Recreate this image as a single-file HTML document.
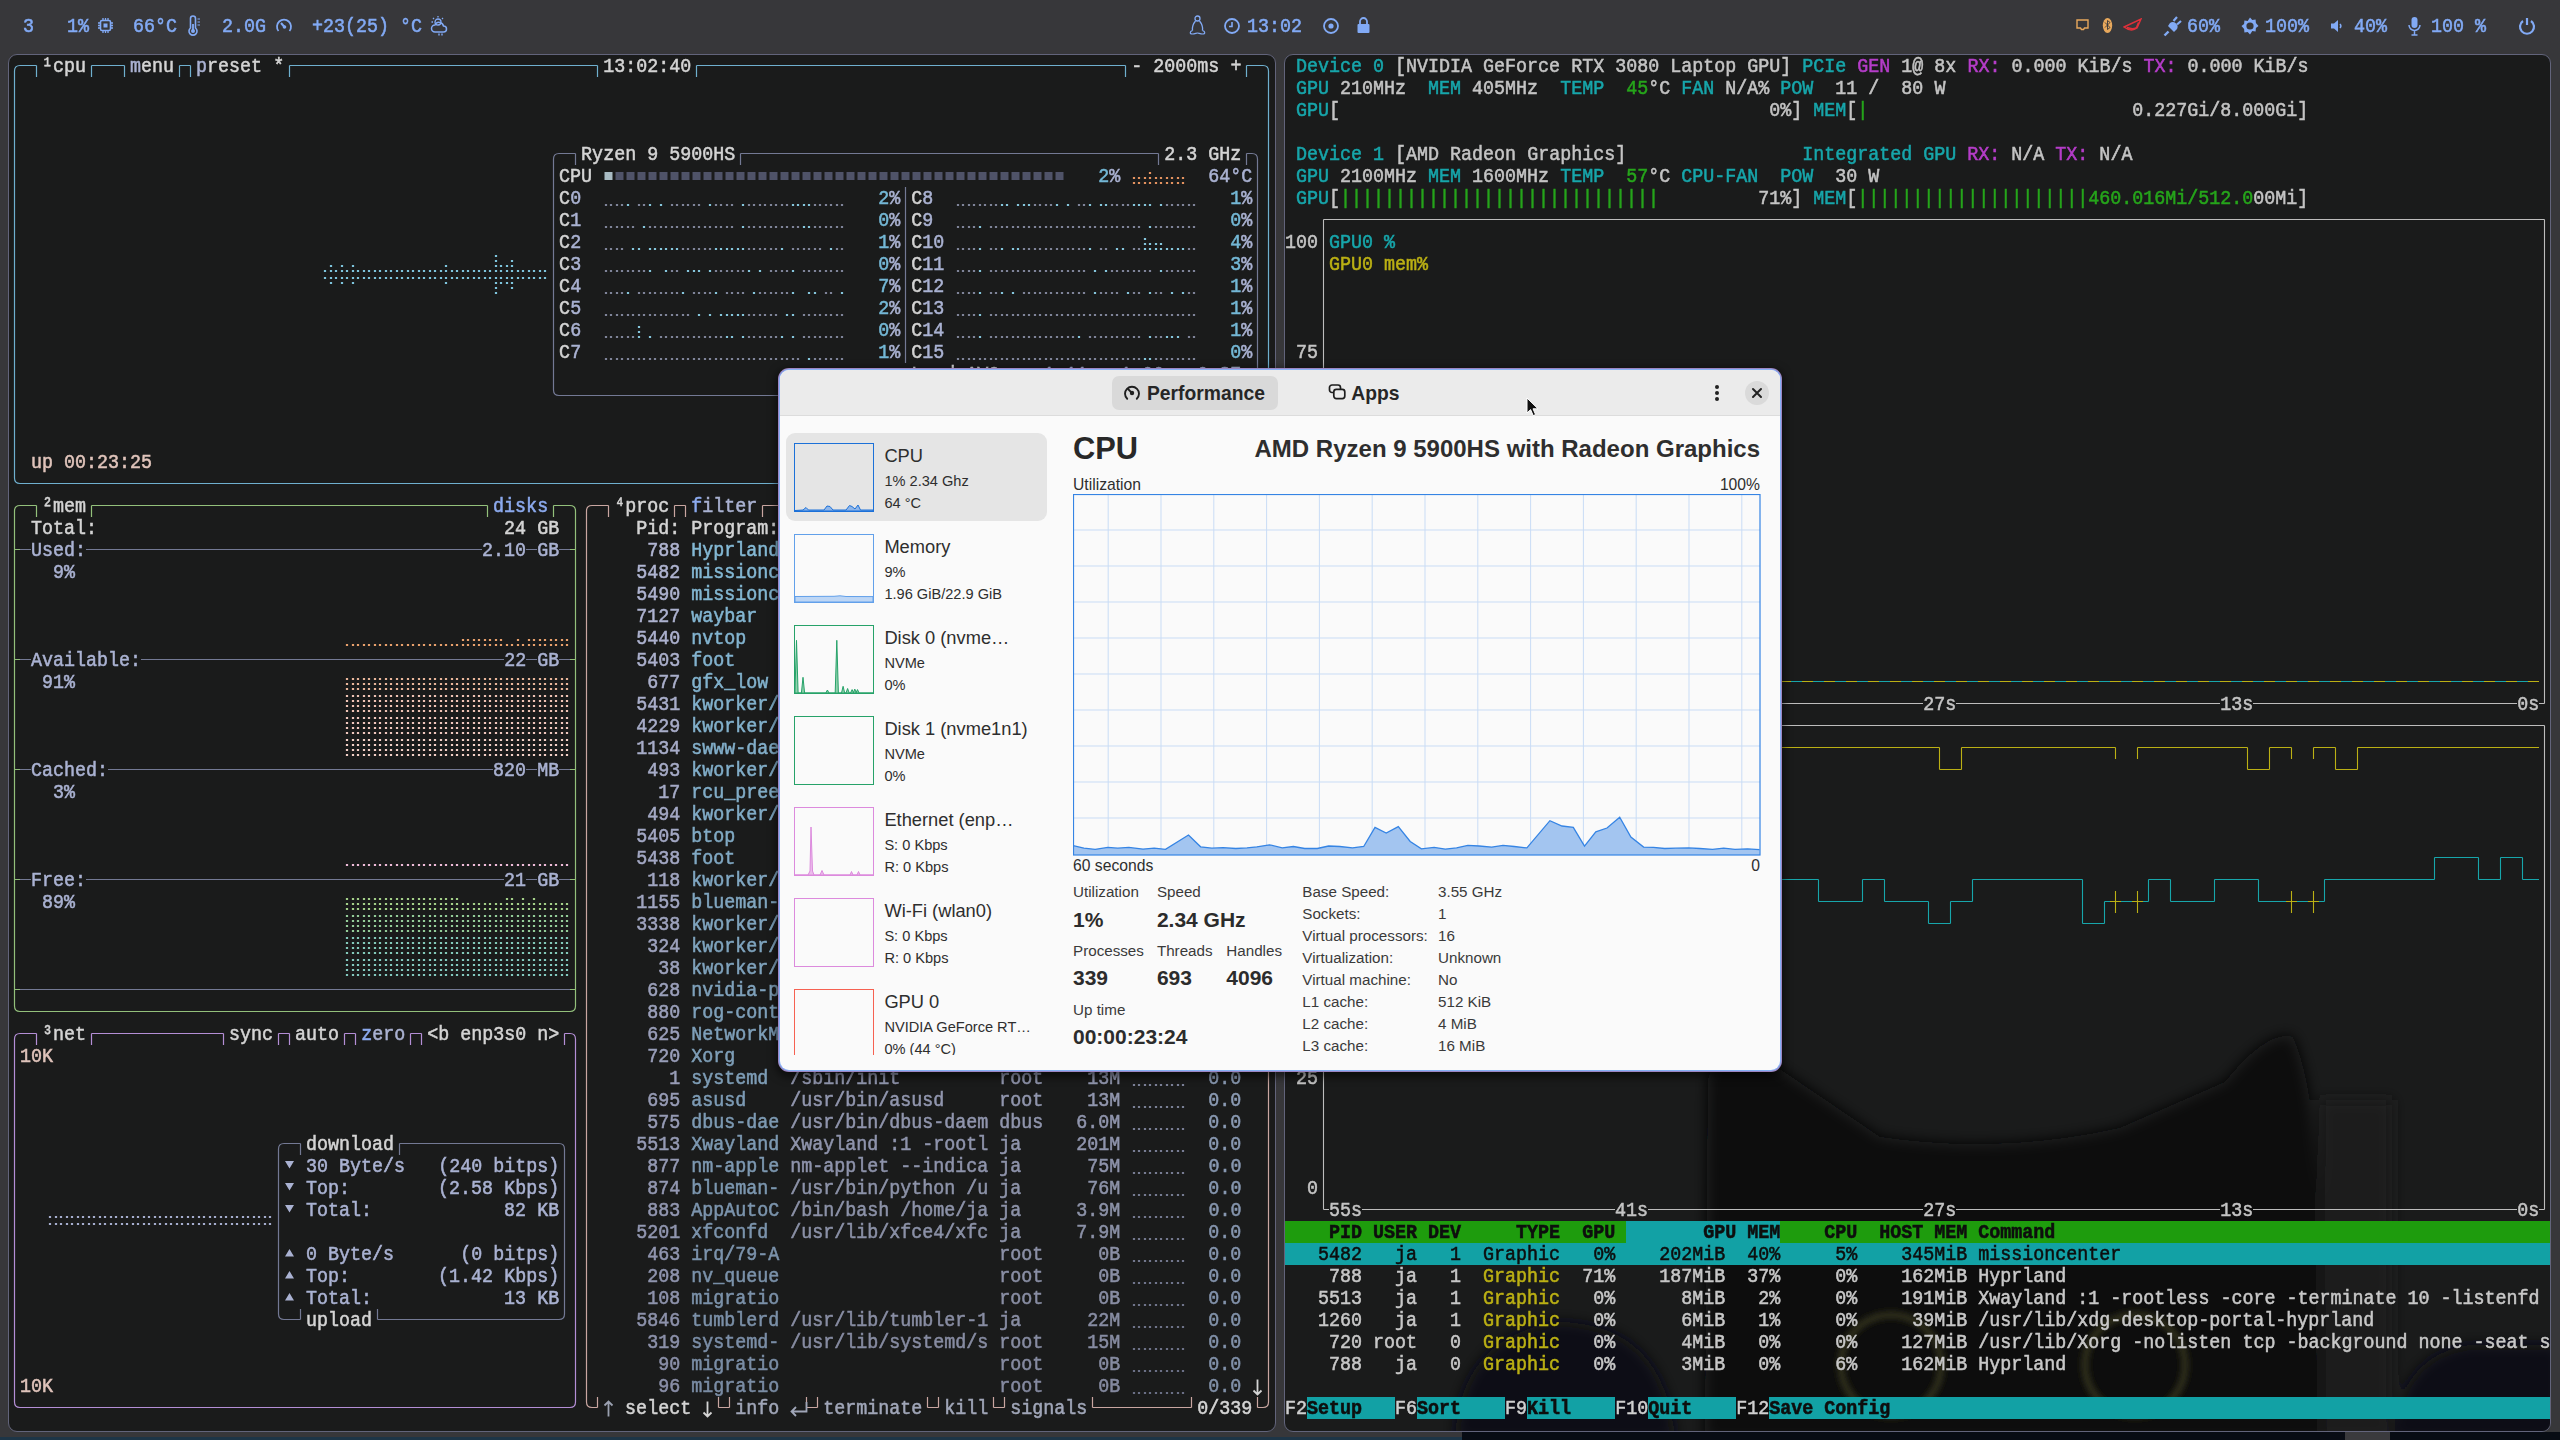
<!DOCTYPE html><html><head><meta charset="utf-8"><style>
*{margin:0;padding:0;box-sizing:border-box}
html,body{width:2560px;height:1440px;overflow:hidden;background:#37373a;position:relative}
.t{position:absolute;height:22px;line-height:22px;font-family:"Liberation Mono",monospace;font-size:20px;white-space:pre;transform-origin:0 0;transform:scaleX(0.9167);-webkit-text-stroke-width:0.55px}
.win{position:absolute;border:1px solid #62647b;border-radius:9px;overflow:hidden}
.ui{font-family:"Liberation Sans",sans-serif;position:absolute;white-space:pre;color:#2f2f2f}
</style></head><body>
<div style="position:absolute;left:0;top:1437px;width:2560px;height:3px;background:#1d3547"></div>
<div style="position:absolute;left:1462px;top:1432px;width:1098px;height:8px;background:#080c14"></div>
<div style="position:absolute;left:2345px;top:1432px;width:45px;height:8px;background:#3a3a3d"></div>
<div class="t" style="left:23px;top:16px;color:#82aaf5">3</div>
<div class="t" style="left:67px;top:16px;color:#82aaf5">1%</div>
<svg style="position:absolute;left:97px;top:17px" width="17" height="17" viewBox="0 0 17 17"><rect x="3.5" y="3.5" width="10" height="10" rx="1.5" fill="none" stroke="#82aaf5" stroke-width="1.6"/><rect x="6.5" y="6.5" width="4" height="4" fill="#82aaf5"/><path d="M6 1v2M8.5 1v2M11 1v2M6 14v2M8.5 14v2M11 14v2M1 6h2M1 8.5h2M1 11h2M14 6h2M14 8.5h2M14 11h2" stroke="#82aaf5" stroke-width="1.3"/></svg>
<div class="t" style="left:133px;top:16px;color:#82aaf5">66°C</div>
<svg style="position:absolute;left:186px;top:15px" width="16" height="22" viewBox="0 0 16 22"><path d="M4.5 3.5a2.5 2.5 0 0 1 5 0v9.5a4 4 0 1 1-5 0z" fill="none" stroke="#82aaf5" stroke-width="1.6"/><circle cx="7" cy="16" r="2" fill="#82aaf5"/><path d="M7 9v6" stroke="#82aaf5" stroke-width="1.8"/><path d="M11.5 4h2.5M11.5 7h2.5M11.5 10h2.5" stroke="#82aaf5" stroke-width="1.2"/></svg>
<div class="t" style="left:222px;top:16px;color:#82aaf5">2.0G</div>
<svg style="position:absolute;left:275px;top:17px" width="18" height="17" viewBox="0 0 18 17"><path d="M3.5 14A7 7 0 1 1 14.5 14" fill="none" stroke="#82aaf5" stroke-width="1.8"/><path d="M6 6l3.5 4" stroke="#82aaf5" stroke-width="2"/><circle cx="9.5" cy="10" r="1.8" fill="#82aaf5"/></svg>
<div class="t" style="left:312px;top:16px;color:#82aaf5">+23(25) °C</div>
<svg style="position:absolute;left:430px;top:15px" width="20" height="22" viewBox="0 0 20 22"><circle cx="8" cy="7" r="3" fill="none" stroke="#82aaf5" stroke-width="1.3"/><path d="M8 1v1.5M3 3l1 1M13 3l-1 1M1.5 7H3" stroke="#82aaf5" stroke-width="1.3"/><path d="M5 17a3.5 3.5 0 0 1 0-7a4.5 4.5 0 0 1 8.5 1a3 3 0 0 1 0 6z" fill="none" stroke="#82aaf5" stroke-width="1.5"/><path d="M9 18.5v2M12 18.5v2" stroke="#82aaf5" stroke-width="1.4"/></svg>
<svg style="position:absolute;left:1188px;top:15px" width="19" height="21" viewBox="0 0 19 21"><circle cx="9.5" cy="3.5" r="2.5" fill="none" stroke="#82aaf5" stroke-width="1.3"/><path d="M7.5 6C5 9 4 12 4.5 15.5M11.5 6C14 9 15 12 14.5 15.5" fill="none" stroke="#82aaf5" stroke-width="1.3"/><path d="M4.5 15.5c-3 1-3 3.5 0 3.5c2 0 4-1 5-1s3 1 5 1c3 0 3-2.5 0-3.5" fill="none" stroke="#82aaf5" stroke-width="1.2"/></svg>
<svg style="position:absolute;left:1223px;top:17px" width="18" height="18" viewBox="0 0 18 18"><circle cx="9" cy="9" r="7" fill="none" stroke="#82aaf5" stroke-width="1.8"/><path d="M9 5v4.5H6" fill="none" stroke="#82aaf5" stroke-width="1.6"/></svg>
<div class="t" style="left:1247px;top:16px;color:#82aaf5">13:02</div>
<svg style="position:absolute;left:1322px;top:17px" width="18" height="18" viewBox="0 0 18 18"><circle cx="9" cy="9" r="7" fill="none" stroke="#82aaf5" stroke-width="1.8"/><circle cx="9" cy="9" r="2.6" fill="#82aaf5"/></svg>
<svg style="position:absolute;left:1356px;top:16px" width="15" height="18" viewBox="0 0 15 18"><path d="M4 8V5.5a3.5 3.5 0 0 1 7 0V8" fill="none" stroke="#82aaf5" stroke-width="1.8"/><rect x="1.5" y="8" width="12" height="9" rx="1" fill="#82aaf5"/></svg>
<svg style="position:absolute;left:2076px;top:19px" width="13" height="12" viewBox="0 0 13 12"><path d="M1 1h11v8H8.5l-1 1.5h-2l-1-1.5H1z" fill="none" stroke="#e8a85c" stroke-width="1.4"/></svg>
<svg style="position:absolute;left:2102px;top:17px" width="11" height="17" viewBox="0 0 11 17"><ellipse cx="5.5" cy="8.5" rx="4.7" ry="7.6" fill="#e8a85c"/><path d="M3 5.5l5 5l-2.5 2v-9l2.5 2l-5 5" fill="none" stroke="#37373a" stroke-width="0.9"/></svg>
<svg style="position:absolute;left:2123px;top:18px" width="19" height="14" viewBox="0 0 19 14"><path d="M1 9l17-8l-4 9C10 13 5 12 1 9zM4 9.5c4 1.5 7 1.5 9.5 0l2-5" fill="none" stroke="#e0303a" stroke-width="1.4"/></svg>
<svg style="position:absolute;left:2163px;top:15px" width="20" height="22" viewBox="0 0 20 22"><path d="M1.5 20.5l4-4" stroke="#82aaf5" stroke-width="2.4"/><path d="M5 11l6 6l2.5-2.5c1.5-1.5 1.5-4 0-5.5l-1-1c-1.5-1.5-4-1.5-5.5 0z" fill="#82aaf5"/><path d="M10.5 6l3.5-4M14 9.5l4-3.5" stroke="#82aaf5" stroke-width="2.2"/></svg>
<div class="t" style="left:2187px;top:16px;color:#82aaf5">60%</div>
<svg style="position:absolute;left:2241px;top:17px" width="18" height="18" viewBox="0 0 18 18"><path d="M9 0.5l2.3 2.4l3.3-.3l.3 3.3L17.5 9l-2.6 2.1l-.3 3.3l-3.3-.3L9 17.5l-2.3-2.4l-3.3.3l-.3-3.3L.5 9l2.6-2.1l.3-3.3l3.3.3z" fill="#82aaf5"/><circle cx="9" cy="9" r="3.6" fill="#37373a"/></svg>
<div class="t" style="left:2265px;top:16px;color:#82aaf5">100%</div>
<svg style="position:absolute;left:2330px;top:19px" width="14" height="14" viewBox="0 0 14 14"><path d="M1 4.5h3l4-3.5v12l-4-3.5H1z" fill="#82aaf5"/><path d="M10 5a3 3 0 0 1 0 4" fill="none" stroke="#82aaf5" stroke-width="1.5"/></svg>
<div class="t" style="left:2354px;top:16px;color:#82aaf5">40%</div>
<svg style="position:absolute;left:2407px;top:16px" width="15" height="20" viewBox="0 0 15 20"><rect x="4.5" y="1" width="6" height="11" rx="3" fill="#82aaf5"/><path d="M2 9a5.5 5.5 0 0 0 11 0M7.5 14.5V19M4.5 19h6" fill="none" stroke="#82aaf5" stroke-width="1.5"/></svg>
<div class="t" style="left:2431px;top:16px;color:#82aaf5">100 %</div>
<svg style="position:absolute;left:2518px;top:17px" width="18" height="18" viewBox="0 0 18 18"><path d="M5 4a7 7 0 1 0 8 0" fill="none" stroke="#82aaf5" stroke-width="2.2"/><path d="M9 1v7" stroke="#82aaf5" stroke-width="2.2"/></svg>
<div class="win" style="left:8px;top:54px;width:1268px;height:1378px;background:#1a1b1b"></div>
<svg style="position:absolute;left:9px;top:55px" width="1265" height="1364"><path d="M5.5 22V16Q5.5 10.5 11 10.5H11M11 10.5H22M22 10.5H27.5M27.5 10.5V22M82.5 10.5H88M82.5 10.5V22M88 10.5H99M99 10.5H110M110 10.5H115.5M115.5 10.5V22M170.5 10.5H176M170.5 10.5V22M176 10.5H181.5M181.5 10.5V22M280.5 10.5H286M280.5 10.5V22M286 10.5H297M297 10.5H308M308 10.5H319M319 10.5H330M330 10.5H341M341 10.5H352M352 10.5H363M363 10.5H374M374 10.5H385M385 10.5H396M396 10.5H407M407 10.5H418M418 10.5H429M429 10.5H440M440 10.5H451M451 10.5H462M462 10.5H473M473 10.5H484M484 10.5H495M495 10.5H506M506 10.5H517M517 10.5H528M528 10.5H539M539 10.5H550M550 10.5H561M561 10.5H572M572 10.5H583M583 10.5H588.5M588.5 10.5V22M687.5 10.5H693M687.5 10.5V22M693 10.5H704M704 10.5H715M715 10.5H726M726 10.5H737M737 10.5H748M748 10.5H759M759 10.5H770M770 10.5H781M781 10.5H792M792 10.5H803M803 10.5H814M814 10.5H825M825 10.5H836M836 10.5H847M847 10.5H858M858 10.5H869M869 10.5H880M880 10.5H891M891 10.5H902M902 10.5H913M913 10.5H924M924 10.5H935M935 10.5H946M946 10.5H957M957 10.5H968M968 10.5H979M979 10.5H990M990 10.5H1001M1001 10.5H1012M1012 10.5H1023M1023 10.5H1034M1034 10.5H1045M1045 10.5H1056M1056 10.5H1067M1067 10.5H1078M1078 10.5H1089M1089 10.5H1100M1100 10.5H1111M1111 10.5H1116.5M1116.5 10.5V22M1237.5 10.5H1243M1237.5 10.5V22M1243 10.5H1254M1254 10.5H1254Q1259.5 10.5 1259.5 16V22M5.5 22V44M1259.5 22V44M5.5 44V66M1259.5 44V66M5.5 66V88M1259.5 66V88M5.5 88V110M1259.5 88V110M5.5 110V132M1259.5 110V132M5.5 132V154M1259.5 132V154M5.5 154V176M1259.5 154V176M5.5 176V198M1259.5 176V198M5.5 198V220M1259.5 198V220M5.5 220V242M1259.5 220V242M5.5 242V264M1259.5 242V264M5.5 264V286M1259.5 264V286M5.5 286V308M1259.5 286V308M5.5 308V330M1259.5 308V330M5.5 330V352M1259.5 330V352M5.5 352V374M1259.5 352V374M5.5 374V396M1259.5 374V396M5.5 396V418M1259.5 396V418M5.5 418V423Q5.5 428.5 11 428.5H11M11 428.5H22M22 428.5H33M33 428.5H44M44 428.5H55M55 428.5H66M66 428.5H77M77 428.5H88M88 428.5H99M99 428.5H110M110 428.5H121M121 428.5H132M132 428.5H143M143 428.5H154M154 428.5H165M165 428.5H176M176 428.5H187M187 428.5H198M198 428.5H209M209 428.5H220M220 428.5H231M231 428.5H242M242 428.5H253M253 428.5H264M264 428.5H275M275 428.5H286M286 428.5H297M297 428.5H308M308 428.5H319M319 428.5H330M330 428.5H341M341 428.5H352M352 428.5H363M363 428.5H374M374 428.5H385M385 428.5H396M396 428.5H407M407 428.5H418M418 428.5H429M429 428.5H440M440 428.5H451M451 428.5H462M462 428.5H473M473 428.5H484M484 428.5H495M495 428.5H506M506 428.5H517M517 428.5H528M528 428.5H539M539 428.5H550M550 428.5H561M561 428.5H572M572 428.5H583M583 428.5H594M594 428.5H605M605 428.5H616M616 428.5H627M627 428.5H638M638 428.5H649M649 428.5H660M660 428.5H671M671 428.5H682M682 428.5H693M693 428.5H704M704 428.5H715M715 428.5H726M726 428.5H737M737 428.5H748M748 428.5H759M759 428.5H770M770 428.5H781M781 428.5H792M792 428.5H803M803 428.5H814M814 428.5H825M825 428.5H836M836 428.5H847M847 428.5H858M858 428.5H869M869 428.5H880M880 428.5H891M891 428.5H902M902 428.5H913M913 428.5H924M924 428.5H935M935 428.5H946M946 428.5H957M957 428.5H968M968 428.5H979M979 428.5H990M990 428.5H1001M1001 428.5H1012M1012 428.5H1023M1023 428.5H1034M1034 428.5H1045M1045 428.5H1056M1056 428.5H1067M1067 428.5H1078M1078 428.5H1089M1089 428.5H1100M1100 428.5H1111M1111 428.5H1122M1122 428.5H1133M1133 428.5H1144M1144 428.5H1155M1155 428.5H1166M1166 428.5H1177M1177 428.5H1188M1188 428.5H1199M1199 428.5H1210M1210 428.5H1221M1221 428.5H1232M1232 428.5H1243M1243 428.5H1254M1254 428.5H1254Q1259.5 428.5 1259.5 423V418" stroke="#6fb0cf" stroke-width="1.2" fill="none"/><path d="M544.5 110V104Q544.5 98.5 550 98.5H550M550 98.5H561M561 98.5H566.5M566.5 98.5V110M731.5 98.5H737M731.5 98.5V110M737 98.5H748M748 98.5H759M759 98.5H770M770 98.5H781M781 98.5H792M792 98.5H803M803 98.5H814M814 98.5H825M825 98.5H836M836 98.5H847M847 98.5H858M858 98.5H869M869 98.5H880M880 98.5H891M891 98.5H902M902 98.5H913M913 98.5H924M924 98.5H935M935 98.5H946M946 98.5H957M957 98.5H968M968 98.5H979M979 98.5H990M990 98.5H1001M1001 98.5H1012M1012 98.5H1023M1023 98.5H1034M1034 98.5H1045M1045 98.5H1056M1056 98.5H1067M1067 98.5H1078M1078 98.5H1089M1089 98.5H1100M1100 98.5H1111M1111 98.5H1122M1122 98.5H1133M1133 98.5H1144M1144 98.5H1149.5M1149.5 98.5V110M1237.5 98.5H1243M1237.5 98.5V110M1243 98.5H1243Q1248.5 98.5 1248.5 104V110M544.5 110V132M1248.5 110V132M544.5 132V154M896.5 132V154M1248.5 132V154M544.5 154V176M896.5 154V176M1248.5 154V176M544.5 176V198M896.5 176V198M1248.5 176V198M544.5 198V220M896.5 198V220M1248.5 198V220M544.5 220V242M896.5 220V242M1248.5 220V242M544.5 242V264M896.5 242V264M1248.5 242V264M544.5 264V286M896.5 264V286M1248.5 264V286M544.5 286V308M896.5 286V308M1248.5 286V308M544.5 308V330M1248.5 308V330M544.5 330V335Q544.5 340.5 550 340.5H550M550 340.5H561M561 340.5H572M572 340.5H583M583 340.5H594M594 340.5H605M605 340.5H616M616 340.5H627M627 340.5H638M638 340.5H649M649 340.5H660M660 340.5H671M671 340.5H682M682 340.5H693M693 340.5H704M704 340.5H715M715 340.5H726M726 340.5H737M737 340.5H748M748 340.5H759M759 340.5H770M770 340.5H781M781 340.5H792M792 340.5H803M803 340.5H814M814 340.5H825M825 340.5H836M836 340.5H847M847 340.5H858M858 340.5H869M869 340.5H880M880 340.5H891M891 340.5H902M902 340.5H913M913 340.5H924M924 340.5H935M935 340.5H946M946 340.5H957M957 340.5H968M968 340.5H979M979 340.5H990M990 340.5H1001M1001 340.5H1012M1012 340.5H1023M1023 340.5H1034M1034 340.5H1045M1045 340.5H1056M1056 340.5H1067M1067 340.5H1078M1078 340.5H1089M1089 340.5H1100M1100 340.5H1111M1111 340.5H1122M1122 340.5H1133M1133 340.5H1144M1144 340.5H1155M1155 340.5H1166M1166 340.5H1177M1177 340.5H1188M1188 340.5H1199M1199 340.5H1210M1210 340.5H1221M1221 340.5H1232M1232 340.5H1243M1243 340.5H1243Q1248.5 340.5 1248.5 335V330M11 494.5H22M77 494.5H88M88 494.5H99M99 494.5H110M110 494.5H121M121 494.5H132M132 494.5H143M143 494.5H154M154 494.5H165M165 494.5H176M176 494.5H187M187 494.5H198M198 494.5H209M209 494.5H220M220 494.5H231M231 494.5H242M242 494.5H253M253 494.5H264M264 494.5H275M275 494.5H286M286 494.5H297M297 494.5H308M308 494.5H319M319 494.5H330M330 494.5H341M341 494.5H352M352 494.5H363M363 494.5H374M374 494.5H385M385 494.5H396M396 494.5H407M407 494.5H418M418 494.5H429M429 494.5H440M440 494.5H451M451 494.5H462M462 494.5H473M517 494.5H528M550 494.5H561M11 604.5H22M132 604.5H143M143 604.5H154M154 604.5H165M165 604.5H176M176 604.5H187M187 604.5H198M198 604.5H209M209 604.5H220M220 604.5H231M231 604.5H242M242 604.5H253M253 604.5H264M264 604.5H275M275 604.5H286M286 604.5H297M297 604.5H308M308 604.5H319M319 604.5H330M330 604.5H341M341 604.5H352M352 604.5H363M363 604.5H374M374 604.5H385M385 604.5H396M396 604.5H407M407 604.5H418M418 604.5H429M429 604.5H440M440 604.5H451M451 604.5H462M462 604.5H473M473 604.5H484M484 604.5H495M517 604.5H528M550 604.5H561M11 714.5H22M99 714.5H110M110 714.5H121M121 714.5H132M132 714.5H143M143 714.5H154M154 714.5H165M165 714.5H176M176 714.5H187M187 714.5H198M198 714.5H209M209 714.5H220M220 714.5H231M231 714.5H242M242 714.5H253M253 714.5H264M264 714.5H275M275 714.5H286M286 714.5H297M297 714.5H308M308 714.5H319M319 714.5H330M330 714.5H341M341 714.5H352M352 714.5H363M363 714.5H374M374 714.5H385M385 714.5H396M396 714.5H407M407 714.5H418M418 714.5H429M429 714.5H440M440 714.5H451M451 714.5H462M462 714.5H473M473 714.5H484M517 714.5H528M550 714.5H561M11 824.5H22M77 824.5H88M88 824.5H99M99 824.5H110M110 824.5H121M121 824.5H132M132 824.5H143M143 824.5H154M154 824.5H165M165 824.5H176M176 824.5H187M187 824.5H198M198 824.5H209M209 824.5H220M220 824.5H231M231 824.5H242M242 824.5H253M253 824.5H264M264 824.5H275M275 824.5H286M286 824.5H297M297 824.5H308M308 824.5H319M319 824.5H330M330 824.5H341M341 824.5H352M352 824.5H363M363 824.5H374M374 824.5H385M385 824.5H396M396 824.5H407M407 824.5H418M418 824.5H429M429 824.5H440M440 824.5H451M451 824.5H462M462 824.5H473M473 824.5H484M484 824.5H495M517 824.5H528M550 824.5H561M11 934.5H22M22 934.5H33M33 934.5H44M44 934.5H55M55 934.5H66M66 934.5H77M77 934.5H88M88 934.5H99M99 934.5H110M110 934.5H121M121 934.5H132M132 934.5H143M143 934.5H154M154 934.5H165M165 934.5H176M176 934.5H187M187 934.5H198M198 934.5H209M209 934.5H220M220 934.5H231M231 934.5H242M242 934.5H253M253 934.5H264M264 934.5H275M275 934.5H286M286 934.5H297M297 934.5H308M308 934.5H319M319 934.5H330M330 934.5H341M341 934.5H352M352 934.5H363M363 934.5H374M374 934.5H385M385 934.5H396M396 934.5H407M407 934.5H418M418 934.5H429M429 934.5H440M440 934.5H451M451 934.5H462M462 934.5H473M473 934.5H484M484 934.5H495M495 934.5H506M506 934.5H517M517 934.5H528M528 934.5H539M539 934.5H550M550 934.5H561M269.5 1100V1094Q269.5 1088.5 275 1088.5H275M275 1088.5H286M286 1088.5H291.5M291.5 1088.5V1100M390.5 1088.5H396M390.5 1088.5V1100M396 1088.5H407M407 1088.5H418M418 1088.5H429M429 1088.5H440M440 1088.5H451M451 1088.5H462M462 1088.5H473M473 1088.5H484M484 1088.5H495M495 1088.5H506M506 1088.5H517M517 1088.5H528M528 1088.5H539M539 1088.5H550M550 1088.5H550Q555.5 1088.5 555.5 1094V1100M269.5 1100V1122M555.5 1100V1122M269.5 1122V1144M555.5 1122V1144M269.5 1144V1166M555.5 1144V1166M269.5 1166V1188M555.5 1166V1188M269.5 1188V1210M555.5 1188V1210M269.5 1210V1232M555.5 1210V1232M269.5 1232V1254M555.5 1232V1254M269.5 1254V1259Q269.5 1264.5 275 1264.5H275M275 1264.5H286M286 1264.5H291.5M291.5 1254V1264.5M368.5 1264.5H374M368.5 1254V1264.5M374 1264.5H385M385 1264.5H396M396 1264.5H407M407 1264.5H418M418 1264.5H429M429 1264.5H440M440 1264.5H451M451 1264.5H462M462 1264.5H473M473 1264.5H484M484 1264.5H495M495 1264.5H506M506 1264.5H517M517 1264.5H528M528 1264.5H539M539 1264.5H550M550 1264.5H550Q555.5 1264.5 555.5 1259V1254" stroke="#737994" stroke-width="1.2" fill="none"/><path d="M5.5 462V456Q5.5 450.5 11 450.5H11M11 450.5H22M22 450.5H27.5M27.5 450.5V462M82.5 450.5H88M82.5 450.5V462M88 450.5H99M99 450.5H110M110 450.5H121M121 450.5H132M132 450.5H143M143 450.5H154M154 450.5H165M165 450.5H176M176 450.5H187M187 450.5H198M198 450.5H209M209 450.5H220M220 450.5H231M231 450.5H242M242 450.5H253M253 450.5H264M264 450.5H275M275 450.5H286M286 450.5H297M297 450.5H308M308 450.5H319M319 450.5H330M330 450.5H341M341 450.5H352M352 450.5H363M363 450.5H374M374 450.5H385M385 450.5H396M396 450.5H407M407 450.5H418M418 450.5H429M429 450.5H440M440 450.5H451M451 450.5H462M462 450.5H473M473 450.5H478.5M478.5 450.5V462M544.5 450.5H550M544.5 450.5V462M550 450.5H561M561 450.5H561Q566.5 450.5 566.5 456V462M5.5 462V484M566.5 462V484M5.5 494.5H11M5.5 484V506M561 494.5H566.5M566.5 484V506M5.5 506V528M566.5 506V528M5.5 528V550M566.5 528V550M5.5 550V572M566.5 550V572M5.5 572V594M566.5 572V594M5.5 604.5H11M5.5 594V616M561 604.5H566.5M566.5 594V616M5.5 616V638M566.5 616V638M5.5 638V660M566.5 638V660M5.5 660V682M566.5 660V682M5.5 682V704M566.5 682V704M5.5 714.5H11M5.5 704V726M561 714.5H566.5M566.5 704V726M5.5 726V748M566.5 726V748M5.5 748V770M566.5 748V770M5.5 770V792M566.5 770V792M5.5 792V814M566.5 792V814M5.5 824.5H11M5.5 814V836M561 824.5H566.5M566.5 814V836M5.5 836V858M566.5 836V858M5.5 858V880M566.5 858V880M5.5 880V902M566.5 880V902M5.5 902V924M566.5 902V924M5.5 934.5H11M5.5 924V946M561 934.5H566.5M566.5 924V946M5.5 946V951Q5.5 956.5 11 956.5H11M11 956.5H22M22 956.5H33M33 956.5H44M44 956.5H55M55 956.5H66M66 956.5H77M77 956.5H88M88 956.5H99M99 956.5H110M110 956.5H121M121 956.5H132M132 956.5H143M143 956.5H154M154 956.5H165M165 956.5H176M176 956.5H187M187 956.5H198M198 956.5H209M209 956.5H220M220 956.5H231M231 956.5H242M242 956.5H253M253 956.5H264M264 956.5H275M275 956.5H286M286 956.5H297M297 956.5H308M308 956.5H319M319 956.5H330M330 956.5H341M341 956.5H352M352 956.5H363M363 956.5H374M374 956.5H385M385 956.5H396M396 956.5H407M407 956.5H418M418 956.5H429M429 956.5H440M440 956.5H451M451 956.5H462M462 956.5H473M473 956.5H484M484 956.5H495M495 956.5H506M506 956.5H517M517 956.5H528M528 956.5H539M539 956.5H550M550 956.5H561M561 956.5H561Q566.5 956.5 566.5 951V946" stroke="#93c07b" stroke-width="1.2" fill="none"/><path d="M577.5 462V456Q577.5 450.5 583 450.5H583M583 450.5H594M594 450.5H599.5M599.5 450.5V462M665.5 450.5H671M665.5 450.5V462M671 450.5H676.5M676.5 450.5V462M753.5 450.5H759M753.5 450.5V462M759 450.5H770M770 450.5H781M781 450.5H792M792 450.5H803M803 450.5H814M814 450.5H825M825 450.5H836M836 450.5H847M847 450.5H858M858 450.5H869M869 450.5H880M880 450.5H891M891 450.5H902M902 450.5H913M913 450.5H924M924 450.5H935M935 450.5H946M946 450.5H957M957 450.5H968M968 450.5H979M979 450.5H990M990 450.5H1001M1001 450.5H1012M1012 450.5H1023M1023 450.5H1034M1034 450.5H1045M1045 450.5H1056M1056 450.5H1067M1067 450.5H1078M1078 450.5H1089M1089 450.5H1100M1100 450.5H1111M1111 450.5H1122M1122 450.5H1133M1133 450.5H1144M1144 450.5H1155M1155 450.5H1166M1166 450.5H1177M1177 450.5H1188M1188 450.5H1199M1199 450.5H1210M1210 450.5H1221M1221 450.5H1232M1232 450.5H1243M1243 450.5H1254M1254 450.5H1254Q1259.5 450.5 1259.5 456V462M577.5 462V484M1259.5 462V484M577.5 484V506M1259.5 484V506M577.5 506V528M1259.5 506V528M577.5 528V550M1259.5 528V550M577.5 550V572M1259.5 550V572M577.5 572V594M1259.5 572V594M577.5 594V616M1259.5 594V616M577.5 616V638M1259.5 616V638M577.5 638V660M1259.5 638V660M577.5 660V682M1259.5 660V682M577.5 682V704M1259.5 682V704M577.5 704V726M1259.5 704V726M577.5 726V748M1259.5 726V748M577.5 748V770M1259.5 748V770M577.5 770V792M1259.5 770V792M577.5 792V814M1259.5 792V814M577.5 814V836M1259.5 814V836M577.5 836V858M1259.5 836V858M577.5 858V880M1259.5 858V880M577.5 880V902M1259.5 880V902M577.5 902V924M1259.5 902V924M577.5 924V946M1259.5 924V946M577.5 946V968M1259.5 946V968M577.5 968V990M1259.5 968V990M577.5 990V1012M1259.5 990V1012M577.5 1012V1034M1259.5 1012V1034M577.5 1034V1056M1259.5 1034V1056M577.5 1056V1078M1259.5 1056V1078M577.5 1078V1100M1259.5 1078V1100M577.5 1100V1122M1259.5 1100V1122M577.5 1122V1144M1259.5 1122V1144M577.5 1144V1166M1259.5 1144V1166M577.5 1166V1188M1259.5 1166V1188M577.5 1188V1210M1259.5 1188V1210M577.5 1210V1232M1259.5 1210V1232M577.5 1232V1254M1259.5 1232V1254M577.5 1254V1276M1259.5 1254V1276M577.5 1276V1298M1259.5 1276V1298M577.5 1298V1320M1259.5 1298V1320M577.5 1320V1342M1259.5 1320V1342M577.5 1342V1347Q577.5 1352.5 583 1352.5H583M583 1352.5H588.5M588.5 1342V1352.5M709.5 1352.5H715M709.5 1342V1352.5M715 1352.5H720.5M720.5 1342V1352.5M797.5 1352.5H803M797.5 1342V1352.5M803 1352.5H808.5M808.5 1342V1352.5M918.5 1352.5H924M918.5 1342V1352.5M924 1352.5H929.5M929.5 1342V1352.5M984.5 1352.5H990M984.5 1342V1352.5M990 1352.5H995.5M995.5 1342V1352.5M1083.5 1352.5H1089M1083.5 1342V1352.5M1089 1352.5H1100M1100 1352.5H1111M1111 1352.5H1122M1122 1352.5H1133M1133 1352.5H1144M1144 1352.5H1155M1155 1352.5H1166M1166 1352.5H1177M1177 1352.5H1182.5M1182.5 1342V1352.5M1248.5 1352.5H1254M1248.5 1342V1352.5M1254 1352.5H1254Q1259.5 1352.5 1259.5 1347V1342" stroke="#c9a6a1" stroke-width="1.2" fill="none"/><path d="M5.5 990V984Q5.5 978.5 11 978.5H11M11 978.5H22M22 978.5H27.5M27.5 978.5V990M82.5 978.5H88M82.5 978.5V990M88 978.5H99M99 978.5H110M110 978.5H121M121 978.5H132M132 978.5H143M143 978.5H154M154 978.5H165M165 978.5H176M176 978.5H187M187 978.5H198M198 978.5H209M209 978.5H214.5M214.5 978.5V990M269.5 978.5H275M269.5 978.5V990M275 978.5H280.5M280.5 978.5V990M335.5 978.5H341M335.5 978.5V990M341 978.5H346.5M346.5 978.5V990M401.5 978.5H407M401.5 978.5V990M407 978.5H412.5M412.5 978.5V990M555.5 978.5H561M555.5 978.5V990M561 978.5H561Q566.5 978.5 566.5 984V990M5.5 990V1012M566.5 990V1012M5.5 1012V1034M566.5 1012V1034M5.5 1034V1056M566.5 1034V1056M5.5 1056V1078M566.5 1056V1078M5.5 1078V1100M566.5 1078V1100M5.5 1100V1122M566.5 1100V1122M5.5 1122V1144M566.5 1122V1144M5.5 1144V1166M566.5 1144V1166M5.5 1166V1188M566.5 1166V1188M5.5 1188V1210M566.5 1188V1210M5.5 1210V1232M566.5 1210V1232M5.5 1232V1254M566.5 1232V1254M5.5 1254V1276M566.5 1254V1276M5.5 1276V1298M566.5 1276V1298M5.5 1298V1320M566.5 1298V1320M5.5 1320V1342M566.5 1320V1342M5.5 1342V1347Q5.5 1352.5 11 1352.5H11M11 1352.5H22M22 1352.5H33M33 1352.5H44M44 1352.5H55M55 1352.5H66M66 1352.5H77M77 1352.5H88M88 1352.5H99M99 1352.5H110M110 1352.5H121M121 1352.5H132M132 1352.5H143M143 1352.5H154M154 1352.5H165M165 1352.5H176M176 1352.5H187M187 1352.5H198M198 1352.5H209M209 1352.5H220M220 1352.5H231M231 1352.5H242M242 1352.5H253M253 1352.5H264M264 1352.5H275M275 1352.5H286M286 1352.5H297M297 1352.5H308M308 1352.5H319M319 1352.5H330M330 1352.5H341M341 1352.5H352M352 1352.5H363M363 1352.5H374M374 1352.5H385M385 1352.5H396M396 1352.5H407M407 1352.5H418M418 1352.5H429M429 1352.5H440M440 1352.5H451M451 1352.5H462M462 1352.5H473M473 1352.5H484M484 1352.5H495M495 1352.5H506M506 1352.5H517M517 1352.5H528M528 1352.5H539M539 1352.5H550M550 1352.5H561M561 1352.5H561Q566.5 1352.5 566.5 1347V1342" stroke="#b48ed6" stroke-width="1.2" fill="none"/><path d="M1248.5 1324.5V1339.5M1244.5 1335.5L1248.5 1339.5L1252.5 1335.5M698.5 1346.5V1361.5M694.5 1357.5L698.5 1361.5L702.5 1357.5" stroke="#d4d4d4" stroke-width="1.8" fill="none"/><path d="M599.5 1361.5V1346.5M595.5 1350.5L599.5 1346.5L603.5 1350.5" stroke="#9aa0b0" stroke-width="1.8" fill="none"/><path d="M797.5 1347V1356.5H782.5M787 1352L782.5 1356.5L787 1361" stroke="#a0a6b8" stroke-width="1.8" fill="none"/><path d="M1123.9 121.9h2.2v2.2h-2.2zM1128.9 121.9h2.2v2.2h-2.2zM1123.9 126.9h2.2v2.2h-2.2zM1128.9 126.9h2.2v2.2h-2.2zM1134.9 121.9h2.2v2.2h-2.2zM1139.9 116.9h2.2v2.2h-2.2zM1139.9 121.9h2.2v2.2h-2.2zM1134.9 126.9h2.2v2.2h-2.2zM1139.9 126.9h2.2v2.2h-2.2zM1145.9 121.9h2.2v2.2h-2.2zM1150.9 121.9h2.2v2.2h-2.2zM1145.9 126.9h2.2v2.2h-2.2zM1150.9 126.9h2.2v2.2h-2.2zM1156.9 121.9h2.2v2.2h-2.2zM1161.9 121.9h2.2v2.2h-2.2zM1156.9 126.9h2.2v2.2h-2.2zM1161.9 126.9h2.2v2.2h-2.2zM1167.9 121.9h2.2v2.2h-2.2zM1172.9 121.9h2.2v2.2h-2.2zM1167.9 126.9h2.2v2.2h-2.2zM1172.9 126.9h2.2v2.2h-2.2z" fill="#e3925f"/><path d="M595.9 148.9h2.2v2.2h-2.2zM600.9 148.9h2.2v2.2h-2.2zM606.9 148.9h2.2v2.2h-2.2zM611.9 148.9h2.2v2.2h-2.2zM628.9 148.9h2.2v2.2h-2.2zM633.9 148.9h2.2v2.2h-2.2zM661.9 148.9h2.2v2.2h-2.2zM666.9 148.9h2.2v2.2h-2.2zM672.9 148.9h2.2v2.2h-2.2zM677.9 148.9h2.2v2.2h-2.2zM683.9 148.9h2.2v2.2h-2.2zM688.9 148.9h2.2v2.2h-2.2zM705.9 148.9h2.2v2.2h-2.2zM710.9 148.9h2.2v2.2h-2.2zM716.9 148.9h2.2v2.2h-2.2zM721.9 148.9h2.2v2.2h-2.2zM738.9 148.9h2.2v2.2h-2.2zM743.9 148.9h2.2v2.2h-2.2zM749.9 148.9h2.2v2.2h-2.2zM754.9 148.9h2.2v2.2h-2.2zM760.9 148.9h2.2v2.2h-2.2zM765.9 148.9h2.2v2.2h-2.2zM771.9 148.9h2.2v2.2h-2.2zM776.9 148.9h2.2v2.2h-2.2zM804.9 148.9h2.2v2.2h-2.2zM809.9 148.9h2.2v2.2h-2.2zM815.9 148.9h2.2v2.2h-2.2zM820.9 148.9h2.2v2.2h-2.2zM826.9 148.9h2.2v2.2h-2.2zM831.9 148.9h2.2v2.2h-2.2zM947.9 148.9h2.2v2.2h-2.2zM952.9 148.9h2.2v2.2h-2.2zM958.9 148.9h2.2v2.2h-2.2zM963.9 148.9h2.2v2.2h-2.2zM969.9 148.9h2.2v2.2h-2.2zM974.9 148.9h2.2v2.2h-2.2zM980.9 148.9h2.2v2.2h-2.2zM985.9 148.9h2.2v2.2h-2.2zM1024.9 148.9h2.2v2.2h-2.2zM1029.9 148.9h2.2v2.2h-2.2zM1035.9 148.9h2.2v2.2h-2.2zM1040.9 148.9h2.2v2.2h-2.2zM1068.9 148.9h2.2v2.2h-2.2zM1073.9 148.9h2.2v2.2h-2.2zM1101.9 148.9h2.2v2.2h-2.2zM1106.9 148.9h2.2v2.2h-2.2zM1112.9 148.9h2.2v2.2h-2.2zM1117.9 148.9h2.2v2.2h-2.2zM1156.9 148.9h2.2v2.2h-2.2zM1161.9 148.9h2.2v2.2h-2.2zM1167.9 148.9h2.2v2.2h-2.2zM1172.9 148.9h2.2v2.2h-2.2zM1178.9 148.9h2.2v2.2h-2.2zM1183.9 148.9h2.2v2.2h-2.2zM595.9 170.9h2.2v2.2h-2.2zM600.9 170.9h2.2v2.2h-2.2zM606.9 170.9h2.2v2.2h-2.2zM611.9 170.9h2.2v2.2h-2.2zM617.9 170.9h2.2v2.2h-2.2zM622.9 170.9h2.2v2.2h-2.2zM639.9 170.9h2.2v2.2h-2.2zM644.9 170.9h2.2v2.2h-2.2zM650.9 170.9h2.2v2.2h-2.2zM655.9 170.9h2.2v2.2h-2.2zM661.9 170.9h2.2v2.2h-2.2zM666.9 170.9h2.2v2.2h-2.2zM672.9 170.9h2.2v2.2h-2.2zM677.9 170.9h2.2v2.2h-2.2zM683.9 170.9h2.2v2.2h-2.2zM688.9 170.9h2.2v2.2h-2.2zM694.9 170.9h2.2v2.2h-2.2zM699.9 170.9h2.2v2.2h-2.2zM705.9 170.9h2.2v2.2h-2.2zM710.9 170.9h2.2v2.2h-2.2zM716.9 170.9h2.2v2.2h-2.2zM721.9 170.9h2.2v2.2h-2.2zM738.9 170.9h2.2v2.2h-2.2zM743.9 170.9h2.2v2.2h-2.2zM749.9 170.9h2.2v2.2h-2.2zM754.9 170.9h2.2v2.2h-2.2zM760.9 170.9h2.2v2.2h-2.2zM765.9 170.9h2.2v2.2h-2.2zM771.9 170.9h2.2v2.2h-2.2zM776.9 170.9h2.2v2.2h-2.2zM782.9 170.9h2.2v2.2h-2.2zM787.9 170.9h2.2v2.2h-2.2zM804.9 170.9h2.2v2.2h-2.2zM809.9 170.9h2.2v2.2h-2.2zM815.9 170.9h2.2v2.2h-2.2zM820.9 170.9h2.2v2.2h-2.2zM826.9 170.9h2.2v2.2h-2.2zM831.9 170.9h2.2v2.2h-2.2zM947.9 170.9h2.2v2.2h-2.2zM952.9 170.9h2.2v2.2h-2.2zM958.9 170.9h2.2v2.2h-2.2zM963.9 170.9h2.2v2.2h-2.2zM980.9 170.9h2.2v2.2h-2.2zM985.9 170.9h2.2v2.2h-2.2zM991.9 170.9h2.2v2.2h-2.2zM996.9 170.9h2.2v2.2h-2.2zM1002.9 170.9h2.2v2.2h-2.2zM1007.9 170.9h2.2v2.2h-2.2zM1013.9 170.9h2.2v2.2h-2.2zM1018.9 170.9h2.2v2.2h-2.2zM1024.9 170.9h2.2v2.2h-2.2zM1029.9 170.9h2.2v2.2h-2.2zM1035.9 170.9h2.2v2.2h-2.2zM1040.9 170.9h2.2v2.2h-2.2zM1046.9 170.9h2.2v2.2h-2.2zM1051.9 170.9h2.2v2.2h-2.2zM1057.9 170.9h2.2v2.2h-2.2zM1062.9 170.9h2.2v2.2h-2.2zM1068.9 170.9h2.2v2.2h-2.2zM1073.9 170.9h2.2v2.2h-2.2zM1079.9 170.9h2.2v2.2h-2.2zM1084.9 170.9h2.2v2.2h-2.2zM1090.9 170.9h2.2v2.2h-2.2zM1095.9 170.9h2.2v2.2h-2.2zM1101.9 170.9h2.2v2.2h-2.2zM1106.9 170.9h2.2v2.2h-2.2zM1112.9 170.9h2.2v2.2h-2.2zM1117.9 170.9h2.2v2.2h-2.2zM1123.9 170.9h2.2v2.2h-2.2zM1128.9 170.9h2.2v2.2h-2.2zM1145.9 170.9h2.2v2.2h-2.2zM1150.9 170.9h2.2v2.2h-2.2zM1156.9 170.9h2.2v2.2h-2.2zM1161.9 170.9h2.2v2.2h-2.2zM1167.9 170.9h2.2v2.2h-2.2zM1172.9 170.9h2.2v2.2h-2.2zM1178.9 170.9h2.2v2.2h-2.2zM1183.9 170.9h2.2v2.2h-2.2zM595.9 192.9h2.2v2.2h-2.2zM600.9 192.9h2.2v2.2h-2.2zM606.9 192.9h2.2v2.2h-2.2zM611.9 192.9h2.2v2.2h-2.2zM672.9 192.9h2.2v2.2h-2.2zM677.9 192.9h2.2v2.2h-2.2zM683.9 192.9h2.2v2.2h-2.2zM688.9 192.9h2.2v2.2h-2.2zM694.9 192.9h2.2v2.2h-2.2zM699.9 192.9h2.2v2.2h-2.2zM738.9 192.9h2.2v2.2h-2.2zM743.9 192.9h2.2v2.2h-2.2zM749.9 192.9h2.2v2.2h-2.2zM754.9 192.9h2.2v2.2h-2.2zM760.9 192.9h2.2v2.2h-2.2zM765.9 192.9h2.2v2.2h-2.2zM782.9 192.9h2.2v2.2h-2.2zM787.9 192.9h2.2v2.2h-2.2zM793.9 192.9h2.2v2.2h-2.2zM798.9 192.9h2.2v2.2h-2.2zM804.9 192.9h2.2v2.2h-2.2zM809.9 192.9h2.2v2.2h-2.2zM826.9 192.9h2.2v2.2h-2.2zM831.9 192.9h2.2v2.2h-2.2zM947.9 192.9h2.2v2.2h-2.2zM952.9 192.9h2.2v2.2h-2.2zM958.9 192.9h2.2v2.2h-2.2zM963.9 192.9h2.2v2.2h-2.2zM980.9 192.9h2.2v2.2h-2.2zM985.9 192.9h2.2v2.2h-2.2zM1013.9 192.9h2.2v2.2h-2.2zM1018.9 192.9h2.2v2.2h-2.2zM1024.9 192.9h2.2v2.2h-2.2zM1029.9 192.9h2.2v2.2h-2.2zM1035.9 192.9h2.2v2.2h-2.2zM1040.9 192.9h2.2v2.2h-2.2zM1046.9 192.9h2.2v2.2h-2.2zM1051.9 192.9h2.2v2.2h-2.2zM1057.9 192.9h2.2v2.2h-2.2zM1062.9 192.9h2.2v2.2h-2.2zM1068.9 192.9h2.2v2.2h-2.2zM1073.9 192.9h2.2v2.2h-2.2zM1090.9 192.9h2.2v2.2h-2.2zM1095.9 192.9h2.2v2.2h-2.2zM1123.9 192.9h2.2v2.2h-2.2zM1128.9 192.9h2.2v2.2h-2.2zM1178.9 192.9h2.2v2.2h-2.2zM1183.9 192.9h2.2v2.2h-2.2zM595.9 214.9h2.2v2.2h-2.2zM600.9 214.9h2.2v2.2h-2.2zM606.9 214.9h2.2v2.2h-2.2zM611.9 214.9h2.2v2.2h-2.2zM617.9 214.9h2.2v2.2h-2.2zM622.9 214.9h2.2v2.2h-2.2zM628.9 214.9h2.2v2.2h-2.2zM633.9 214.9h2.2v2.2h-2.2zM661.9 214.9h2.2v2.2h-2.2zM666.9 214.9h2.2v2.2h-2.2zM705.9 214.9h2.2v2.2h-2.2zM710.9 214.9h2.2v2.2h-2.2zM716.9 214.9h2.2v2.2h-2.2zM721.9 214.9h2.2v2.2h-2.2zM727.9 214.9h2.2v2.2h-2.2zM732.9 214.9h2.2v2.2h-2.2zM760.9 214.9h2.2v2.2h-2.2zM765.9 214.9h2.2v2.2h-2.2zM771.9 214.9h2.2v2.2h-2.2zM776.9 214.9h2.2v2.2h-2.2zM793.9 214.9h2.2v2.2h-2.2zM798.9 214.9h2.2v2.2h-2.2zM804.9 214.9h2.2v2.2h-2.2zM809.9 214.9h2.2v2.2h-2.2zM815.9 214.9h2.2v2.2h-2.2zM820.9 214.9h2.2v2.2h-2.2zM826.9 214.9h2.2v2.2h-2.2zM831.9 214.9h2.2v2.2h-2.2zM947.9 214.9h2.2v2.2h-2.2zM952.9 214.9h2.2v2.2h-2.2zM958.9 214.9h2.2v2.2h-2.2zM963.9 214.9h2.2v2.2h-2.2zM980.9 214.9h2.2v2.2h-2.2zM985.9 214.9h2.2v2.2h-2.2zM991.9 214.9h2.2v2.2h-2.2zM996.9 214.9h2.2v2.2h-2.2zM1002.9 214.9h2.2v2.2h-2.2zM1007.9 214.9h2.2v2.2h-2.2zM1013.9 214.9h2.2v2.2h-2.2zM1018.9 214.9h2.2v2.2h-2.2zM1024.9 214.9h2.2v2.2h-2.2zM1029.9 214.9h2.2v2.2h-2.2zM1035.9 214.9h2.2v2.2h-2.2zM1040.9 214.9h2.2v2.2h-2.2zM1046.9 214.9h2.2v2.2h-2.2zM1051.9 214.9h2.2v2.2h-2.2zM1057.9 214.9h2.2v2.2h-2.2zM1062.9 214.9h2.2v2.2h-2.2zM1068.9 214.9h2.2v2.2h-2.2zM1073.9 214.9h2.2v2.2h-2.2zM1101.9 214.9h2.2v2.2h-2.2zM1106.9 214.9h2.2v2.2h-2.2zM1112.9 214.9h2.2v2.2h-2.2zM1117.9 214.9h2.2v2.2h-2.2zM1123.9 214.9h2.2v2.2h-2.2zM1128.9 214.9h2.2v2.2h-2.2zM1134.9 214.9h2.2v2.2h-2.2zM1139.9 214.9h2.2v2.2h-2.2zM1156.9 214.9h2.2v2.2h-2.2zM1161.9 214.9h2.2v2.2h-2.2zM1167.9 214.9h2.2v2.2h-2.2zM1172.9 214.9h2.2v2.2h-2.2zM1178.9 214.9h2.2v2.2h-2.2zM1183.9 214.9h2.2v2.2h-2.2zM595.9 236.9h2.2v2.2h-2.2zM600.9 236.9h2.2v2.2h-2.2zM606.9 236.9h2.2v2.2h-2.2zM611.9 236.9h2.2v2.2h-2.2zM628.9 236.9h2.2v2.2h-2.2zM633.9 236.9h2.2v2.2h-2.2zM639.9 236.9h2.2v2.2h-2.2zM644.9 236.9h2.2v2.2h-2.2zM650.9 236.9h2.2v2.2h-2.2zM655.9 236.9h2.2v2.2h-2.2zM661.9 236.9h2.2v2.2h-2.2zM666.9 236.9h2.2v2.2h-2.2zM683.9 236.9h2.2v2.2h-2.2zM688.9 236.9h2.2v2.2h-2.2zM694.9 236.9h2.2v2.2h-2.2zM699.9 236.9h2.2v2.2h-2.2zM716.9 236.9h2.2v2.2h-2.2zM721.9 236.9h2.2v2.2h-2.2zM727.9 236.9h2.2v2.2h-2.2zM732.9 236.9h2.2v2.2h-2.2zM749.9 236.9h2.2v2.2h-2.2zM754.9 236.9h2.2v2.2h-2.2zM760.9 236.9h2.2v2.2h-2.2zM765.9 236.9h2.2v2.2h-2.2zM771.9 236.9h2.2v2.2h-2.2zM776.9 236.9h2.2v2.2h-2.2zM815.9 236.9h2.2v2.2h-2.2zM820.9 236.9h2.2v2.2h-2.2zM947.9 236.9h2.2v2.2h-2.2zM952.9 236.9h2.2v2.2h-2.2zM958.9 236.9h2.2v2.2h-2.2zM963.9 236.9h2.2v2.2h-2.2zM980.9 236.9h2.2v2.2h-2.2zM985.9 236.9h2.2v2.2h-2.2zM1013.9 236.9h2.2v2.2h-2.2zM1018.9 236.9h2.2v2.2h-2.2zM1024.9 236.9h2.2v2.2h-2.2zM1029.9 236.9h2.2v2.2h-2.2zM1035.9 236.9h2.2v2.2h-2.2zM1040.9 236.9h2.2v2.2h-2.2zM1046.9 236.9h2.2v2.2h-2.2zM1051.9 236.9h2.2v2.2h-2.2zM1057.9 236.9h2.2v2.2h-2.2zM1062.9 236.9h2.2v2.2h-2.2zM1068.9 236.9h2.2v2.2h-2.2zM1073.9 236.9h2.2v2.2h-2.2zM1090.9 236.9h2.2v2.2h-2.2zM1095.9 236.9h2.2v2.2h-2.2zM1101.9 236.9h2.2v2.2h-2.2zM1106.9 236.9h2.2v2.2h-2.2zM1123.9 236.9h2.2v2.2h-2.2zM1128.9 236.9h2.2v2.2h-2.2zM1145.9 236.9h2.2v2.2h-2.2zM1150.9 236.9h2.2v2.2h-2.2zM1178.9 236.9h2.2v2.2h-2.2zM1183.9 236.9h2.2v2.2h-2.2zM595.9 258.9h2.2v2.2h-2.2zM600.9 258.9h2.2v2.2h-2.2zM606.9 258.9h2.2v2.2h-2.2zM611.9 258.9h2.2v2.2h-2.2zM617.9 258.9h2.2v2.2h-2.2zM622.9 258.9h2.2v2.2h-2.2zM628.9 258.9h2.2v2.2h-2.2zM633.9 258.9h2.2v2.2h-2.2zM639.9 258.9h2.2v2.2h-2.2zM644.9 258.9h2.2v2.2h-2.2zM650.9 258.9h2.2v2.2h-2.2zM655.9 258.9h2.2v2.2h-2.2zM661.9 258.9h2.2v2.2h-2.2zM666.9 258.9h2.2v2.2h-2.2zM672.9 258.9h2.2v2.2h-2.2zM677.9 258.9h2.2v2.2h-2.2zM738.9 258.9h2.2v2.2h-2.2zM743.9 258.9h2.2v2.2h-2.2zM749.9 258.9h2.2v2.2h-2.2zM754.9 258.9h2.2v2.2h-2.2zM760.9 258.9h2.2v2.2h-2.2zM765.9 258.9h2.2v2.2h-2.2zM793.9 258.9h2.2v2.2h-2.2zM798.9 258.9h2.2v2.2h-2.2zM804.9 258.9h2.2v2.2h-2.2zM809.9 258.9h2.2v2.2h-2.2zM815.9 258.9h2.2v2.2h-2.2zM820.9 258.9h2.2v2.2h-2.2zM826.9 258.9h2.2v2.2h-2.2zM831.9 258.9h2.2v2.2h-2.2zM947.9 258.9h2.2v2.2h-2.2zM952.9 258.9h2.2v2.2h-2.2zM958.9 258.9h2.2v2.2h-2.2zM963.9 258.9h2.2v2.2h-2.2zM980.9 258.9h2.2v2.2h-2.2zM985.9 258.9h2.2v2.2h-2.2zM991.9 258.9h2.2v2.2h-2.2zM996.9 258.9h2.2v2.2h-2.2zM1002.9 258.9h2.2v2.2h-2.2zM1007.9 258.9h2.2v2.2h-2.2zM1013.9 258.9h2.2v2.2h-2.2zM1018.9 258.9h2.2v2.2h-2.2zM1024.9 258.9h2.2v2.2h-2.2zM1029.9 258.9h2.2v2.2h-2.2zM1035.9 258.9h2.2v2.2h-2.2zM1040.9 258.9h2.2v2.2h-2.2zM1046.9 258.9h2.2v2.2h-2.2zM1051.9 258.9h2.2v2.2h-2.2zM1057.9 258.9h2.2v2.2h-2.2zM1062.9 258.9h2.2v2.2h-2.2zM1068.9 258.9h2.2v2.2h-2.2zM1073.9 258.9h2.2v2.2h-2.2zM1079.9 258.9h2.2v2.2h-2.2zM1084.9 258.9h2.2v2.2h-2.2zM1090.9 258.9h2.2v2.2h-2.2zM1095.9 258.9h2.2v2.2h-2.2zM1101.9 258.9h2.2v2.2h-2.2zM1106.9 258.9h2.2v2.2h-2.2zM1112.9 258.9h2.2v2.2h-2.2zM1117.9 258.9h2.2v2.2h-2.2zM1123.9 258.9h2.2v2.2h-2.2zM1128.9 258.9h2.2v2.2h-2.2zM1134.9 258.9h2.2v2.2h-2.2zM1139.9 258.9h2.2v2.2h-2.2zM1145.9 258.9h2.2v2.2h-2.2zM1150.9 258.9h2.2v2.2h-2.2zM1156.9 258.9h2.2v2.2h-2.2zM1161.9 258.9h2.2v2.2h-2.2zM1167.9 258.9h2.2v2.2h-2.2zM1172.9 258.9h2.2v2.2h-2.2zM1178.9 258.9h2.2v2.2h-2.2zM1183.9 258.9h2.2v2.2h-2.2zM595.9 280.9h2.2v2.2h-2.2zM600.9 280.9h2.2v2.2h-2.2zM606.9 280.9h2.2v2.2h-2.2zM611.9 280.9h2.2v2.2h-2.2zM617.9 280.9h2.2v2.2h-2.2zM622.9 280.9h2.2v2.2h-2.2zM650.9 280.9h2.2v2.2h-2.2zM655.9 280.9h2.2v2.2h-2.2zM661.9 280.9h2.2v2.2h-2.2zM666.9 280.9h2.2v2.2h-2.2zM672.9 280.9h2.2v2.2h-2.2zM677.9 280.9h2.2v2.2h-2.2zM683.9 280.9h2.2v2.2h-2.2zM688.9 280.9h2.2v2.2h-2.2zM694.9 280.9h2.2v2.2h-2.2zM699.9 280.9h2.2v2.2h-2.2zM705.9 280.9h2.2v2.2h-2.2zM710.9 280.9h2.2v2.2h-2.2zM738.9 280.9h2.2v2.2h-2.2zM743.9 280.9h2.2v2.2h-2.2zM749.9 280.9h2.2v2.2h-2.2zM754.9 280.9h2.2v2.2h-2.2zM760.9 280.9h2.2v2.2h-2.2zM765.9 280.9h2.2v2.2h-2.2zM793.9 280.9h2.2v2.2h-2.2zM798.9 280.9h2.2v2.2h-2.2zM804.9 280.9h2.2v2.2h-2.2zM809.9 280.9h2.2v2.2h-2.2zM815.9 280.9h2.2v2.2h-2.2zM820.9 280.9h2.2v2.2h-2.2zM826.9 280.9h2.2v2.2h-2.2zM831.9 280.9h2.2v2.2h-2.2zM947.9 280.9h2.2v2.2h-2.2zM952.9 280.9h2.2v2.2h-2.2zM958.9 280.9h2.2v2.2h-2.2zM963.9 280.9h2.2v2.2h-2.2zM980.9 280.9h2.2v2.2h-2.2zM985.9 280.9h2.2v2.2h-2.2zM991.9 280.9h2.2v2.2h-2.2zM996.9 280.9h2.2v2.2h-2.2zM1002.9 280.9h2.2v2.2h-2.2zM1007.9 280.9h2.2v2.2h-2.2zM1013.9 280.9h2.2v2.2h-2.2zM1018.9 280.9h2.2v2.2h-2.2zM1024.9 280.9h2.2v2.2h-2.2zM1029.9 280.9h2.2v2.2h-2.2zM1035.9 280.9h2.2v2.2h-2.2zM1040.9 280.9h2.2v2.2h-2.2zM1046.9 280.9h2.2v2.2h-2.2zM1051.9 280.9h2.2v2.2h-2.2zM1057.9 280.9h2.2v2.2h-2.2zM1062.9 280.9h2.2v2.2h-2.2zM1079.9 280.9h2.2v2.2h-2.2zM1084.9 280.9h2.2v2.2h-2.2zM1090.9 280.9h2.2v2.2h-2.2zM1095.9 280.9h2.2v2.2h-2.2zM1101.9 280.9h2.2v2.2h-2.2zM1106.9 280.9h2.2v2.2h-2.2zM1112.9 280.9h2.2v2.2h-2.2zM1117.9 280.9h2.2v2.2h-2.2zM1123.9 280.9h2.2v2.2h-2.2zM1128.9 280.9h2.2v2.2h-2.2zM1145.9 280.9h2.2v2.2h-2.2zM1150.9 280.9h2.2v2.2h-2.2zM1178.9 280.9h2.2v2.2h-2.2zM1183.9 280.9h2.2v2.2h-2.2zM595.9 302.9h2.2v2.2h-2.2zM600.9 302.9h2.2v2.2h-2.2zM606.9 302.9h2.2v2.2h-2.2zM611.9 302.9h2.2v2.2h-2.2zM617.9 302.9h2.2v2.2h-2.2zM622.9 302.9h2.2v2.2h-2.2zM628.9 302.9h2.2v2.2h-2.2zM633.9 302.9h2.2v2.2h-2.2zM639.9 302.9h2.2v2.2h-2.2zM644.9 302.9h2.2v2.2h-2.2zM650.9 302.9h2.2v2.2h-2.2zM655.9 302.9h2.2v2.2h-2.2zM661.9 302.9h2.2v2.2h-2.2zM666.9 302.9h2.2v2.2h-2.2zM672.9 302.9h2.2v2.2h-2.2zM677.9 302.9h2.2v2.2h-2.2zM683.9 302.9h2.2v2.2h-2.2zM688.9 302.9h2.2v2.2h-2.2zM694.9 302.9h2.2v2.2h-2.2zM699.9 302.9h2.2v2.2h-2.2zM705.9 302.9h2.2v2.2h-2.2zM710.9 302.9h2.2v2.2h-2.2zM716.9 302.9h2.2v2.2h-2.2zM721.9 302.9h2.2v2.2h-2.2zM727.9 302.9h2.2v2.2h-2.2zM732.9 302.9h2.2v2.2h-2.2zM738.9 302.9h2.2v2.2h-2.2zM743.9 302.9h2.2v2.2h-2.2zM749.9 302.9h2.2v2.2h-2.2zM754.9 302.9h2.2v2.2h-2.2zM760.9 302.9h2.2v2.2h-2.2zM765.9 302.9h2.2v2.2h-2.2zM771.9 302.9h2.2v2.2h-2.2zM776.9 302.9h2.2v2.2h-2.2zM782.9 302.9h2.2v2.2h-2.2zM787.9 302.9h2.2v2.2h-2.2zM804.9 302.9h2.2v2.2h-2.2zM809.9 302.9h2.2v2.2h-2.2zM815.9 302.9h2.2v2.2h-2.2zM820.9 302.9h2.2v2.2h-2.2zM826.9 302.9h2.2v2.2h-2.2zM831.9 302.9h2.2v2.2h-2.2zM947.9 302.9h2.2v2.2h-2.2zM952.9 302.9h2.2v2.2h-2.2zM958.9 302.9h2.2v2.2h-2.2zM963.9 302.9h2.2v2.2h-2.2zM969.9 302.9h2.2v2.2h-2.2zM974.9 302.9h2.2v2.2h-2.2zM980.9 302.9h2.2v2.2h-2.2zM985.9 302.9h2.2v2.2h-2.2zM991.9 302.9h2.2v2.2h-2.2zM996.9 302.9h2.2v2.2h-2.2zM1002.9 302.9h2.2v2.2h-2.2zM1007.9 302.9h2.2v2.2h-2.2zM1013.9 302.9h2.2v2.2h-2.2zM1018.9 302.9h2.2v2.2h-2.2zM1024.9 302.9h2.2v2.2h-2.2zM1029.9 302.9h2.2v2.2h-2.2zM1035.9 302.9h2.2v2.2h-2.2zM1040.9 302.9h2.2v2.2h-2.2zM1046.9 302.9h2.2v2.2h-2.2zM1051.9 302.9h2.2v2.2h-2.2zM1057.9 302.9h2.2v2.2h-2.2zM1062.9 302.9h2.2v2.2h-2.2zM1068.9 302.9h2.2v2.2h-2.2zM1073.9 302.9h2.2v2.2h-2.2zM1079.9 302.9h2.2v2.2h-2.2zM1084.9 302.9h2.2v2.2h-2.2zM1090.9 302.9h2.2v2.2h-2.2zM1095.9 302.9h2.2v2.2h-2.2zM1101.9 302.9h2.2v2.2h-2.2zM1106.9 302.9h2.2v2.2h-2.2zM1112.9 302.9h2.2v2.2h-2.2zM1117.9 302.9h2.2v2.2h-2.2zM1123.9 302.9h2.2v2.2h-2.2zM1128.9 302.9h2.2v2.2h-2.2zM1145.9 302.9h2.2v2.2h-2.2zM1150.9 302.9h2.2v2.2h-2.2zM1156.9 302.9h2.2v2.2h-2.2zM1161.9 302.9h2.2v2.2h-2.2zM1167.9 302.9h2.2v2.2h-2.2zM1172.9 302.9h2.2v2.2h-2.2zM1178.9 302.9h2.2v2.2h-2.2zM1183.9 302.9h2.2v2.2h-2.2z" fill="#7f8499"/><path d="M617.9 148.9h2.2v2.2h-2.2zM639.9 148.9h2.2v2.2h-2.2zM650.9 148.9h2.2v2.2h-2.2zM699.9 148.9h2.2v2.2h-2.2zM732.9 148.9h2.2v2.2h-2.2zM782.9 148.9h2.2v2.2h-2.2zM787.9 148.9h2.2v2.2h-2.2zM793.9 148.9h2.2v2.2h-2.2zM798.9 148.9h2.2v2.2h-2.2zM991.9 148.9h2.2v2.2h-2.2zM996.9 148.9h2.2v2.2h-2.2zM1007.9 148.9h2.2v2.2h-2.2zM1013.9 148.9h2.2v2.2h-2.2zM1018.9 148.9h2.2v2.2h-2.2zM1046.9 148.9h2.2v2.2h-2.2zM1057.9 148.9h2.2v2.2h-2.2zM1079.9 148.9h2.2v2.2h-2.2zM1090.9 148.9h2.2v2.2h-2.2zM1095.9 148.9h2.2v2.2h-2.2zM1123.9 148.9h2.2v2.2h-2.2zM1128.9 148.9h2.2v2.2h-2.2zM1134.9 148.9h2.2v2.2h-2.2zM1139.9 148.9h2.2v2.2h-2.2zM1150.9 148.9h2.2v2.2h-2.2zM633.9 170.9h2.2v2.2h-2.2zM732.9 170.9h2.2v2.2h-2.2zM793.9 170.9h2.2v2.2h-2.2zM798.9 170.9h2.2v2.2h-2.2zM969.9 170.9h2.2v2.2h-2.2zM1139.9 170.9h2.2v2.2h-2.2zM622.9 192.9h2.2v2.2h-2.2zM628.9 192.9h2.2v2.2h-2.2zM639.9 192.9h2.2v2.2h-2.2zM644.9 192.9h2.2v2.2h-2.2zM650.9 192.9h2.2v2.2h-2.2zM655.9 192.9h2.2v2.2h-2.2zM661.9 192.9h2.2v2.2h-2.2zM666.9 192.9h2.2v2.2h-2.2zM705.9 192.9h2.2v2.2h-2.2zM710.9 192.9h2.2v2.2h-2.2zM716.9 192.9h2.2v2.2h-2.2zM721.9 192.9h2.2v2.2h-2.2zM727.9 192.9h2.2v2.2h-2.2zM732.9 192.9h2.2v2.2h-2.2zM771.9 192.9h2.2v2.2h-2.2zM820.9 192.9h2.2v2.2h-2.2zM969.9 192.9h2.2v2.2h-2.2zM991.9 192.9h2.2v2.2h-2.2zM1002.9 192.9h2.2v2.2h-2.2zM1007.9 192.9h2.2v2.2h-2.2zM1079.9 192.9h2.2v2.2h-2.2zM1106.9 192.9h2.2v2.2h-2.2zM1112.9 192.9h2.2v2.2h-2.2zM1134.9 182.9h2.2v2.2h-2.2zM1134.9 187.9h2.2v2.2h-2.2zM1139.9 187.9h2.2v2.2h-2.2zM1134.9 192.9h2.2v2.2h-2.2zM1139.9 192.9h2.2v2.2h-2.2zM1145.9 187.9h2.2v2.2h-2.2zM1150.9 187.9h2.2v2.2h-2.2zM1145.9 192.9h2.2v2.2h-2.2zM1150.9 192.9h2.2v2.2h-2.2zM1156.9 192.9h2.2v2.2h-2.2zM1161.9 192.9h2.2v2.2h-2.2zM1167.9 192.9h2.2v2.2h-2.2zM1172.9 192.9h2.2v2.2h-2.2zM639.9 214.9h2.2v2.2h-2.2zM655.9 214.9h2.2v2.2h-2.2zM677.9 214.9h2.2v2.2h-2.2zM683.9 214.9h2.2v2.2h-2.2zM688.9 214.9h2.2v2.2h-2.2zM699.9 214.9h2.2v2.2h-2.2zM738.9 214.9h2.2v2.2h-2.2zM749.9 214.9h2.2v2.2h-2.2zM782.9 214.9h2.2v2.2h-2.2zM969.9 214.9h2.2v2.2h-2.2zM1084.9 214.9h2.2v2.2h-2.2zM1095.9 214.9h2.2v2.2h-2.2zM1150.9 214.9h2.2v2.2h-2.2zM617.9 236.9h2.2v2.2h-2.2zM672.9 236.9h2.2v2.2h-2.2zM705.9 236.9h2.2v2.2h-2.2zM743.9 236.9h2.2v2.2h-2.2zM782.9 236.9h2.2v2.2h-2.2zM798.9 236.9h2.2v2.2h-2.2zM804.9 236.9h2.2v2.2h-2.2zM831.9 236.9h2.2v2.2h-2.2zM969.9 236.9h2.2v2.2h-2.2zM991.9 236.9h2.2v2.2h-2.2zM1002.9 236.9h2.2v2.2h-2.2zM1084.9 236.9h2.2v2.2h-2.2zM1117.9 236.9h2.2v2.2h-2.2zM1139.9 236.9h2.2v2.2h-2.2zM1161.9 236.9h2.2v2.2h-2.2zM1172.9 236.9h2.2v2.2h-2.2zM688.9 258.9h2.2v2.2h-2.2zM699.9 258.9h2.2v2.2h-2.2zM710.9 258.9h2.2v2.2h-2.2zM716.9 258.9h2.2v2.2h-2.2zM721.9 258.9h2.2v2.2h-2.2zM727.9 258.9h2.2v2.2h-2.2zM732.9 258.9h2.2v2.2h-2.2zM776.9 258.9h2.2v2.2h-2.2zM782.9 258.9h2.2v2.2h-2.2zM969.9 258.9h2.2v2.2h-2.2zM628.9 270.9h2.2v2.2h-2.2zM628.9 275.9h2.2v2.2h-2.2zM628.9 280.9h2.2v2.2h-2.2zM639.9 280.9h2.2v2.2h-2.2zM716.9 280.9h2.2v2.2h-2.2zM721.9 280.9h2.2v2.2h-2.2zM732.9 280.9h2.2v2.2h-2.2zM771.9 280.9h2.2v2.2h-2.2zM782.9 280.9h2.2v2.2h-2.2zM969.9 280.9h2.2v2.2h-2.2zM1068.9 280.9h2.2v2.2h-2.2zM1139.9 280.9h2.2v2.2h-2.2zM1156.9 280.9h2.2v2.2h-2.2zM1161.9 280.9h2.2v2.2h-2.2zM1167.9 280.9h2.2v2.2h-2.2zM798.9 302.9h2.2v2.2h-2.2zM1134.9 302.9h2.2v2.2h-2.2zM1139.9 302.9h2.2v2.2h-2.2z" fill="#85c6dc"/><path d="M314.9 214.9h2.2v2.2h-2.2zM320.9 209.9h2.2v2.2h-2.2zM320.9 214.9h2.2v2.2h-2.2zM325.9 214.9h2.2v2.2h-2.2zM331.9 209.9h2.2v2.2h-2.2zM331.9 214.9h2.2v2.2h-2.2zM336.9 214.9h2.2v2.2h-2.2zM342.9 209.9h2.2v2.2h-2.2zM342.9 214.9h2.2v2.2h-2.2zM347.9 214.9h2.2v2.2h-2.2zM353.9 214.9h2.2v2.2h-2.2zM358.9 214.9h2.2v2.2h-2.2zM364.9 214.9h2.2v2.2h-2.2zM369.9 214.9h2.2v2.2h-2.2zM375.9 214.9h2.2v2.2h-2.2zM380.9 214.9h2.2v2.2h-2.2zM386.9 214.9h2.2v2.2h-2.2zM391.9 214.9h2.2v2.2h-2.2zM397.9 214.9h2.2v2.2h-2.2zM402.9 214.9h2.2v2.2h-2.2zM408.9 214.9h2.2v2.2h-2.2zM413.9 214.9h2.2v2.2h-2.2zM419.9 214.9h2.2v2.2h-2.2zM424.9 214.9h2.2v2.2h-2.2zM435.9 209.9h2.2v2.2h-2.2zM430.9 214.9h2.2v2.2h-2.2zM435.9 214.9h2.2v2.2h-2.2zM441.9 214.9h2.2v2.2h-2.2zM446.9 214.9h2.2v2.2h-2.2zM452.9 214.9h2.2v2.2h-2.2zM457.9 214.9h2.2v2.2h-2.2zM463.9 214.9h2.2v2.2h-2.2zM468.9 214.9h2.2v2.2h-2.2zM474.9 214.9h2.2v2.2h-2.2zM479.9 214.9h2.2v2.2h-2.2zM485.9 199.9h2.2v2.2h-2.2zM485.9 204.9h2.2v2.2h-2.2zM485.9 209.9h2.2v2.2h-2.2zM490.9 209.9h2.2v2.2h-2.2zM485.9 214.9h2.2v2.2h-2.2zM490.9 214.9h2.2v2.2h-2.2zM496.9 209.9h2.2v2.2h-2.2zM501.9 204.9h2.2v2.2h-2.2zM501.9 209.9h2.2v2.2h-2.2zM496.9 214.9h2.2v2.2h-2.2zM501.9 214.9h2.2v2.2h-2.2zM507.9 214.9h2.2v2.2h-2.2zM512.9 214.9h2.2v2.2h-2.2zM518.9 214.9h2.2v2.2h-2.2zM523.9 214.9h2.2v2.2h-2.2zM529.9 214.9h2.2v2.2h-2.2zM534.9 214.9h2.2v2.2h-2.2zM314.9 221.9h2.2v2.2h-2.2zM320.9 221.9h2.2v2.2h-2.2zM320.9 226.9h2.2v2.2h-2.2zM325.9 221.9h2.2v2.2h-2.2zM331.9 221.9h2.2v2.2h-2.2zM331.9 226.9h2.2v2.2h-2.2zM336.9 221.9h2.2v2.2h-2.2zM342.9 221.9h2.2v2.2h-2.2zM342.9 226.9h2.2v2.2h-2.2zM347.9 221.9h2.2v2.2h-2.2zM353.9 221.9h2.2v2.2h-2.2zM358.9 221.9h2.2v2.2h-2.2zM364.9 221.9h2.2v2.2h-2.2zM369.9 221.9h2.2v2.2h-2.2zM375.9 221.9h2.2v2.2h-2.2zM380.9 221.9h2.2v2.2h-2.2zM386.9 221.9h2.2v2.2h-2.2zM391.9 221.9h2.2v2.2h-2.2zM397.9 221.9h2.2v2.2h-2.2zM402.9 221.9h2.2v2.2h-2.2zM408.9 221.9h2.2v2.2h-2.2zM413.9 221.9h2.2v2.2h-2.2zM419.9 221.9h2.2v2.2h-2.2zM424.9 221.9h2.2v2.2h-2.2zM430.9 221.9h2.2v2.2h-2.2zM435.9 221.9h2.2v2.2h-2.2zM435.9 226.9h2.2v2.2h-2.2zM441.9 221.9h2.2v2.2h-2.2zM446.9 221.9h2.2v2.2h-2.2zM452.9 221.9h2.2v2.2h-2.2zM457.9 221.9h2.2v2.2h-2.2zM463.9 221.9h2.2v2.2h-2.2zM468.9 221.9h2.2v2.2h-2.2zM474.9 221.9h2.2v2.2h-2.2zM479.9 221.9h2.2v2.2h-2.2zM485.9 221.9h2.2v2.2h-2.2zM485.9 226.9h2.2v2.2h-2.2zM485.9 231.9h2.2v2.2h-2.2zM490.9 221.9h2.2v2.2h-2.2zM490.9 226.9h2.2v2.2h-2.2zM485.9 236.9h2.2v2.2h-2.2zM496.9 221.9h2.2v2.2h-2.2zM496.9 226.9h2.2v2.2h-2.2zM501.9 221.9h2.2v2.2h-2.2zM501.9 226.9h2.2v2.2h-2.2zM501.9 231.9h2.2v2.2h-2.2zM507.9 221.9h2.2v2.2h-2.2zM512.9 221.9h2.2v2.2h-2.2zM518.9 221.9h2.2v2.2h-2.2zM523.9 221.9h2.2v2.2h-2.2zM529.9 221.9h2.2v2.2h-2.2zM534.9 221.9h2.2v2.2h-2.2z" fill="#7ec4dc"/><path d="M1123.9 500.9h2.2v2.2h-2.2zM1128.9 500.9h2.2v2.2h-2.2zM1134.9 500.9h2.2v2.2h-2.2zM1139.9 500.9h2.2v2.2h-2.2zM1145.9 500.9h2.2v2.2h-2.2zM1150.9 500.9h2.2v2.2h-2.2zM1156.9 500.9h2.2v2.2h-2.2zM1161.9 500.9h2.2v2.2h-2.2zM1167.9 500.9h2.2v2.2h-2.2zM1172.9 500.9h2.2v2.2h-2.2z" fill="#9aa0b8"/><path d="M1123.9 522.9h2.2v2.2h-2.2zM1128.9 522.9h2.2v2.2h-2.2zM1134.9 522.9h2.2v2.2h-2.2zM1139.9 522.9h2.2v2.2h-2.2zM1145.9 522.9h2.2v2.2h-2.2zM1150.9 522.9h2.2v2.2h-2.2zM1156.9 522.9h2.2v2.2h-2.2zM1161.9 522.9h2.2v2.2h-2.2zM1167.9 522.9h2.2v2.2h-2.2zM1172.9 522.9h2.2v2.2h-2.2z" fill="#999fb7"/><path d="M1123.9 544.9h2.2v2.2h-2.2zM1128.9 544.9h2.2v2.2h-2.2zM1134.9 544.9h2.2v2.2h-2.2zM1139.9 544.9h2.2v2.2h-2.2zM1145.9 544.9h2.2v2.2h-2.2zM1150.9 544.9h2.2v2.2h-2.2zM1156.9 544.9h2.2v2.2h-2.2zM1161.9 544.9h2.2v2.2h-2.2zM1167.9 544.9h2.2v2.2h-2.2zM1172.9 544.9h2.2v2.2h-2.2z" fill="#979db5"/><path d="M1123.9 566.9h2.2v2.2h-2.2zM1128.9 566.9h2.2v2.2h-2.2zM1134.9 566.9h2.2v2.2h-2.2zM1139.9 566.9h2.2v2.2h-2.2zM1145.9 566.9h2.2v2.2h-2.2zM1150.9 566.9h2.2v2.2h-2.2zM1156.9 566.9h2.2v2.2h-2.2zM1161.9 566.9h2.2v2.2h-2.2zM1167.9 566.9h2.2v2.2h-2.2zM1172.9 566.9h2.2v2.2h-2.2z" fill="#969cb4"/><path d="M336.9 588.9h2.2v2.2h-2.2zM342.9 588.9h2.2v2.2h-2.2zM347.9 588.9h2.2v2.2h-2.2zM353.9 588.9h2.2v2.2h-2.2zM358.9 588.9h2.2v2.2h-2.2zM364.9 588.9h2.2v2.2h-2.2zM369.9 588.9h2.2v2.2h-2.2zM375.9 588.9h2.2v2.2h-2.2zM380.9 588.9h2.2v2.2h-2.2zM386.9 588.9h2.2v2.2h-2.2zM391.9 588.9h2.2v2.2h-2.2zM397.9 588.9h2.2v2.2h-2.2zM402.9 588.9h2.2v2.2h-2.2zM408.9 588.9h2.2v2.2h-2.2zM413.9 588.9h2.2v2.2h-2.2zM419.9 588.9h2.2v2.2h-2.2zM424.9 588.9h2.2v2.2h-2.2zM430.9 588.9h2.2v2.2h-2.2zM435.9 588.9h2.2v2.2h-2.2zM441.9 588.9h2.2v2.2h-2.2zM446.9 588.9h2.2v2.2h-2.2zM452.9 583.9h2.2v2.2h-2.2zM457.9 583.9h2.2v2.2h-2.2zM452.9 588.9h2.2v2.2h-2.2zM457.9 588.9h2.2v2.2h-2.2zM463.9 583.9h2.2v2.2h-2.2zM468.9 583.9h2.2v2.2h-2.2zM463.9 588.9h2.2v2.2h-2.2zM468.9 588.9h2.2v2.2h-2.2zM474.9 583.9h2.2v2.2h-2.2zM479.9 583.9h2.2v2.2h-2.2zM474.9 588.9h2.2v2.2h-2.2zM479.9 588.9h2.2v2.2h-2.2zM485.9 583.9h2.2v2.2h-2.2zM490.9 583.9h2.2v2.2h-2.2zM485.9 588.9h2.2v2.2h-2.2zM490.9 588.9h2.2v2.2h-2.2zM496.9 588.9h2.2v2.2h-2.2zM501.9 588.9h2.2v2.2h-2.2zM507.9 583.9h2.2v2.2h-2.2zM507.9 588.9h2.2v2.2h-2.2zM512.9 588.9h2.2v2.2h-2.2zM518.9 583.9h2.2v2.2h-2.2zM523.9 583.9h2.2v2.2h-2.2zM518.9 588.9h2.2v2.2h-2.2zM523.9 588.9h2.2v2.2h-2.2zM529.9 583.9h2.2v2.2h-2.2zM534.9 583.9h2.2v2.2h-2.2zM529.9 588.9h2.2v2.2h-2.2zM534.9 588.9h2.2v2.2h-2.2zM540.9 583.9h2.2v2.2h-2.2zM545.9 583.9h2.2v2.2h-2.2zM540.9 588.9h2.2v2.2h-2.2zM545.9 588.9h2.2v2.2h-2.2zM551.9 583.9h2.2v2.2h-2.2zM556.9 583.9h2.2v2.2h-2.2zM551.9 588.9h2.2v2.2h-2.2zM556.9 588.9h2.2v2.2h-2.2z" fill="#e8a06c"/><path d="M1123.9 588.9h2.2v2.2h-2.2zM1128.9 588.9h2.2v2.2h-2.2zM1134.9 588.9h2.2v2.2h-2.2zM1139.9 588.9h2.2v2.2h-2.2zM1145.9 588.9h2.2v2.2h-2.2zM1150.9 588.9h2.2v2.2h-2.2zM1156.9 588.9h2.2v2.2h-2.2zM1161.9 588.9h2.2v2.2h-2.2zM1167.9 588.9h2.2v2.2h-2.2zM1172.9 588.9h2.2v2.2h-2.2z" fill="#959bb3"/><path d="M1123.9 610.9h2.2v2.2h-2.2zM1128.9 610.9h2.2v2.2h-2.2zM1134.9 610.9h2.2v2.2h-2.2zM1139.9 610.9h2.2v2.2h-2.2zM1145.9 610.9h2.2v2.2h-2.2zM1150.9 610.9h2.2v2.2h-2.2zM1156.9 610.9h2.2v2.2h-2.2zM1161.9 610.9h2.2v2.2h-2.2zM1167.9 610.9h2.2v2.2h-2.2zM1172.9 610.9h2.2v2.2h-2.2z" fill="#949ab1"/><path d="M336.9 622.9h2.2v2.2h-2.2zM336.9 627.9h2.2v2.2h-2.2zM336.9 632.9h2.2v2.2h-2.2zM342.9 622.9h2.2v2.2h-2.2zM342.9 627.9h2.2v2.2h-2.2zM347.9 622.9h2.2v2.2h-2.2zM347.9 627.9h2.2v2.2h-2.2zM342.9 632.9h2.2v2.2h-2.2zM347.9 632.9h2.2v2.2h-2.2zM353.9 622.9h2.2v2.2h-2.2zM353.9 627.9h2.2v2.2h-2.2zM358.9 622.9h2.2v2.2h-2.2zM358.9 627.9h2.2v2.2h-2.2zM353.9 632.9h2.2v2.2h-2.2zM358.9 632.9h2.2v2.2h-2.2zM364.9 622.9h2.2v2.2h-2.2zM364.9 627.9h2.2v2.2h-2.2zM369.9 622.9h2.2v2.2h-2.2zM369.9 627.9h2.2v2.2h-2.2zM364.9 632.9h2.2v2.2h-2.2zM369.9 632.9h2.2v2.2h-2.2zM375.9 622.9h2.2v2.2h-2.2zM375.9 627.9h2.2v2.2h-2.2zM380.9 622.9h2.2v2.2h-2.2zM380.9 627.9h2.2v2.2h-2.2zM375.9 632.9h2.2v2.2h-2.2zM380.9 632.9h2.2v2.2h-2.2zM386.9 622.9h2.2v2.2h-2.2zM386.9 627.9h2.2v2.2h-2.2zM391.9 622.9h2.2v2.2h-2.2zM391.9 627.9h2.2v2.2h-2.2zM386.9 632.9h2.2v2.2h-2.2zM391.9 632.9h2.2v2.2h-2.2zM397.9 622.9h2.2v2.2h-2.2zM397.9 627.9h2.2v2.2h-2.2zM402.9 622.9h2.2v2.2h-2.2zM402.9 627.9h2.2v2.2h-2.2zM397.9 632.9h2.2v2.2h-2.2zM402.9 632.9h2.2v2.2h-2.2zM408.9 622.9h2.2v2.2h-2.2zM408.9 627.9h2.2v2.2h-2.2zM413.9 622.9h2.2v2.2h-2.2zM413.9 627.9h2.2v2.2h-2.2zM408.9 632.9h2.2v2.2h-2.2zM413.9 632.9h2.2v2.2h-2.2zM419.9 622.9h2.2v2.2h-2.2zM419.9 627.9h2.2v2.2h-2.2zM424.9 622.9h2.2v2.2h-2.2zM424.9 627.9h2.2v2.2h-2.2zM419.9 632.9h2.2v2.2h-2.2zM424.9 632.9h2.2v2.2h-2.2zM430.9 622.9h2.2v2.2h-2.2zM430.9 627.9h2.2v2.2h-2.2zM435.9 622.9h2.2v2.2h-2.2zM435.9 627.9h2.2v2.2h-2.2zM430.9 632.9h2.2v2.2h-2.2zM435.9 632.9h2.2v2.2h-2.2zM441.9 622.9h2.2v2.2h-2.2zM441.9 627.9h2.2v2.2h-2.2zM446.9 622.9h2.2v2.2h-2.2zM446.9 627.9h2.2v2.2h-2.2zM441.9 632.9h2.2v2.2h-2.2zM446.9 632.9h2.2v2.2h-2.2zM452.9 622.9h2.2v2.2h-2.2zM452.9 627.9h2.2v2.2h-2.2zM457.9 622.9h2.2v2.2h-2.2zM457.9 627.9h2.2v2.2h-2.2zM452.9 632.9h2.2v2.2h-2.2zM457.9 632.9h2.2v2.2h-2.2zM463.9 622.9h2.2v2.2h-2.2zM463.9 627.9h2.2v2.2h-2.2zM468.9 622.9h2.2v2.2h-2.2zM468.9 627.9h2.2v2.2h-2.2zM463.9 632.9h2.2v2.2h-2.2zM468.9 632.9h2.2v2.2h-2.2zM474.9 622.9h2.2v2.2h-2.2zM474.9 627.9h2.2v2.2h-2.2zM479.9 622.9h2.2v2.2h-2.2zM479.9 627.9h2.2v2.2h-2.2zM474.9 632.9h2.2v2.2h-2.2zM479.9 632.9h2.2v2.2h-2.2zM485.9 622.9h2.2v2.2h-2.2zM485.9 627.9h2.2v2.2h-2.2zM490.9 622.9h2.2v2.2h-2.2zM490.9 627.9h2.2v2.2h-2.2zM485.9 632.9h2.2v2.2h-2.2zM490.9 632.9h2.2v2.2h-2.2zM496.9 622.9h2.2v2.2h-2.2zM496.9 627.9h2.2v2.2h-2.2zM501.9 622.9h2.2v2.2h-2.2zM501.9 627.9h2.2v2.2h-2.2zM496.9 632.9h2.2v2.2h-2.2zM501.9 632.9h2.2v2.2h-2.2zM507.9 622.9h2.2v2.2h-2.2zM507.9 627.9h2.2v2.2h-2.2zM512.9 622.9h2.2v2.2h-2.2zM512.9 627.9h2.2v2.2h-2.2zM507.9 632.9h2.2v2.2h-2.2zM512.9 632.9h2.2v2.2h-2.2zM518.9 622.9h2.2v2.2h-2.2zM518.9 627.9h2.2v2.2h-2.2zM523.9 622.9h2.2v2.2h-2.2zM523.9 627.9h2.2v2.2h-2.2zM518.9 632.9h2.2v2.2h-2.2zM523.9 632.9h2.2v2.2h-2.2zM529.9 622.9h2.2v2.2h-2.2zM529.9 627.9h2.2v2.2h-2.2zM534.9 622.9h2.2v2.2h-2.2zM534.9 627.9h2.2v2.2h-2.2zM529.9 632.9h2.2v2.2h-2.2zM534.9 632.9h2.2v2.2h-2.2zM540.9 622.9h2.2v2.2h-2.2zM540.9 627.9h2.2v2.2h-2.2zM545.9 622.9h2.2v2.2h-2.2zM545.9 627.9h2.2v2.2h-2.2zM540.9 632.9h2.2v2.2h-2.2zM545.9 632.9h2.2v2.2h-2.2zM551.9 622.9h2.2v2.2h-2.2zM551.9 627.9h2.2v2.2h-2.2zM556.9 622.9h2.2v2.2h-2.2zM556.9 627.9h2.2v2.2h-2.2zM551.9 632.9h2.2v2.2h-2.2zM556.9 632.9h2.2v2.2h-2.2z" fill="#e8b59a"/><path d="M1123.9 632.9h2.2v2.2h-2.2zM1128.9 632.9h2.2v2.2h-2.2zM1134.9 632.9h2.2v2.2h-2.2zM1139.9 632.9h2.2v2.2h-2.2zM1145.9 632.9h2.2v2.2h-2.2zM1150.9 632.9h2.2v2.2h-2.2zM1156.9 632.9h2.2v2.2h-2.2zM1161.9 632.9h2.2v2.2h-2.2zM1167.9 632.9h2.2v2.2h-2.2zM1172.9 632.9h2.2v2.2h-2.2z" fill="#9298b0"/><path d="M336.9 639.9h2.2v2.2h-2.2zM336.9 644.9h2.2v2.2h-2.2zM336.9 649.9h2.2v2.2h-2.2zM336.9 654.9h2.2v2.2h-2.2zM342.9 639.9h2.2v2.2h-2.2zM342.9 644.9h2.2v2.2h-2.2zM342.9 649.9h2.2v2.2h-2.2zM347.9 639.9h2.2v2.2h-2.2zM347.9 644.9h2.2v2.2h-2.2zM347.9 649.9h2.2v2.2h-2.2zM342.9 654.9h2.2v2.2h-2.2zM347.9 654.9h2.2v2.2h-2.2zM353.9 639.9h2.2v2.2h-2.2zM353.9 644.9h2.2v2.2h-2.2zM353.9 649.9h2.2v2.2h-2.2zM358.9 639.9h2.2v2.2h-2.2zM358.9 644.9h2.2v2.2h-2.2zM358.9 649.9h2.2v2.2h-2.2zM353.9 654.9h2.2v2.2h-2.2zM358.9 654.9h2.2v2.2h-2.2zM364.9 639.9h2.2v2.2h-2.2zM364.9 644.9h2.2v2.2h-2.2zM364.9 649.9h2.2v2.2h-2.2zM369.9 639.9h2.2v2.2h-2.2zM369.9 644.9h2.2v2.2h-2.2zM369.9 649.9h2.2v2.2h-2.2zM364.9 654.9h2.2v2.2h-2.2zM369.9 654.9h2.2v2.2h-2.2zM375.9 639.9h2.2v2.2h-2.2zM375.9 644.9h2.2v2.2h-2.2zM375.9 649.9h2.2v2.2h-2.2zM380.9 639.9h2.2v2.2h-2.2zM380.9 644.9h2.2v2.2h-2.2zM380.9 649.9h2.2v2.2h-2.2zM375.9 654.9h2.2v2.2h-2.2zM380.9 654.9h2.2v2.2h-2.2zM386.9 639.9h2.2v2.2h-2.2zM386.9 644.9h2.2v2.2h-2.2zM386.9 649.9h2.2v2.2h-2.2zM391.9 639.9h2.2v2.2h-2.2zM391.9 644.9h2.2v2.2h-2.2zM391.9 649.9h2.2v2.2h-2.2zM386.9 654.9h2.2v2.2h-2.2zM391.9 654.9h2.2v2.2h-2.2zM397.9 639.9h2.2v2.2h-2.2zM397.9 644.9h2.2v2.2h-2.2zM397.9 649.9h2.2v2.2h-2.2zM402.9 639.9h2.2v2.2h-2.2zM402.9 644.9h2.2v2.2h-2.2zM402.9 649.9h2.2v2.2h-2.2zM397.9 654.9h2.2v2.2h-2.2zM402.9 654.9h2.2v2.2h-2.2zM408.9 639.9h2.2v2.2h-2.2zM408.9 644.9h2.2v2.2h-2.2zM408.9 649.9h2.2v2.2h-2.2zM413.9 639.9h2.2v2.2h-2.2zM413.9 644.9h2.2v2.2h-2.2zM413.9 649.9h2.2v2.2h-2.2zM408.9 654.9h2.2v2.2h-2.2zM413.9 654.9h2.2v2.2h-2.2zM419.9 639.9h2.2v2.2h-2.2zM419.9 644.9h2.2v2.2h-2.2zM419.9 649.9h2.2v2.2h-2.2zM424.9 639.9h2.2v2.2h-2.2zM424.9 644.9h2.2v2.2h-2.2zM424.9 649.9h2.2v2.2h-2.2zM419.9 654.9h2.2v2.2h-2.2zM424.9 654.9h2.2v2.2h-2.2zM430.9 639.9h2.2v2.2h-2.2zM430.9 644.9h2.2v2.2h-2.2zM430.9 649.9h2.2v2.2h-2.2zM435.9 639.9h2.2v2.2h-2.2zM435.9 644.9h2.2v2.2h-2.2zM435.9 649.9h2.2v2.2h-2.2zM430.9 654.9h2.2v2.2h-2.2zM435.9 654.9h2.2v2.2h-2.2zM441.9 639.9h2.2v2.2h-2.2zM441.9 644.9h2.2v2.2h-2.2zM441.9 649.9h2.2v2.2h-2.2zM446.9 639.9h2.2v2.2h-2.2zM446.9 644.9h2.2v2.2h-2.2zM446.9 649.9h2.2v2.2h-2.2zM441.9 654.9h2.2v2.2h-2.2zM446.9 654.9h2.2v2.2h-2.2zM452.9 639.9h2.2v2.2h-2.2zM452.9 644.9h2.2v2.2h-2.2zM452.9 649.9h2.2v2.2h-2.2zM457.9 639.9h2.2v2.2h-2.2zM457.9 644.9h2.2v2.2h-2.2zM457.9 649.9h2.2v2.2h-2.2zM452.9 654.9h2.2v2.2h-2.2zM457.9 654.9h2.2v2.2h-2.2zM463.9 639.9h2.2v2.2h-2.2zM463.9 644.9h2.2v2.2h-2.2zM463.9 649.9h2.2v2.2h-2.2zM468.9 639.9h2.2v2.2h-2.2zM468.9 644.9h2.2v2.2h-2.2zM468.9 649.9h2.2v2.2h-2.2zM463.9 654.9h2.2v2.2h-2.2zM468.9 654.9h2.2v2.2h-2.2zM474.9 639.9h2.2v2.2h-2.2zM474.9 644.9h2.2v2.2h-2.2zM474.9 649.9h2.2v2.2h-2.2zM479.9 639.9h2.2v2.2h-2.2zM479.9 644.9h2.2v2.2h-2.2zM479.9 649.9h2.2v2.2h-2.2zM474.9 654.9h2.2v2.2h-2.2zM479.9 654.9h2.2v2.2h-2.2zM485.9 639.9h2.2v2.2h-2.2zM485.9 644.9h2.2v2.2h-2.2zM485.9 649.9h2.2v2.2h-2.2zM490.9 639.9h2.2v2.2h-2.2zM490.9 644.9h2.2v2.2h-2.2zM490.9 649.9h2.2v2.2h-2.2zM485.9 654.9h2.2v2.2h-2.2zM490.9 654.9h2.2v2.2h-2.2zM496.9 639.9h2.2v2.2h-2.2zM496.9 644.9h2.2v2.2h-2.2zM496.9 649.9h2.2v2.2h-2.2zM501.9 639.9h2.2v2.2h-2.2zM501.9 644.9h2.2v2.2h-2.2zM501.9 649.9h2.2v2.2h-2.2zM496.9 654.9h2.2v2.2h-2.2zM501.9 654.9h2.2v2.2h-2.2zM507.9 639.9h2.2v2.2h-2.2zM507.9 644.9h2.2v2.2h-2.2zM507.9 649.9h2.2v2.2h-2.2zM512.9 639.9h2.2v2.2h-2.2zM512.9 644.9h2.2v2.2h-2.2zM512.9 649.9h2.2v2.2h-2.2zM507.9 654.9h2.2v2.2h-2.2zM512.9 654.9h2.2v2.2h-2.2zM518.9 639.9h2.2v2.2h-2.2zM518.9 644.9h2.2v2.2h-2.2zM518.9 649.9h2.2v2.2h-2.2zM523.9 639.9h2.2v2.2h-2.2zM523.9 644.9h2.2v2.2h-2.2zM523.9 649.9h2.2v2.2h-2.2zM518.9 654.9h2.2v2.2h-2.2zM523.9 654.9h2.2v2.2h-2.2zM529.9 639.9h2.2v2.2h-2.2zM529.9 644.9h2.2v2.2h-2.2zM529.9 649.9h2.2v2.2h-2.2zM534.9 639.9h2.2v2.2h-2.2zM534.9 644.9h2.2v2.2h-2.2zM534.9 649.9h2.2v2.2h-2.2zM529.9 654.9h2.2v2.2h-2.2zM534.9 654.9h2.2v2.2h-2.2zM540.9 639.9h2.2v2.2h-2.2zM540.9 644.9h2.2v2.2h-2.2zM540.9 649.9h2.2v2.2h-2.2zM545.9 639.9h2.2v2.2h-2.2zM545.9 644.9h2.2v2.2h-2.2zM545.9 649.9h2.2v2.2h-2.2zM540.9 654.9h2.2v2.2h-2.2zM545.9 654.9h2.2v2.2h-2.2zM551.9 639.9h2.2v2.2h-2.2zM551.9 644.9h2.2v2.2h-2.2zM551.9 649.9h2.2v2.2h-2.2zM556.9 639.9h2.2v2.2h-2.2zM556.9 644.9h2.2v2.2h-2.2zM556.9 649.9h2.2v2.2h-2.2zM551.9 654.9h2.2v2.2h-2.2zM556.9 654.9h2.2v2.2h-2.2z" fill="#eec2b4"/><path d="M1123.9 654.9h2.2v2.2h-2.2zM1128.9 654.9h2.2v2.2h-2.2zM1134.9 654.9h2.2v2.2h-2.2zM1139.9 654.9h2.2v2.2h-2.2zM1145.9 654.9h2.2v2.2h-2.2zM1150.9 654.9h2.2v2.2h-2.2zM1156.9 654.9h2.2v2.2h-2.2zM1161.9 654.9h2.2v2.2h-2.2zM1167.9 654.9h2.2v2.2h-2.2zM1172.9 654.9h2.2v2.2h-2.2z" fill="#9197af"/><path d="M336.9 661.9h2.2v2.2h-2.2zM336.9 666.9h2.2v2.2h-2.2zM336.9 671.9h2.2v2.2h-2.2zM336.9 676.9h2.2v2.2h-2.2zM342.9 661.9h2.2v2.2h-2.2zM342.9 666.9h2.2v2.2h-2.2zM342.9 671.9h2.2v2.2h-2.2zM347.9 661.9h2.2v2.2h-2.2zM347.9 666.9h2.2v2.2h-2.2zM347.9 671.9h2.2v2.2h-2.2zM342.9 676.9h2.2v2.2h-2.2zM347.9 676.9h2.2v2.2h-2.2zM353.9 661.9h2.2v2.2h-2.2zM353.9 666.9h2.2v2.2h-2.2zM353.9 671.9h2.2v2.2h-2.2zM358.9 661.9h2.2v2.2h-2.2zM358.9 666.9h2.2v2.2h-2.2zM358.9 671.9h2.2v2.2h-2.2zM353.9 676.9h2.2v2.2h-2.2zM358.9 676.9h2.2v2.2h-2.2zM364.9 661.9h2.2v2.2h-2.2zM364.9 666.9h2.2v2.2h-2.2zM364.9 671.9h2.2v2.2h-2.2zM369.9 661.9h2.2v2.2h-2.2zM369.9 666.9h2.2v2.2h-2.2zM369.9 671.9h2.2v2.2h-2.2zM364.9 676.9h2.2v2.2h-2.2zM369.9 676.9h2.2v2.2h-2.2zM375.9 661.9h2.2v2.2h-2.2zM375.9 666.9h2.2v2.2h-2.2zM375.9 671.9h2.2v2.2h-2.2zM380.9 661.9h2.2v2.2h-2.2zM380.9 666.9h2.2v2.2h-2.2zM380.9 671.9h2.2v2.2h-2.2zM375.9 676.9h2.2v2.2h-2.2zM380.9 676.9h2.2v2.2h-2.2zM386.9 661.9h2.2v2.2h-2.2zM386.9 666.9h2.2v2.2h-2.2zM386.9 671.9h2.2v2.2h-2.2zM391.9 661.9h2.2v2.2h-2.2zM391.9 666.9h2.2v2.2h-2.2zM391.9 671.9h2.2v2.2h-2.2zM386.9 676.9h2.2v2.2h-2.2zM391.9 676.9h2.2v2.2h-2.2zM397.9 661.9h2.2v2.2h-2.2zM397.9 666.9h2.2v2.2h-2.2zM397.9 671.9h2.2v2.2h-2.2zM402.9 661.9h2.2v2.2h-2.2zM402.9 666.9h2.2v2.2h-2.2zM402.9 671.9h2.2v2.2h-2.2zM397.9 676.9h2.2v2.2h-2.2zM402.9 676.9h2.2v2.2h-2.2zM408.9 661.9h2.2v2.2h-2.2zM408.9 666.9h2.2v2.2h-2.2zM408.9 671.9h2.2v2.2h-2.2zM413.9 661.9h2.2v2.2h-2.2zM413.9 666.9h2.2v2.2h-2.2zM413.9 671.9h2.2v2.2h-2.2zM408.9 676.9h2.2v2.2h-2.2zM413.9 676.9h2.2v2.2h-2.2zM419.9 661.9h2.2v2.2h-2.2zM419.9 666.9h2.2v2.2h-2.2zM419.9 671.9h2.2v2.2h-2.2zM424.9 661.9h2.2v2.2h-2.2zM424.9 666.9h2.2v2.2h-2.2zM424.9 671.9h2.2v2.2h-2.2zM419.9 676.9h2.2v2.2h-2.2zM424.9 676.9h2.2v2.2h-2.2zM430.9 661.9h2.2v2.2h-2.2zM430.9 666.9h2.2v2.2h-2.2zM430.9 671.9h2.2v2.2h-2.2zM435.9 661.9h2.2v2.2h-2.2zM435.9 666.9h2.2v2.2h-2.2zM435.9 671.9h2.2v2.2h-2.2zM430.9 676.9h2.2v2.2h-2.2zM435.9 676.9h2.2v2.2h-2.2zM441.9 661.9h2.2v2.2h-2.2zM441.9 666.9h2.2v2.2h-2.2zM441.9 671.9h2.2v2.2h-2.2zM446.9 661.9h2.2v2.2h-2.2zM446.9 666.9h2.2v2.2h-2.2zM446.9 671.9h2.2v2.2h-2.2zM441.9 676.9h2.2v2.2h-2.2zM446.9 676.9h2.2v2.2h-2.2zM452.9 661.9h2.2v2.2h-2.2zM452.9 666.9h2.2v2.2h-2.2zM452.9 671.9h2.2v2.2h-2.2zM457.9 661.9h2.2v2.2h-2.2zM457.9 666.9h2.2v2.2h-2.2zM457.9 671.9h2.2v2.2h-2.2zM452.9 676.9h2.2v2.2h-2.2zM457.9 676.9h2.2v2.2h-2.2zM463.9 661.9h2.2v2.2h-2.2zM463.9 666.9h2.2v2.2h-2.2zM463.9 671.9h2.2v2.2h-2.2zM468.9 661.9h2.2v2.2h-2.2zM468.9 666.9h2.2v2.2h-2.2zM468.9 671.9h2.2v2.2h-2.2zM463.9 676.9h2.2v2.2h-2.2zM468.9 676.9h2.2v2.2h-2.2zM474.9 661.9h2.2v2.2h-2.2zM474.9 666.9h2.2v2.2h-2.2zM474.9 671.9h2.2v2.2h-2.2zM479.9 661.9h2.2v2.2h-2.2zM479.9 666.9h2.2v2.2h-2.2zM479.9 671.9h2.2v2.2h-2.2zM474.9 676.9h2.2v2.2h-2.2zM479.9 676.9h2.2v2.2h-2.2zM485.9 661.9h2.2v2.2h-2.2zM485.9 666.9h2.2v2.2h-2.2zM485.9 671.9h2.2v2.2h-2.2zM490.9 661.9h2.2v2.2h-2.2zM490.9 666.9h2.2v2.2h-2.2zM490.9 671.9h2.2v2.2h-2.2zM485.9 676.9h2.2v2.2h-2.2zM490.9 676.9h2.2v2.2h-2.2zM496.9 661.9h2.2v2.2h-2.2zM496.9 666.9h2.2v2.2h-2.2zM496.9 671.9h2.2v2.2h-2.2zM501.9 661.9h2.2v2.2h-2.2zM501.9 666.9h2.2v2.2h-2.2zM501.9 671.9h2.2v2.2h-2.2zM496.9 676.9h2.2v2.2h-2.2zM501.9 676.9h2.2v2.2h-2.2zM507.9 661.9h2.2v2.2h-2.2zM507.9 666.9h2.2v2.2h-2.2zM507.9 671.9h2.2v2.2h-2.2zM512.9 661.9h2.2v2.2h-2.2zM512.9 666.9h2.2v2.2h-2.2zM512.9 671.9h2.2v2.2h-2.2zM507.9 676.9h2.2v2.2h-2.2zM512.9 676.9h2.2v2.2h-2.2zM518.9 661.9h2.2v2.2h-2.2zM518.9 666.9h2.2v2.2h-2.2zM518.9 671.9h2.2v2.2h-2.2zM523.9 661.9h2.2v2.2h-2.2zM523.9 666.9h2.2v2.2h-2.2zM523.9 671.9h2.2v2.2h-2.2zM518.9 676.9h2.2v2.2h-2.2zM523.9 676.9h2.2v2.2h-2.2zM529.9 661.9h2.2v2.2h-2.2zM529.9 666.9h2.2v2.2h-2.2zM529.9 671.9h2.2v2.2h-2.2zM534.9 661.9h2.2v2.2h-2.2zM534.9 666.9h2.2v2.2h-2.2zM534.9 671.9h2.2v2.2h-2.2zM529.9 676.9h2.2v2.2h-2.2zM534.9 676.9h2.2v2.2h-2.2zM540.9 661.9h2.2v2.2h-2.2zM540.9 666.9h2.2v2.2h-2.2zM540.9 671.9h2.2v2.2h-2.2zM545.9 661.9h2.2v2.2h-2.2zM545.9 666.9h2.2v2.2h-2.2zM545.9 671.9h2.2v2.2h-2.2zM540.9 676.9h2.2v2.2h-2.2zM545.9 676.9h2.2v2.2h-2.2zM551.9 661.9h2.2v2.2h-2.2zM551.9 666.9h2.2v2.2h-2.2zM551.9 671.9h2.2v2.2h-2.2zM556.9 661.9h2.2v2.2h-2.2zM556.9 666.9h2.2v2.2h-2.2zM556.9 671.9h2.2v2.2h-2.2zM551.9 676.9h2.2v2.2h-2.2zM556.9 676.9h2.2v2.2h-2.2z" fill="#efc6bd"/><path d="M1123.9 676.9h2.2v2.2h-2.2zM1128.9 676.9h2.2v2.2h-2.2zM1134.9 676.9h2.2v2.2h-2.2zM1139.9 676.9h2.2v2.2h-2.2zM1145.9 676.9h2.2v2.2h-2.2zM1150.9 676.9h2.2v2.2h-2.2zM1156.9 676.9h2.2v2.2h-2.2zM1161.9 676.9h2.2v2.2h-2.2zM1167.9 676.9h2.2v2.2h-2.2zM1172.9 676.9h2.2v2.2h-2.2z" fill="#9096ad"/><path d="M336.9 683.9h2.2v2.2h-2.2zM336.9 688.9h2.2v2.2h-2.2zM336.9 693.9h2.2v2.2h-2.2zM336.9 698.9h2.2v2.2h-2.2zM342.9 683.9h2.2v2.2h-2.2zM342.9 688.9h2.2v2.2h-2.2zM342.9 693.9h2.2v2.2h-2.2zM347.9 683.9h2.2v2.2h-2.2zM347.9 688.9h2.2v2.2h-2.2zM347.9 693.9h2.2v2.2h-2.2zM342.9 698.9h2.2v2.2h-2.2zM347.9 698.9h2.2v2.2h-2.2zM353.9 683.9h2.2v2.2h-2.2zM353.9 688.9h2.2v2.2h-2.2zM353.9 693.9h2.2v2.2h-2.2zM358.9 683.9h2.2v2.2h-2.2zM358.9 688.9h2.2v2.2h-2.2zM358.9 693.9h2.2v2.2h-2.2zM353.9 698.9h2.2v2.2h-2.2zM358.9 698.9h2.2v2.2h-2.2zM364.9 683.9h2.2v2.2h-2.2zM364.9 688.9h2.2v2.2h-2.2zM364.9 693.9h2.2v2.2h-2.2zM369.9 683.9h2.2v2.2h-2.2zM369.9 688.9h2.2v2.2h-2.2zM369.9 693.9h2.2v2.2h-2.2zM364.9 698.9h2.2v2.2h-2.2zM369.9 698.9h2.2v2.2h-2.2zM375.9 683.9h2.2v2.2h-2.2zM375.9 688.9h2.2v2.2h-2.2zM375.9 693.9h2.2v2.2h-2.2zM380.9 683.9h2.2v2.2h-2.2zM380.9 688.9h2.2v2.2h-2.2zM380.9 693.9h2.2v2.2h-2.2zM375.9 698.9h2.2v2.2h-2.2zM380.9 698.9h2.2v2.2h-2.2zM386.9 683.9h2.2v2.2h-2.2zM386.9 688.9h2.2v2.2h-2.2zM386.9 693.9h2.2v2.2h-2.2zM391.9 683.9h2.2v2.2h-2.2zM391.9 688.9h2.2v2.2h-2.2zM391.9 693.9h2.2v2.2h-2.2zM386.9 698.9h2.2v2.2h-2.2zM391.9 698.9h2.2v2.2h-2.2zM397.9 683.9h2.2v2.2h-2.2zM397.9 688.9h2.2v2.2h-2.2zM397.9 693.9h2.2v2.2h-2.2zM402.9 683.9h2.2v2.2h-2.2zM402.9 688.9h2.2v2.2h-2.2zM402.9 693.9h2.2v2.2h-2.2zM397.9 698.9h2.2v2.2h-2.2zM402.9 698.9h2.2v2.2h-2.2zM408.9 683.9h2.2v2.2h-2.2zM408.9 688.9h2.2v2.2h-2.2zM408.9 693.9h2.2v2.2h-2.2zM413.9 683.9h2.2v2.2h-2.2zM413.9 688.9h2.2v2.2h-2.2zM413.9 693.9h2.2v2.2h-2.2zM408.9 698.9h2.2v2.2h-2.2zM413.9 698.9h2.2v2.2h-2.2zM419.9 683.9h2.2v2.2h-2.2zM419.9 688.9h2.2v2.2h-2.2zM419.9 693.9h2.2v2.2h-2.2zM424.9 683.9h2.2v2.2h-2.2zM424.9 688.9h2.2v2.2h-2.2zM424.9 693.9h2.2v2.2h-2.2zM419.9 698.9h2.2v2.2h-2.2zM424.9 698.9h2.2v2.2h-2.2zM430.9 683.9h2.2v2.2h-2.2zM430.9 688.9h2.2v2.2h-2.2zM430.9 693.9h2.2v2.2h-2.2zM435.9 683.9h2.2v2.2h-2.2zM435.9 688.9h2.2v2.2h-2.2zM435.9 693.9h2.2v2.2h-2.2zM430.9 698.9h2.2v2.2h-2.2zM435.9 698.9h2.2v2.2h-2.2zM441.9 683.9h2.2v2.2h-2.2zM441.9 688.9h2.2v2.2h-2.2zM441.9 693.9h2.2v2.2h-2.2zM446.9 683.9h2.2v2.2h-2.2zM446.9 688.9h2.2v2.2h-2.2zM446.9 693.9h2.2v2.2h-2.2zM441.9 698.9h2.2v2.2h-2.2zM446.9 698.9h2.2v2.2h-2.2zM452.9 683.9h2.2v2.2h-2.2zM452.9 688.9h2.2v2.2h-2.2zM452.9 693.9h2.2v2.2h-2.2zM457.9 683.9h2.2v2.2h-2.2zM457.9 688.9h2.2v2.2h-2.2zM457.9 693.9h2.2v2.2h-2.2zM452.9 698.9h2.2v2.2h-2.2zM457.9 698.9h2.2v2.2h-2.2zM463.9 683.9h2.2v2.2h-2.2zM463.9 688.9h2.2v2.2h-2.2zM463.9 693.9h2.2v2.2h-2.2zM468.9 683.9h2.2v2.2h-2.2zM468.9 688.9h2.2v2.2h-2.2zM468.9 693.9h2.2v2.2h-2.2zM463.9 698.9h2.2v2.2h-2.2zM468.9 698.9h2.2v2.2h-2.2zM474.9 683.9h2.2v2.2h-2.2zM474.9 688.9h2.2v2.2h-2.2zM474.9 693.9h2.2v2.2h-2.2zM479.9 683.9h2.2v2.2h-2.2zM479.9 688.9h2.2v2.2h-2.2zM479.9 693.9h2.2v2.2h-2.2zM474.9 698.9h2.2v2.2h-2.2zM479.9 698.9h2.2v2.2h-2.2zM485.9 683.9h2.2v2.2h-2.2zM485.9 688.9h2.2v2.2h-2.2zM485.9 693.9h2.2v2.2h-2.2zM490.9 683.9h2.2v2.2h-2.2zM490.9 688.9h2.2v2.2h-2.2zM490.9 693.9h2.2v2.2h-2.2zM485.9 698.9h2.2v2.2h-2.2zM490.9 698.9h2.2v2.2h-2.2zM496.9 683.9h2.2v2.2h-2.2zM496.9 688.9h2.2v2.2h-2.2zM496.9 693.9h2.2v2.2h-2.2zM501.9 683.9h2.2v2.2h-2.2zM501.9 688.9h2.2v2.2h-2.2zM501.9 693.9h2.2v2.2h-2.2zM496.9 698.9h2.2v2.2h-2.2zM501.9 698.9h2.2v2.2h-2.2zM507.9 683.9h2.2v2.2h-2.2zM507.9 688.9h2.2v2.2h-2.2zM507.9 693.9h2.2v2.2h-2.2zM512.9 683.9h2.2v2.2h-2.2zM512.9 688.9h2.2v2.2h-2.2zM512.9 693.9h2.2v2.2h-2.2zM507.9 698.9h2.2v2.2h-2.2zM512.9 698.9h2.2v2.2h-2.2zM518.9 683.9h2.2v2.2h-2.2zM518.9 688.9h2.2v2.2h-2.2zM518.9 693.9h2.2v2.2h-2.2zM523.9 683.9h2.2v2.2h-2.2zM523.9 688.9h2.2v2.2h-2.2zM523.9 693.9h2.2v2.2h-2.2zM518.9 698.9h2.2v2.2h-2.2zM523.9 698.9h2.2v2.2h-2.2zM529.9 683.9h2.2v2.2h-2.2zM529.9 688.9h2.2v2.2h-2.2zM529.9 693.9h2.2v2.2h-2.2zM534.9 683.9h2.2v2.2h-2.2zM534.9 688.9h2.2v2.2h-2.2zM534.9 693.9h2.2v2.2h-2.2zM529.9 698.9h2.2v2.2h-2.2zM534.9 698.9h2.2v2.2h-2.2zM540.9 683.9h2.2v2.2h-2.2zM540.9 688.9h2.2v2.2h-2.2zM540.9 693.9h2.2v2.2h-2.2zM545.9 683.9h2.2v2.2h-2.2zM545.9 688.9h2.2v2.2h-2.2zM545.9 693.9h2.2v2.2h-2.2zM540.9 698.9h2.2v2.2h-2.2zM545.9 698.9h2.2v2.2h-2.2zM551.9 683.9h2.2v2.2h-2.2zM551.9 688.9h2.2v2.2h-2.2zM551.9 693.9h2.2v2.2h-2.2zM556.9 683.9h2.2v2.2h-2.2zM556.9 688.9h2.2v2.2h-2.2zM556.9 693.9h2.2v2.2h-2.2zM551.9 698.9h2.2v2.2h-2.2zM556.9 698.9h2.2v2.2h-2.2z" fill="#f2cfc6"/><path d="M1123.9 698.9h2.2v2.2h-2.2zM1128.9 698.9h2.2v2.2h-2.2zM1134.9 698.9h2.2v2.2h-2.2zM1139.9 698.9h2.2v2.2h-2.2zM1145.9 698.9h2.2v2.2h-2.2zM1150.9 698.9h2.2v2.2h-2.2zM1156.9 698.9h2.2v2.2h-2.2zM1161.9 698.9h2.2v2.2h-2.2zM1167.9 698.9h2.2v2.2h-2.2zM1172.9 698.9h2.2v2.2h-2.2z" fill="#8f94ac"/><path d="M1123.9 720.9h2.2v2.2h-2.2zM1128.9 720.9h2.2v2.2h-2.2zM1134.9 720.9h2.2v2.2h-2.2zM1139.9 720.9h2.2v2.2h-2.2zM1145.9 720.9h2.2v2.2h-2.2zM1150.9 720.9h2.2v2.2h-2.2zM1156.9 720.9h2.2v2.2h-2.2zM1161.9 720.9h2.2v2.2h-2.2zM1167.9 720.9h2.2v2.2h-2.2zM1172.9 720.9h2.2v2.2h-2.2z" fill="#8d93ab"/><path d="M1123.9 742.9h2.2v2.2h-2.2zM1128.9 742.9h2.2v2.2h-2.2zM1134.9 742.9h2.2v2.2h-2.2zM1139.9 742.9h2.2v2.2h-2.2zM1145.9 742.9h2.2v2.2h-2.2zM1150.9 742.9h2.2v2.2h-2.2zM1156.9 742.9h2.2v2.2h-2.2zM1161.9 742.9h2.2v2.2h-2.2zM1167.9 742.9h2.2v2.2h-2.2zM1172.9 742.9h2.2v2.2h-2.2z" fill="#8c92a9"/><path d="M1123.9 764.9h2.2v2.2h-2.2zM1128.9 764.9h2.2v2.2h-2.2zM1134.9 764.9h2.2v2.2h-2.2zM1139.9 764.9h2.2v2.2h-2.2zM1145.9 764.9h2.2v2.2h-2.2zM1150.9 764.9h2.2v2.2h-2.2zM1156.9 764.9h2.2v2.2h-2.2zM1161.9 764.9h2.2v2.2h-2.2zM1167.9 764.9h2.2v2.2h-2.2zM1172.9 764.9h2.2v2.2h-2.2z" fill="#8b91a8"/><path d="M1123.9 786.9h2.2v2.2h-2.2zM1128.9 786.9h2.2v2.2h-2.2zM1134.9 786.9h2.2v2.2h-2.2zM1139.9 786.9h2.2v2.2h-2.2zM1145.9 786.9h2.2v2.2h-2.2zM1150.9 786.9h2.2v2.2h-2.2zM1156.9 786.9h2.2v2.2h-2.2zM1161.9 786.9h2.2v2.2h-2.2zM1167.9 786.9h2.2v2.2h-2.2zM1172.9 786.9h2.2v2.2h-2.2z" fill="#8a8fa7"/><path d="M336.9 808.9h2.2v2.2h-2.2zM342.9 808.9h2.2v2.2h-2.2zM347.9 808.9h2.2v2.2h-2.2zM353.9 808.9h2.2v2.2h-2.2zM358.9 808.9h2.2v2.2h-2.2zM364.9 808.9h2.2v2.2h-2.2zM369.9 808.9h2.2v2.2h-2.2zM375.9 808.9h2.2v2.2h-2.2zM380.9 808.9h2.2v2.2h-2.2zM386.9 808.9h2.2v2.2h-2.2zM391.9 808.9h2.2v2.2h-2.2zM397.9 808.9h2.2v2.2h-2.2zM402.9 808.9h2.2v2.2h-2.2zM408.9 808.9h2.2v2.2h-2.2zM413.9 808.9h2.2v2.2h-2.2zM419.9 808.9h2.2v2.2h-2.2zM424.9 808.9h2.2v2.2h-2.2zM430.9 808.9h2.2v2.2h-2.2zM435.9 808.9h2.2v2.2h-2.2zM441.9 808.9h2.2v2.2h-2.2zM446.9 808.9h2.2v2.2h-2.2zM452.9 808.9h2.2v2.2h-2.2zM457.9 808.9h2.2v2.2h-2.2zM463.9 808.9h2.2v2.2h-2.2zM468.9 808.9h2.2v2.2h-2.2zM474.9 808.9h2.2v2.2h-2.2zM479.9 808.9h2.2v2.2h-2.2zM485.9 808.9h2.2v2.2h-2.2zM490.9 808.9h2.2v2.2h-2.2zM496.9 808.9h2.2v2.2h-2.2zM501.9 808.9h2.2v2.2h-2.2zM507.9 808.9h2.2v2.2h-2.2zM512.9 808.9h2.2v2.2h-2.2zM518.9 808.9h2.2v2.2h-2.2zM523.9 808.9h2.2v2.2h-2.2zM529.9 808.9h2.2v2.2h-2.2zM534.9 808.9h2.2v2.2h-2.2zM540.9 808.9h2.2v2.2h-2.2zM545.9 808.9h2.2v2.2h-2.2zM551.9 808.9h2.2v2.2h-2.2zM556.9 808.9h2.2v2.2h-2.2z" fill="#eebbd8"/><path d="M1123.9 808.9h2.2v2.2h-2.2zM1128.9 808.9h2.2v2.2h-2.2zM1134.9 808.9h2.2v2.2h-2.2zM1139.9 808.9h2.2v2.2h-2.2zM1145.9 808.9h2.2v2.2h-2.2zM1150.9 808.9h2.2v2.2h-2.2zM1156.9 808.9h2.2v2.2h-2.2zM1161.9 808.9h2.2v2.2h-2.2zM1167.9 808.9h2.2v2.2h-2.2zM1172.9 808.9h2.2v2.2h-2.2z" fill="#888ea5"/><path d="M1123.9 830.9h2.2v2.2h-2.2zM1128.9 830.9h2.2v2.2h-2.2zM1134.9 830.9h2.2v2.2h-2.2zM1139.9 830.9h2.2v2.2h-2.2zM1145.9 830.9h2.2v2.2h-2.2zM1150.9 830.9h2.2v2.2h-2.2zM1156.9 830.9h2.2v2.2h-2.2zM1161.9 830.9h2.2v2.2h-2.2zM1167.9 830.9h2.2v2.2h-2.2zM1172.9 830.9h2.2v2.2h-2.2z" fill="#878da4"/><path d="M336.9 842.9h2.2v2.2h-2.2zM336.9 847.9h2.2v2.2h-2.2zM336.9 852.9h2.2v2.2h-2.2zM342.9 842.9h2.2v2.2h-2.2zM342.9 847.9h2.2v2.2h-2.2zM347.9 842.9h2.2v2.2h-2.2zM347.9 847.9h2.2v2.2h-2.2zM342.9 852.9h2.2v2.2h-2.2zM347.9 852.9h2.2v2.2h-2.2zM353.9 842.9h2.2v2.2h-2.2zM353.9 847.9h2.2v2.2h-2.2zM358.9 842.9h2.2v2.2h-2.2zM358.9 847.9h2.2v2.2h-2.2zM353.9 852.9h2.2v2.2h-2.2zM358.9 852.9h2.2v2.2h-2.2zM364.9 842.9h2.2v2.2h-2.2zM364.9 847.9h2.2v2.2h-2.2zM369.9 842.9h2.2v2.2h-2.2zM369.9 847.9h2.2v2.2h-2.2zM364.9 852.9h2.2v2.2h-2.2zM369.9 852.9h2.2v2.2h-2.2zM375.9 842.9h2.2v2.2h-2.2zM375.9 847.9h2.2v2.2h-2.2zM380.9 842.9h2.2v2.2h-2.2zM380.9 847.9h2.2v2.2h-2.2zM375.9 852.9h2.2v2.2h-2.2zM380.9 852.9h2.2v2.2h-2.2zM386.9 842.9h2.2v2.2h-2.2zM386.9 847.9h2.2v2.2h-2.2zM391.9 842.9h2.2v2.2h-2.2zM391.9 847.9h2.2v2.2h-2.2zM386.9 852.9h2.2v2.2h-2.2zM391.9 852.9h2.2v2.2h-2.2zM397.9 842.9h2.2v2.2h-2.2zM397.9 847.9h2.2v2.2h-2.2zM402.9 842.9h2.2v2.2h-2.2zM402.9 847.9h2.2v2.2h-2.2zM397.9 852.9h2.2v2.2h-2.2zM402.9 852.9h2.2v2.2h-2.2zM408.9 842.9h2.2v2.2h-2.2zM408.9 847.9h2.2v2.2h-2.2zM413.9 842.9h2.2v2.2h-2.2zM413.9 847.9h2.2v2.2h-2.2zM408.9 852.9h2.2v2.2h-2.2zM413.9 852.9h2.2v2.2h-2.2zM419.9 842.9h2.2v2.2h-2.2zM419.9 847.9h2.2v2.2h-2.2zM424.9 842.9h2.2v2.2h-2.2zM424.9 847.9h2.2v2.2h-2.2zM419.9 852.9h2.2v2.2h-2.2zM424.9 852.9h2.2v2.2h-2.2zM430.9 842.9h2.2v2.2h-2.2zM430.9 847.9h2.2v2.2h-2.2zM435.9 842.9h2.2v2.2h-2.2zM435.9 847.9h2.2v2.2h-2.2zM430.9 852.9h2.2v2.2h-2.2zM435.9 852.9h2.2v2.2h-2.2zM441.9 842.9h2.2v2.2h-2.2zM441.9 847.9h2.2v2.2h-2.2zM446.9 842.9h2.2v2.2h-2.2zM446.9 847.9h2.2v2.2h-2.2zM441.9 852.9h2.2v2.2h-2.2zM446.9 852.9h2.2v2.2h-2.2zM452.9 847.9h2.2v2.2h-2.2zM457.9 847.9h2.2v2.2h-2.2zM452.9 852.9h2.2v2.2h-2.2zM457.9 852.9h2.2v2.2h-2.2zM463.9 847.9h2.2v2.2h-2.2zM468.9 847.9h2.2v2.2h-2.2zM463.9 852.9h2.2v2.2h-2.2zM468.9 852.9h2.2v2.2h-2.2zM474.9 847.9h2.2v2.2h-2.2zM479.9 847.9h2.2v2.2h-2.2zM474.9 852.9h2.2v2.2h-2.2zM479.9 852.9h2.2v2.2h-2.2zM485.9 847.9h2.2v2.2h-2.2zM490.9 847.9h2.2v2.2h-2.2zM485.9 852.9h2.2v2.2h-2.2zM490.9 852.9h2.2v2.2h-2.2zM496.9 842.9h2.2v2.2h-2.2zM496.9 847.9h2.2v2.2h-2.2zM501.9 842.9h2.2v2.2h-2.2zM501.9 847.9h2.2v2.2h-2.2zM496.9 852.9h2.2v2.2h-2.2zM501.9 852.9h2.2v2.2h-2.2zM507.9 847.9h2.2v2.2h-2.2zM512.9 842.9h2.2v2.2h-2.2zM512.9 847.9h2.2v2.2h-2.2zM507.9 852.9h2.2v2.2h-2.2zM512.9 852.9h2.2v2.2h-2.2zM518.9 847.9h2.2v2.2h-2.2zM523.9 842.9h2.2v2.2h-2.2zM523.9 847.9h2.2v2.2h-2.2zM518.9 852.9h2.2v2.2h-2.2zM523.9 852.9h2.2v2.2h-2.2zM529.9 847.9h2.2v2.2h-2.2zM534.9 847.9h2.2v2.2h-2.2zM529.9 852.9h2.2v2.2h-2.2zM534.9 852.9h2.2v2.2h-2.2zM540.9 847.9h2.2v2.2h-2.2zM545.9 847.9h2.2v2.2h-2.2zM540.9 852.9h2.2v2.2h-2.2zM545.9 852.9h2.2v2.2h-2.2zM551.9 847.9h2.2v2.2h-2.2zM556.9 847.9h2.2v2.2h-2.2zM551.9 852.9h2.2v2.2h-2.2zM556.9 852.9h2.2v2.2h-2.2z" fill="#a3cf88"/><path d="M1123.9 852.9h2.2v2.2h-2.2zM1128.9 852.9h2.2v2.2h-2.2zM1134.9 852.9h2.2v2.2h-2.2zM1139.9 852.9h2.2v2.2h-2.2zM1145.9 852.9h2.2v2.2h-2.2zM1150.9 852.9h2.2v2.2h-2.2zM1156.9 852.9h2.2v2.2h-2.2zM1161.9 852.9h2.2v2.2h-2.2zM1167.9 852.9h2.2v2.2h-2.2zM1172.9 852.9h2.2v2.2h-2.2z" fill="#868ba3"/><path d="M336.9 859.9h2.2v2.2h-2.2zM336.9 864.9h2.2v2.2h-2.2zM336.9 869.9h2.2v2.2h-2.2zM336.9 874.9h2.2v2.2h-2.2zM342.9 859.9h2.2v2.2h-2.2zM342.9 864.9h2.2v2.2h-2.2zM342.9 869.9h2.2v2.2h-2.2zM347.9 859.9h2.2v2.2h-2.2zM347.9 864.9h2.2v2.2h-2.2zM347.9 869.9h2.2v2.2h-2.2zM342.9 874.9h2.2v2.2h-2.2zM347.9 874.9h2.2v2.2h-2.2zM353.9 859.9h2.2v2.2h-2.2zM353.9 864.9h2.2v2.2h-2.2zM353.9 869.9h2.2v2.2h-2.2zM358.9 859.9h2.2v2.2h-2.2zM358.9 864.9h2.2v2.2h-2.2zM358.9 869.9h2.2v2.2h-2.2zM353.9 874.9h2.2v2.2h-2.2zM358.9 874.9h2.2v2.2h-2.2zM364.9 859.9h2.2v2.2h-2.2zM364.9 864.9h2.2v2.2h-2.2zM364.9 869.9h2.2v2.2h-2.2zM369.9 859.9h2.2v2.2h-2.2zM369.9 864.9h2.2v2.2h-2.2zM369.9 869.9h2.2v2.2h-2.2zM364.9 874.9h2.2v2.2h-2.2zM369.9 874.9h2.2v2.2h-2.2zM375.9 859.9h2.2v2.2h-2.2zM375.9 864.9h2.2v2.2h-2.2zM375.9 869.9h2.2v2.2h-2.2zM380.9 859.9h2.2v2.2h-2.2zM380.9 864.9h2.2v2.2h-2.2zM380.9 869.9h2.2v2.2h-2.2zM375.9 874.9h2.2v2.2h-2.2zM380.9 874.9h2.2v2.2h-2.2zM386.9 859.9h2.2v2.2h-2.2zM386.9 864.9h2.2v2.2h-2.2zM386.9 869.9h2.2v2.2h-2.2zM391.9 859.9h2.2v2.2h-2.2zM391.9 864.9h2.2v2.2h-2.2zM391.9 869.9h2.2v2.2h-2.2zM386.9 874.9h2.2v2.2h-2.2zM391.9 874.9h2.2v2.2h-2.2zM397.9 859.9h2.2v2.2h-2.2zM397.9 864.9h2.2v2.2h-2.2zM397.9 869.9h2.2v2.2h-2.2zM402.9 859.9h2.2v2.2h-2.2zM402.9 864.9h2.2v2.2h-2.2zM402.9 869.9h2.2v2.2h-2.2zM397.9 874.9h2.2v2.2h-2.2zM402.9 874.9h2.2v2.2h-2.2zM408.9 859.9h2.2v2.2h-2.2zM408.9 864.9h2.2v2.2h-2.2zM408.9 869.9h2.2v2.2h-2.2zM413.9 859.9h2.2v2.2h-2.2zM413.9 864.9h2.2v2.2h-2.2zM413.9 869.9h2.2v2.2h-2.2zM408.9 874.9h2.2v2.2h-2.2zM413.9 874.9h2.2v2.2h-2.2zM419.9 859.9h2.2v2.2h-2.2zM419.9 864.9h2.2v2.2h-2.2zM419.9 869.9h2.2v2.2h-2.2zM424.9 859.9h2.2v2.2h-2.2zM424.9 864.9h2.2v2.2h-2.2zM424.9 869.9h2.2v2.2h-2.2zM419.9 874.9h2.2v2.2h-2.2zM424.9 874.9h2.2v2.2h-2.2zM430.9 859.9h2.2v2.2h-2.2zM430.9 864.9h2.2v2.2h-2.2zM430.9 869.9h2.2v2.2h-2.2zM435.9 859.9h2.2v2.2h-2.2zM435.9 864.9h2.2v2.2h-2.2zM435.9 869.9h2.2v2.2h-2.2zM430.9 874.9h2.2v2.2h-2.2zM435.9 874.9h2.2v2.2h-2.2zM441.9 859.9h2.2v2.2h-2.2zM441.9 864.9h2.2v2.2h-2.2zM441.9 869.9h2.2v2.2h-2.2zM446.9 859.9h2.2v2.2h-2.2zM446.9 864.9h2.2v2.2h-2.2zM446.9 869.9h2.2v2.2h-2.2zM441.9 874.9h2.2v2.2h-2.2zM446.9 874.9h2.2v2.2h-2.2zM452.9 859.9h2.2v2.2h-2.2zM452.9 864.9h2.2v2.2h-2.2zM452.9 869.9h2.2v2.2h-2.2zM457.9 859.9h2.2v2.2h-2.2zM457.9 864.9h2.2v2.2h-2.2zM457.9 869.9h2.2v2.2h-2.2zM452.9 874.9h2.2v2.2h-2.2zM457.9 874.9h2.2v2.2h-2.2zM463.9 859.9h2.2v2.2h-2.2zM463.9 864.9h2.2v2.2h-2.2zM463.9 869.9h2.2v2.2h-2.2zM468.9 859.9h2.2v2.2h-2.2zM468.9 864.9h2.2v2.2h-2.2zM468.9 869.9h2.2v2.2h-2.2zM463.9 874.9h2.2v2.2h-2.2zM468.9 874.9h2.2v2.2h-2.2zM474.9 859.9h2.2v2.2h-2.2zM474.9 864.9h2.2v2.2h-2.2zM474.9 869.9h2.2v2.2h-2.2zM479.9 859.9h2.2v2.2h-2.2zM479.9 864.9h2.2v2.2h-2.2zM479.9 869.9h2.2v2.2h-2.2zM474.9 874.9h2.2v2.2h-2.2zM479.9 874.9h2.2v2.2h-2.2zM485.9 859.9h2.2v2.2h-2.2zM485.9 864.9h2.2v2.2h-2.2zM485.9 869.9h2.2v2.2h-2.2zM490.9 859.9h2.2v2.2h-2.2zM490.9 864.9h2.2v2.2h-2.2zM490.9 869.9h2.2v2.2h-2.2zM485.9 874.9h2.2v2.2h-2.2zM490.9 874.9h2.2v2.2h-2.2zM496.9 859.9h2.2v2.2h-2.2zM496.9 864.9h2.2v2.2h-2.2zM496.9 869.9h2.2v2.2h-2.2zM501.9 859.9h2.2v2.2h-2.2zM501.9 864.9h2.2v2.2h-2.2zM501.9 869.9h2.2v2.2h-2.2zM496.9 874.9h2.2v2.2h-2.2zM501.9 874.9h2.2v2.2h-2.2zM507.9 859.9h2.2v2.2h-2.2zM507.9 864.9h2.2v2.2h-2.2zM507.9 869.9h2.2v2.2h-2.2zM512.9 859.9h2.2v2.2h-2.2zM512.9 864.9h2.2v2.2h-2.2zM512.9 869.9h2.2v2.2h-2.2zM507.9 874.9h2.2v2.2h-2.2zM512.9 874.9h2.2v2.2h-2.2zM518.9 859.9h2.2v2.2h-2.2zM518.9 864.9h2.2v2.2h-2.2zM518.9 869.9h2.2v2.2h-2.2zM523.9 859.9h2.2v2.2h-2.2zM523.9 864.9h2.2v2.2h-2.2zM523.9 869.9h2.2v2.2h-2.2zM518.9 874.9h2.2v2.2h-2.2zM523.9 874.9h2.2v2.2h-2.2zM529.9 859.9h2.2v2.2h-2.2zM529.9 864.9h2.2v2.2h-2.2zM529.9 869.9h2.2v2.2h-2.2zM534.9 859.9h2.2v2.2h-2.2zM534.9 864.9h2.2v2.2h-2.2zM534.9 869.9h2.2v2.2h-2.2zM529.9 874.9h2.2v2.2h-2.2zM534.9 874.9h2.2v2.2h-2.2zM540.9 859.9h2.2v2.2h-2.2zM540.9 864.9h2.2v2.2h-2.2zM540.9 869.9h2.2v2.2h-2.2zM545.9 859.9h2.2v2.2h-2.2zM545.9 864.9h2.2v2.2h-2.2zM545.9 869.9h2.2v2.2h-2.2zM540.9 874.9h2.2v2.2h-2.2zM545.9 874.9h2.2v2.2h-2.2zM551.9 859.9h2.2v2.2h-2.2zM551.9 864.9h2.2v2.2h-2.2zM551.9 869.9h2.2v2.2h-2.2zM556.9 859.9h2.2v2.2h-2.2zM556.9 864.9h2.2v2.2h-2.2zM556.9 869.9h2.2v2.2h-2.2zM551.9 874.9h2.2v2.2h-2.2zM556.9 874.9h2.2v2.2h-2.2z" fill="#93cc98"/><path d="M1123.9 874.9h2.2v2.2h-2.2zM1128.9 874.9h2.2v2.2h-2.2zM1134.9 874.9h2.2v2.2h-2.2zM1139.9 874.9h2.2v2.2h-2.2zM1145.9 874.9h2.2v2.2h-2.2zM1150.9 874.9h2.2v2.2h-2.2zM1156.9 874.9h2.2v2.2h-2.2zM1161.9 874.9h2.2v2.2h-2.2zM1167.9 874.9h2.2v2.2h-2.2zM1172.9 874.9h2.2v2.2h-2.2z" fill="#858aa1"/><path d="M336.9 881.9h2.2v2.2h-2.2zM336.9 886.9h2.2v2.2h-2.2zM336.9 891.9h2.2v2.2h-2.2zM336.9 896.9h2.2v2.2h-2.2zM342.9 881.9h2.2v2.2h-2.2zM342.9 886.9h2.2v2.2h-2.2zM342.9 891.9h2.2v2.2h-2.2zM347.9 881.9h2.2v2.2h-2.2zM347.9 886.9h2.2v2.2h-2.2zM347.9 891.9h2.2v2.2h-2.2zM342.9 896.9h2.2v2.2h-2.2zM347.9 896.9h2.2v2.2h-2.2zM353.9 881.9h2.2v2.2h-2.2zM353.9 886.9h2.2v2.2h-2.2zM353.9 891.9h2.2v2.2h-2.2zM358.9 881.9h2.2v2.2h-2.2zM358.9 886.9h2.2v2.2h-2.2zM358.9 891.9h2.2v2.2h-2.2zM353.9 896.9h2.2v2.2h-2.2zM358.9 896.9h2.2v2.2h-2.2zM364.9 881.9h2.2v2.2h-2.2zM364.9 886.9h2.2v2.2h-2.2zM364.9 891.9h2.2v2.2h-2.2zM369.9 881.9h2.2v2.2h-2.2zM369.9 886.9h2.2v2.2h-2.2zM369.9 891.9h2.2v2.2h-2.2zM364.9 896.9h2.2v2.2h-2.2zM369.9 896.9h2.2v2.2h-2.2zM375.9 881.9h2.2v2.2h-2.2zM375.9 886.9h2.2v2.2h-2.2zM375.9 891.9h2.2v2.2h-2.2zM380.9 881.9h2.2v2.2h-2.2zM380.9 886.9h2.2v2.2h-2.2zM380.9 891.9h2.2v2.2h-2.2zM375.9 896.9h2.2v2.2h-2.2zM380.9 896.9h2.2v2.2h-2.2zM386.9 881.9h2.2v2.2h-2.2zM386.9 886.9h2.2v2.2h-2.2zM386.9 891.9h2.2v2.2h-2.2zM391.9 881.9h2.2v2.2h-2.2zM391.9 886.9h2.2v2.2h-2.2zM391.9 891.9h2.2v2.2h-2.2zM386.9 896.9h2.2v2.2h-2.2zM391.9 896.9h2.2v2.2h-2.2zM397.9 881.9h2.2v2.2h-2.2zM397.9 886.9h2.2v2.2h-2.2zM397.9 891.9h2.2v2.2h-2.2zM402.9 881.9h2.2v2.2h-2.2zM402.9 886.9h2.2v2.2h-2.2zM402.9 891.9h2.2v2.2h-2.2zM397.9 896.9h2.2v2.2h-2.2zM402.9 896.9h2.2v2.2h-2.2zM408.9 881.9h2.2v2.2h-2.2zM408.9 886.9h2.2v2.2h-2.2zM408.9 891.9h2.2v2.2h-2.2zM413.9 881.9h2.2v2.2h-2.2zM413.9 886.9h2.2v2.2h-2.2zM413.9 891.9h2.2v2.2h-2.2zM408.9 896.9h2.2v2.2h-2.2zM413.9 896.9h2.2v2.2h-2.2zM419.9 881.9h2.2v2.2h-2.2zM419.9 886.9h2.2v2.2h-2.2zM419.9 891.9h2.2v2.2h-2.2zM424.9 881.9h2.2v2.2h-2.2zM424.9 886.9h2.2v2.2h-2.2zM424.9 891.9h2.2v2.2h-2.2zM419.9 896.9h2.2v2.2h-2.2zM424.9 896.9h2.2v2.2h-2.2zM430.9 881.9h2.2v2.2h-2.2zM430.9 886.9h2.2v2.2h-2.2zM430.9 891.9h2.2v2.2h-2.2zM435.9 881.9h2.2v2.2h-2.2zM435.9 886.9h2.2v2.2h-2.2zM435.9 891.9h2.2v2.2h-2.2zM430.9 896.9h2.2v2.2h-2.2zM435.9 896.9h2.2v2.2h-2.2zM441.9 881.9h2.2v2.2h-2.2zM441.9 886.9h2.2v2.2h-2.2zM441.9 891.9h2.2v2.2h-2.2zM446.9 881.9h2.2v2.2h-2.2zM446.9 886.9h2.2v2.2h-2.2zM446.9 891.9h2.2v2.2h-2.2zM441.9 896.9h2.2v2.2h-2.2zM446.9 896.9h2.2v2.2h-2.2zM452.9 881.9h2.2v2.2h-2.2zM452.9 886.9h2.2v2.2h-2.2zM452.9 891.9h2.2v2.2h-2.2zM457.9 881.9h2.2v2.2h-2.2zM457.9 886.9h2.2v2.2h-2.2zM457.9 891.9h2.2v2.2h-2.2zM452.9 896.9h2.2v2.2h-2.2zM457.9 896.9h2.2v2.2h-2.2zM463.9 881.9h2.2v2.2h-2.2zM463.9 886.9h2.2v2.2h-2.2zM463.9 891.9h2.2v2.2h-2.2zM468.9 881.9h2.2v2.2h-2.2zM468.9 886.9h2.2v2.2h-2.2zM468.9 891.9h2.2v2.2h-2.2zM463.9 896.9h2.2v2.2h-2.2zM468.9 896.9h2.2v2.2h-2.2zM474.9 881.9h2.2v2.2h-2.2zM474.9 886.9h2.2v2.2h-2.2zM474.9 891.9h2.2v2.2h-2.2zM479.9 881.9h2.2v2.2h-2.2zM479.9 886.9h2.2v2.2h-2.2zM479.9 891.9h2.2v2.2h-2.2zM474.9 896.9h2.2v2.2h-2.2zM479.9 896.9h2.2v2.2h-2.2zM485.9 881.9h2.2v2.2h-2.2zM485.9 886.9h2.2v2.2h-2.2zM485.9 891.9h2.2v2.2h-2.2zM490.9 881.9h2.2v2.2h-2.2zM490.9 886.9h2.2v2.2h-2.2zM490.9 891.9h2.2v2.2h-2.2zM485.9 896.9h2.2v2.2h-2.2zM490.9 896.9h2.2v2.2h-2.2zM496.9 881.9h2.2v2.2h-2.2zM496.9 886.9h2.2v2.2h-2.2zM496.9 891.9h2.2v2.2h-2.2zM501.9 881.9h2.2v2.2h-2.2zM501.9 886.9h2.2v2.2h-2.2zM501.9 891.9h2.2v2.2h-2.2zM496.9 896.9h2.2v2.2h-2.2zM501.9 896.9h2.2v2.2h-2.2zM507.9 881.9h2.2v2.2h-2.2zM507.9 886.9h2.2v2.2h-2.2zM507.9 891.9h2.2v2.2h-2.2zM512.9 881.9h2.2v2.2h-2.2zM512.9 886.9h2.2v2.2h-2.2zM512.9 891.9h2.2v2.2h-2.2zM507.9 896.9h2.2v2.2h-2.2zM512.9 896.9h2.2v2.2h-2.2zM518.9 881.9h2.2v2.2h-2.2zM518.9 886.9h2.2v2.2h-2.2zM518.9 891.9h2.2v2.2h-2.2zM523.9 881.9h2.2v2.2h-2.2zM523.9 886.9h2.2v2.2h-2.2zM523.9 891.9h2.2v2.2h-2.2zM518.9 896.9h2.2v2.2h-2.2zM523.9 896.9h2.2v2.2h-2.2zM529.9 881.9h2.2v2.2h-2.2zM529.9 886.9h2.2v2.2h-2.2zM529.9 891.9h2.2v2.2h-2.2zM534.9 881.9h2.2v2.2h-2.2zM534.9 886.9h2.2v2.2h-2.2zM534.9 891.9h2.2v2.2h-2.2zM529.9 896.9h2.2v2.2h-2.2zM534.9 896.9h2.2v2.2h-2.2zM540.9 881.9h2.2v2.2h-2.2zM540.9 886.9h2.2v2.2h-2.2zM540.9 891.9h2.2v2.2h-2.2zM545.9 881.9h2.2v2.2h-2.2zM545.9 886.9h2.2v2.2h-2.2zM545.9 891.9h2.2v2.2h-2.2zM540.9 896.9h2.2v2.2h-2.2zM545.9 896.9h2.2v2.2h-2.2zM551.9 881.9h2.2v2.2h-2.2zM551.9 886.9h2.2v2.2h-2.2zM551.9 891.9h2.2v2.2h-2.2zM556.9 881.9h2.2v2.2h-2.2zM556.9 886.9h2.2v2.2h-2.2zM556.9 891.9h2.2v2.2h-2.2zM551.9 896.9h2.2v2.2h-2.2zM556.9 896.9h2.2v2.2h-2.2z" fill="#82c8b9"/><path d="M1123.9 896.9h2.2v2.2h-2.2zM1128.9 896.9h2.2v2.2h-2.2zM1134.9 896.9h2.2v2.2h-2.2zM1139.9 896.9h2.2v2.2h-2.2zM1145.9 896.9h2.2v2.2h-2.2zM1150.9 896.9h2.2v2.2h-2.2zM1156.9 896.9h2.2v2.2h-2.2zM1161.9 896.9h2.2v2.2h-2.2zM1167.9 896.9h2.2v2.2h-2.2zM1172.9 896.9h2.2v2.2h-2.2z" fill="#8389a0"/><path d="M336.9 903.9h2.2v2.2h-2.2zM336.9 908.9h2.2v2.2h-2.2zM336.9 913.9h2.2v2.2h-2.2zM336.9 918.9h2.2v2.2h-2.2zM342.9 903.9h2.2v2.2h-2.2zM342.9 908.9h2.2v2.2h-2.2zM342.9 913.9h2.2v2.2h-2.2zM347.9 903.9h2.2v2.2h-2.2zM347.9 908.9h2.2v2.2h-2.2zM347.9 913.9h2.2v2.2h-2.2zM342.9 918.9h2.2v2.2h-2.2zM347.9 918.9h2.2v2.2h-2.2zM353.9 903.9h2.2v2.2h-2.2zM353.9 908.9h2.2v2.2h-2.2zM353.9 913.9h2.2v2.2h-2.2zM358.9 903.9h2.2v2.2h-2.2zM358.9 908.9h2.2v2.2h-2.2zM358.9 913.9h2.2v2.2h-2.2zM353.9 918.9h2.2v2.2h-2.2zM358.9 918.9h2.2v2.2h-2.2zM364.9 903.9h2.2v2.2h-2.2zM364.9 908.9h2.2v2.2h-2.2zM364.9 913.9h2.2v2.2h-2.2zM369.9 903.9h2.2v2.2h-2.2zM369.9 908.9h2.2v2.2h-2.2zM369.9 913.9h2.2v2.2h-2.2zM364.9 918.9h2.2v2.2h-2.2zM369.9 918.9h2.2v2.2h-2.2zM375.9 903.9h2.2v2.2h-2.2zM375.9 908.9h2.2v2.2h-2.2zM375.9 913.9h2.2v2.2h-2.2zM380.9 903.9h2.2v2.2h-2.2zM380.9 908.9h2.2v2.2h-2.2zM380.9 913.9h2.2v2.2h-2.2zM375.9 918.9h2.2v2.2h-2.2zM380.9 918.9h2.2v2.2h-2.2zM386.9 903.9h2.2v2.2h-2.2zM386.9 908.9h2.2v2.2h-2.2zM386.9 913.9h2.2v2.2h-2.2zM391.9 903.9h2.2v2.2h-2.2zM391.9 908.9h2.2v2.2h-2.2zM391.9 913.9h2.2v2.2h-2.2zM386.9 918.9h2.2v2.2h-2.2zM391.9 918.9h2.2v2.2h-2.2zM397.9 903.9h2.2v2.2h-2.2zM397.9 908.9h2.2v2.2h-2.2zM397.9 913.9h2.2v2.2h-2.2zM402.9 903.9h2.2v2.2h-2.2zM402.9 908.9h2.2v2.2h-2.2zM402.9 913.9h2.2v2.2h-2.2zM397.9 918.9h2.2v2.2h-2.2zM402.9 918.9h2.2v2.2h-2.2zM408.9 903.9h2.2v2.2h-2.2zM408.9 908.9h2.2v2.2h-2.2zM408.9 913.9h2.2v2.2h-2.2zM413.9 903.9h2.2v2.2h-2.2zM413.9 908.9h2.2v2.2h-2.2zM413.9 913.9h2.2v2.2h-2.2zM408.9 918.9h2.2v2.2h-2.2zM413.9 918.9h2.2v2.2h-2.2zM419.9 903.9h2.2v2.2h-2.2zM419.9 908.9h2.2v2.2h-2.2zM419.9 913.9h2.2v2.2h-2.2zM424.9 903.9h2.2v2.2h-2.2zM424.9 908.9h2.2v2.2h-2.2zM424.9 913.9h2.2v2.2h-2.2zM419.9 918.9h2.2v2.2h-2.2zM424.9 918.9h2.2v2.2h-2.2zM430.9 903.9h2.2v2.2h-2.2zM430.9 908.9h2.2v2.2h-2.2zM430.9 913.9h2.2v2.2h-2.2zM435.9 903.9h2.2v2.2h-2.2zM435.9 908.9h2.2v2.2h-2.2zM435.9 913.9h2.2v2.2h-2.2zM430.9 918.9h2.2v2.2h-2.2zM435.9 918.9h2.2v2.2h-2.2zM441.9 903.9h2.2v2.2h-2.2zM441.9 908.9h2.2v2.2h-2.2zM441.9 913.9h2.2v2.2h-2.2zM446.9 903.9h2.2v2.2h-2.2zM446.9 908.9h2.2v2.2h-2.2zM446.9 913.9h2.2v2.2h-2.2zM441.9 918.9h2.2v2.2h-2.2zM446.9 918.9h2.2v2.2h-2.2zM452.9 903.9h2.2v2.2h-2.2zM452.9 908.9h2.2v2.2h-2.2zM452.9 913.9h2.2v2.2h-2.2zM457.9 903.9h2.2v2.2h-2.2zM457.9 908.9h2.2v2.2h-2.2zM457.9 913.9h2.2v2.2h-2.2zM452.9 918.9h2.2v2.2h-2.2zM457.9 918.9h2.2v2.2h-2.2zM463.9 903.9h2.2v2.2h-2.2zM463.9 908.9h2.2v2.2h-2.2zM463.9 913.9h2.2v2.2h-2.2zM468.9 903.9h2.2v2.2h-2.2zM468.9 908.9h2.2v2.2h-2.2zM468.9 913.9h2.2v2.2h-2.2zM463.9 918.9h2.2v2.2h-2.2zM468.9 918.9h2.2v2.2h-2.2zM474.9 903.9h2.2v2.2h-2.2zM474.9 908.9h2.2v2.2h-2.2zM474.9 913.9h2.2v2.2h-2.2zM479.9 903.9h2.2v2.2h-2.2zM479.9 908.9h2.2v2.2h-2.2zM479.9 913.9h2.2v2.2h-2.2zM474.9 918.9h2.2v2.2h-2.2zM479.9 918.9h2.2v2.2h-2.2zM485.9 903.9h2.2v2.2h-2.2zM485.9 908.9h2.2v2.2h-2.2zM485.9 913.9h2.2v2.2h-2.2zM490.9 903.9h2.2v2.2h-2.2zM490.9 908.9h2.2v2.2h-2.2zM490.9 913.9h2.2v2.2h-2.2zM485.9 918.9h2.2v2.2h-2.2zM490.9 918.9h2.2v2.2h-2.2zM496.9 903.9h2.2v2.2h-2.2zM496.9 908.9h2.2v2.2h-2.2zM496.9 913.9h2.2v2.2h-2.2zM501.9 903.9h2.2v2.2h-2.2zM501.9 908.9h2.2v2.2h-2.2zM501.9 913.9h2.2v2.2h-2.2zM496.9 918.9h2.2v2.2h-2.2zM501.9 918.9h2.2v2.2h-2.2zM507.9 903.9h2.2v2.2h-2.2zM507.9 908.9h2.2v2.2h-2.2zM507.9 913.9h2.2v2.2h-2.2zM512.9 903.9h2.2v2.2h-2.2zM512.9 908.9h2.2v2.2h-2.2zM512.9 913.9h2.2v2.2h-2.2zM507.9 918.9h2.2v2.2h-2.2zM512.9 918.9h2.2v2.2h-2.2zM518.9 903.9h2.2v2.2h-2.2zM518.9 908.9h2.2v2.2h-2.2zM518.9 913.9h2.2v2.2h-2.2zM523.9 903.9h2.2v2.2h-2.2zM523.9 908.9h2.2v2.2h-2.2zM523.9 913.9h2.2v2.2h-2.2zM518.9 918.9h2.2v2.2h-2.2zM523.9 918.9h2.2v2.2h-2.2zM529.9 903.9h2.2v2.2h-2.2zM529.9 908.9h2.2v2.2h-2.2zM529.9 913.9h2.2v2.2h-2.2zM534.9 903.9h2.2v2.2h-2.2zM534.9 908.9h2.2v2.2h-2.2zM534.9 913.9h2.2v2.2h-2.2zM529.9 918.9h2.2v2.2h-2.2zM534.9 918.9h2.2v2.2h-2.2zM540.9 903.9h2.2v2.2h-2.2zM540.9 908.9h2.2v2.2h-2.2zM540.9 913.9h2.2v2.2h-2.2zM545.9 903.9h2.2v2.2h-2.2zM545.9 908.9h2.2v2.2h-2.2zM545.9 913.9h2.2v2.2h-2.2zM540.9 918.9h2.2v2.2h-2.2zM545.9 918.9h2.2v2.2h-2.2zM551.9 903.9h2.2v2.2h-2.2zM551.9 908.9h2.2v2.2h-2.2zM551.9 913.9h2.2v2.2h-2.2zM556.9 903.9h2.2v2.2h-2.2zM556.9 908.9h2.2v2.2h-2.2zM556.9 913.9h2.2v2.2h-2.2zM551.9 918.9h2.2v2.2h-2.2zM556.9 918.9h2.2v2.2h-2.2z" fill="#82c8be"/><path d="M1123.9 918.9h2.2v2.2h-2.2zM1128.9 918.9h2.2v2.2h-2.2zM1134.9 918.9h2.2v2.2h-2.2zM1139.9 918.9h2.2v2.2h-2.2zM1145.9 918.9h2.2v2.2h-2.2zM1150.9 918.9h2.2v2.2h-2.2zM1156.9 918.9h2.2v2.2h-2.2zM1161.9 918.9h2.2v2.2h-2.2zM1167.9 918.9h2.2v2.2h-2.2zM1172.9 918.9h2.2v2.2h-2.2z" fill="#82889e"/><path d="M1123.9 940.9h2.2v2.2h-2.2zM1128.9 940.9h2.2v2.2h-2.2zM1134.9 940.9h2.2v2.2h-2.2zM1139.9 940.9h2.2v2.2h-2.2zM1145.9 940.9h2.2v2.2h-2.2zM1150.9 940.9h2.2v2.2h-2.2zM1156.9 940.9h2.2v2.2h-2.2zM1161.9 940.9h2.2v2.2h-2.2zM1167.9 940.9h2.2v2.2h-2.2zM1172.9 940.9h2.2v2.2h-2.2z" fill="#81869d"/><path d="M1123.9 962.9h2.2v2.2h-2.2zM1128.9 962.9h2.2v2.2h-2.2zM1134.9 962.9h2.2v2.2h-2.2zM1139.9 962.9h2.2v2.2h-2.2zM1145.9 962.9h2.2v2.2h-2.2zM1150.9 962.9h2.2v2.2h-2.2zM1156.9 962.9h2.2v2.2h-2.2zM1161.9 962.9h2.2v2.2h-2.2zM1167.9 962.9h2.2v2.2h-2.2zM1172.9 962.9h2.2v2.2h-2.2z" fill="#7f859c"/><path d="M1123.9 984.9h2.2v2.2h-2.2zM1128.9 984.9h2.2v2.2h-2.2zM1134.9 984.9h2.2v2.2h-2.2zM1139.9 984.9h2.2v2.2h-2.2zM1145.9 984.9h2.2v2.2h-2.2zM1150.9 984.9h2.2v2.2h-2.2zM1156.9 984.9h2.2v2.2h-2.2zM1161.9 984.9h2.2v2.2h-2.2zM1167.9 984.9h2.2v2.2h-2.2zM1172.9 984.9h2.2v2.2h-2.2z" fill="#7e849a"/><path d="M1123.9 1006.9h2.2v2.2h-2.2zM1128.9 1006.9h2.2v2.2h-2.2zM1134.9 1006.9h2.2v2.2h-2.2zM1139.9 1006.9h2.2v2.2h-2.2zM1145.9 1006.9h2.2v2.2h-2.2zM1150.9 1006.9h2.2v2.2h-2.2zM1156.9 1006.9h2.2v2.2h-2.2zM1161.9 1006.9h2.2v2.2h-2.2zM1167.9 1006.9h2.2v2.2h-2.2zM1172.9 1006.9h2.2v2.2h-2.2z" fill="#7d8299"/><path d="M1123.9 1028.9h2.2v2.2h-2.2zM1128.9 1028.9h2.2v2.2h-2.2zM1134.9 1028.9h2.2v2.2h-2.2zM1139.9 1028.9h2.2v2.2h-2.2zM1145.9 1028.9h2.2v2.2h-2.2zM1150.9 1028.9h2.2v2.2h-2.2zM1156.9 1028.9h2.2v2.2h-2.2zM1161.9 1028.9h2.2v2.2h-2.2zM1167.9 1028.9h2.2v2.2h-2.2zM1172.9 1028.9h2.2v2.2h-2.2z" fill="#7c8198"/><path d="M1123.9 1050.9h2.2v2.2h-2.2zM1128.9 1050.9h2.2v2.2h-2.2zM1134.9 1050.9h2.2v2.2h-2.2zM1139.9 1050.9h2.2v2.2h-2.2zM1145.9 1050.9h2.2v2.2h-2.2zM1150.9 1050.9h2.2v2.2h-2.2zM1156.9 1050.9h2.2v2.2h-2.2zM1161.9 1050.9h2.2v2.2h-2.2zM1167.9 1050.9h2.2v2.2h-2.2zM1172.9 1050.9h2.2v2.2h-2.2z" fill="#7a8096"/><path d="M1123.9 1072.9h2.2v2.2h-2.2zM1128.9 1072.9h2.2v2.2h-2.2zM1134.9 1072.9h2.2v2.2h-2.2zM1139.9 1072.9h2.2v2.2h-2.2zM1145.9 1072.9h2.2v2.2h-2.2zM1150.9 1072.9h2.2v2.2h-2.2zM1156.9 1072.9h2.2v2.2h-2.2zM1161.9 1072.9h2.2v2.2h-2.2zM1167.9 1072.9h2.2v2.2h-2.2zM1172.9 1072.9h2.2v2.2h-2.2z" fill="#797e95"/><path d="M1123.9 1094.9h2.2v2.2h-2.2zM1128.9 1094.9h2.2v2.2h-2.2zM1134.9 1094.9h2.2v2.2h-2.2zM1139.9 1094.9h2.2v2.2h-2.2zM1145.9 1094.9h2.2v2.2h-2.2zM1150.9 1094.9h2.2v2.2h-2.2zM1156.9 1094.9h2.2v2.2h-2.2zM1161.9 1094.9h2.2v2.2h-2.2zM1167.9 1094.9h2.2v2.2h-2.2zM1172.9 1094.9h2.2v2.2h-2.2z" fill="#787d94"/><path d="M1123.9 1116.9h2.2v2.2h-2.2zM1128.9 1116.9h2.2v2.2h-2.2zM1134.9 1116.9h2.2v2.2h-2.2zM1139.9 1116.9h2.2v2.2h-2.2zM1145.9 1116.9h2.2v2.2h-2.2zM1150.9 1116.9h2.2v2.2h-2.2zM1156.9 1116.9h2.2v2.2h-2.2zM1161.9 1116.9h2.2v2.2h-2.2zM1167.9 1116.9h2.2v2.2h-2.2zM1172.9 1116.9h2.2v2.2h-2.2z" fill="#777c92"/><path d="M1123.9 1138.9h2.2v2.2h-2.2zM1128.9 1138.9h2.2v2.2h-2.2zM1134.9 1138.9h2.2v2.2h-2.2zM1139.9 1138.9h2.2v2.2h-2.2zM1145.9 1138.9h2.2v2.2h-2.2zM1150.9 1138.9h2.2v2.2h-2.2zM1156.9 1138.9h2.2v2.2h-2.2zM1161.9 1138.9h2.2v2.2h-2.2zM1167.9 1138.9h2.2v2.2h-2.2zM1172.9 1138.9h2.2v2.2h-2.2z" fill="#757b91"/><path d="M39.9 1160.9h2.2v2.2h-2.2zM45.9 1160.9h2.2v2.2h-2.2zM50.9 1160.9h2.2v2.2h-2.2zM56.9 1160.9h2.2v2.2h-2.2zM61.9 1160.9h2.2v2.2h-2.2zM67.9 1160.9h2.2v2.2h-2.2zM72.9 1160.9h2.2v2.2h-2.2zM78.9 1160.9h2.2v2.2h-2.2zM83.9 1160.9h2.2v2.2h-2.2zM89.9 1160.9h2.2v2.2h-2.2zM94.9 1160.9h2.2v2.2h-2.2zM100.9 1160.9h2.2v2.2h-2.2zM105.9 1160.9h2.2v2.2h-2.2zM111.9 1160.9h2.2v2.2h-2.2zM116.9 1160.9h2.2v2.2h-2.2zM122.9 1160.9h2.2v2.2h-2.2zM127.9 1160.9h2.2v2.2h-2.2zM133.9 1160.9h2.2v2.2h-2.2zM138.9 1160.9h2.2v2.2h-2.2zM144.9 1160.9h2.2v2.2h-2.2zM149.9 1160.9h2.2v2.2h-2.2zM155.9 1160.9h2.2v2.2h-2.2zM160.9 1160.9h2.2v2.2h-2.2zM166.9 1160.9h2.2v2.2h-2.2zM171.9 1160.9h2.2v2.2h-2.2zM177.9 1160.9h2.2v2.2h-2.2zM182.9 1160.9h2.2v2.2h-2.2zM188.9 1160.9h2.2v2.2h-2.2zM193.9 1160.9h2.2v2.2h-2.2zM199.9 1160.9h2.2v2.2h-2.2zM204.9 1160.9h2.2v2.2h-2.2zM210.9 1160.9h2.2v2.2h-2.2zM215.9 1160.9h2.2v2.2h-2.2zM221.9 1160.9h2.2v2.2h-2.2zM226.9 1160.9h2.2v2.2h-2.2zM232.9 1160.9h2.2v2.2h-2.2zM237.9 1160.9h2.2v2.2h-2.2zM243.9 1160.9h2.2v2.2h-2.2zM248.9 1160.9h2.2v2.2h-2.2zM254.9 1160.9h2.2v2.2h-2.2zM259.9 1160.9h2.2v2.2h-2.2zM39.9 1167.9h2.2v2.2h-2.2zM45.9 1167.9h2.2v2.2h-2.2zM50.9 1167.9h2.2v2.2h-2.2zM56.9 1167.9h2.2v2.2h-2.2zM61.9 1167.9h2.2v2.2h-2.2zM67.9 1167.9h2.2v2.2h-2.2zM72.9 1167.9h2.2v2.2h-2.2zM78.9 1167.9h2.2v2.2h-2.2zM83.9 1167.9h2.2v2.2h-2.2zM89.9 1167.9h2.2v2.2h-2.2zM94.9 1167.9h2.2v2.2h-2.2zM100.9 1167.9h2.2v2.2h-2.2zM105.9 1167.9h2.2v2.2h-2.2zM111.9 1167.9h2.2v2.2h-2.2zM116.9 1167.9h2.2v2.2h-2.2zM122.9 1167.9h2.2v2.2h-2.2zM127.9 1167.9h2.2v2.2h-2.2zM133.9 1167.9h2.2v2.2h-2.2zM138.9 1167.9h2.2v2.2h-2.2zM144.9 1167.9h2.2v2.2h-2.2zM149.9 1167.9h2.2v2.2h-2.2zM155.9 1167.9h2.2v2.2h-2.2zM160.9 1167.9h2.2v2.2h-2.2zM166.9 1167.9h2.2v2.2h-2.2zM171.9 1167.9h2.2v2.2h-2.2zM177.9 1167.9h2.2v2.2h-2.2zM182.9 1167.9h2.2v2.2h-2.2zM188.9 1167.9h2.2v2.2h-2.2zM193.9 1167.9h2.2v2.2h-2.2zM199.9 1167.9h2.2v2.2h-2.2zM204.9 1167.9h2.2v2.2h-2.2zM210.9 1167.9h2.2v2.2h-2.2zM215.9 1167.9h2.2v2.2h-2.2zM221.9 1167.9h2.2v2.2h-2.2zM226.9 1167.9h2.2v2.2h-2.2zM232.9 1167.9h2.2v2.2h-2.2zM237.9 1167.9h2.2v2.2h-2.2zM243.9 1167.9h2.2v2.2h-2.2zM248.9 1167.9h2.2v2.2h-2.2zM254.9 1167.9h2.2v2.2h-2.2zM259.9 1167.9h2.2v2.2h-2.2z" fill="#a5adce"/><path d="M1123.9 1160.9h2.2v2.2h-2.2zM1128.9 1160.9h2.2v2.2h-2.2zM1134.9 1160.9h2.2v2.2h-2.2zM1139.9 1160.9h2.2v2.2h-2.2zM1145.9 1160.9h2.2v2.2h-2.2zM1150.9 1160.9h2.2v2.2h-2.2zM1156.9 1160.9h2.2v2.2h-2.2zM1161.9 1160.9h2.2v2.2h-2.2zM1167.9 1160.9h2.2v2.2h-2.2zM1172.9 1160.9h2.2v2.2h-2.2z" fill="#747990"/><path d="M1123.9 1182.9h2.2v2.2h-2.2zM1128.9 1182.9h2.2v2.2h-2.2zM1134.9 1182.9h2.2v2.2h-2.2zM1139.9 1182.9h2.2v2.2h-2.2zM1145.9 1182.9h2.2v2.2h-2.2zM1150.9 1182.9h2.2v2.2h-2.2zM1156.9 1182.9h2.2v2.2h-2.2zM1161.9 1182.9h2.2v2.2h-2.2zM1167.9 1182.9h2.2v2.2h-2.2zM1172.9 1182.9h2.2v2.2h-2.2z" fill="#73788e"/><path d="M1123.9 1204.9h2.2v2.2h-2.2zM1128.9 1204.9h2.2v2.2h-2.2zM1134.9 1204.9h2.2v2.2h-2.2zM1139.9 1204.9h2.2v2.2h-2.2zM1145.9 1204.9h2.2v2.2h-2.2zM1150.9 1204.9h2.2v2.2h-2.2zM1156.9 1204.9h2.2v2.2h-2.2zM1161.9 1204.9h2.2v2.2h-2.2zM1167.9 1204.9h2.2v2.2h-2.2zM1172.9 1204.9h2.2v2.2h-2.2z" fill="#72778d"/><path d="M1123.9 1226.9h2.2v2.2h-2.2zM1128.9 1226.9h2.2v2.2h-2.2zM1134.9 1226.9h2.2v2.2h-2.2zM1139.9 1226.9h2.2v2.2h-2.2zM1145.9 1226.9h2.2v2.2h-2.2zM1150.9 1226.9h2.2v2.2h-2.2zM1156.9 1226.9h2.2v2.2h-2.2zM1161.9 1226.9h2.2v2.2h-2.2zM1167.9 1226.9h2.2v2.2h-2.2zM1172.9 1226.9h2.2v2.2h-2.2z" fill="#70758c"/><path d="M1123.9 1248.9h2.2v2.2h-2.2zM1128.9 1248.9h2.2v2.2h-2.2zM1134.9 1248.9h2.2v2.2h-2.2zM1139.9 1248.9h2.2v2.2h-2.2zM1145.9 1248.9h2.2v2.2h-2.2zM1150.9 1248.9h2.2v2.2h-2.2zM1156.9 1248.9h2.2v2.2h-2.2zM1161.9 1248.9h2.2v2.2h-2.2zM1167.9 1248.9h2.2v2.2h-2.2zM1172.9 1248.9h2.2v2.2h-2.2z" fill="#6f748a"/><path d="M1123.9 1270.9h2.2v2.2h-2.2zM1128.9 1270.9h2.2v2.2h-2.2zM1134.9 1270.9h2.2v2.2h-2.2zM1139.9 1270.9h2.2v2.2h-2.2zM1145.9 1270.9h2.2v2.2h-2.2zM1150.9 1270.9h2.2v2.2h-2.2zM1156.9 1270.9h2.2v2.2h-2.2zM1161.9 1270.9h2.2v2.2h-2.2zM1167.9 1270.9h2.2v2.2h-2.2zM1172.9 1270.9h2.2v2.2h-2.2z" fill="#6e7389"/><path d="M1123.9 1292.9h2.2v2.2h-2.2zM1128.9 1292.9h2.2v2.2h-2.2zM1134.9 1292.9h2.2v2.2h-2.2zM1139.9 1292.9h2.2v2.2h-2.2zM1145.9 1292.9h2.2v2.2h-2.2zM1150.9 1292.9h2.2v2.2h-2.2zM1156.9 1292.9h2.2v2.2h-2.2zM1161.9 1292.9h2.2v2.2h-2.2zM1167.9 1292.9h2.2v2.2h-2.2zM1172.9 1292.9h2.2v2.2h-2.2z" fill="#6d7288"/><path d="M1123.9 1314.9h2.2v2.2h-2.2zM1128.9 1314.9h2.2v2.2h-2.2zM1134.9 1314.9h2.2v2.2h-2.2zM1139.9 1314.9h2.2v2.2h-2.2zM1145.9 1314.9h2.2v2.2h-2.2zM1150.9 1314.9h2.2v2.2h-2.2zM1156.9 1314.9h2.2v2.2h-2.2zM1161.9 1314.9h2.2v2.2h-2.2zM1167.9 1314.9h2.2v2.2h-2.2zM1172.9 1314.9h2.2v2.2h-2.2z" fill="#6b7086"/><path d="M1123.9 1336.9h2.2v2.2h-2.2zM1128.9 1336.9h2.2v2.2h-2.2zM1134.9 1336.9h2.2v2.2h-2.2zM1139.9 1336.9h2.2v2.2h-2.2zM1145.9 1336.9h2.2v2.2h-2.2zM1150.9 1336.9h2.2v2.2h-2.2zM1156.9 1336.9h2.2v2.2h-2.2zM1161.9 1336.9h2.2v2.2h-2.2zM1167.9 1336.9h2.2v2.2h-2.2zM1172.9 1336.9h2.2v2.2h-2.2z" fill="#6a6f85"/><path d="M595.5 117h8v8h-8z" fill="#a9bcc4"/><path d="M606.5 117h8v8h-8zM617.5 117h8v8h-8zM628.5 117h8v8h-8zM639.5 117h8v8h-8zM650.5 117h8v8h-8zM661.5 117h8v8h-8zM672.5 117h8v8h-8zM683.5 117h8v8h-8zM694.5 117h8v8h-8zM705.5 117h8v8h-8zM716.5 117h8v8h-8zM727.5 117h8v8h-8zM738.5 117h8v8h-8zM749.5 117h8v8h-8zM760.5 117h8v8h-8zM771.5 117h8v8h-8zM782.5 117h8v8h-8zM793.5 117h8v8h-8zM804.5 117h8v8h-8zM815.5 117h8v8h-8zM826.5 117h8v8h-8zM837.5 117h8v8h-8zM848.5 117h8v8h-8zM859.5 117h8v8h-8zM870.5 117h8v8h-8zM881.5 117h8v8h-8zM892.5 117h8v8h-8zM903.5 117h8v8h-8zM914.5 117h8v8h-8zM925.5 117h8v8h-8zM936.5 117h8v8h-8zM947.5 117h8v8h-8zM958.5 117h8v8h-8zM969.5 117h8v8h-8zM980.5 117h8v8h-8zM991.5 117h8v8h-8zM1002.5 117h8v8h-8zM1013.5 117h8v8h-8zM1024.5 117h8v8h-8zM1035.5 117h8v8h-8zM1046.5 117h8v8h-8z" fill="#4f5368"/><path d="M276 1106h9l-4.5 7.5zM276 1128h9l-4.5 7.5zM276 1150h9l-4.5 7.5zM276 1201.5h9l-4.5 -7.5zM276 1223.5h9l-4.5 -7.5zM276 1245.5h9l-4.5 -7.5z" fill="#aab2d2"/></svg>
<div class="t" style="left:9px;top:55.5px">   <span style="color:#d4d4d4">¹cpu</span>    <span style="color:#aab2d2">m</span><span style="color:#d4d4d4">enu</span>  <span style="color:#aab2d2">p</span><span style="color:#d4d4d4">reset</span> <span style="color:#d4d4d4">*</span>                             <span style="color:#d4d4d4">13:02:40</span>                                        <span style="color:#d4d4d4">-</span> <span style="color:#d4d4d4">2000ms</span> <span style="color:#d4d4d4">+</span></div>
<div class="t" style="left:9px;top:143.5px">                                                    <span style="color:#d4d4d4">Ryzen</span> <span style="color:#d4d4d4">9</span> <span style="color:#d4d4d4">5900HS</span>                                       <span style="color:#d4d4d4">2.3</span> <span style="color:#d4d4d4">GHz</span></div>
<div class="t" style="left:9px;top:165.5px">                                                  <span style="color:#d4d4d4">CPU</span>                                              <span style="color:#74b8d6">2</span><span style="color:#aab2d2">%</span>        <span style="color:#aab2d2">64°C</span></div>
<div class="t" style="left:9px;top:187.5px">                                                  <span style="color:#d4d4d4">C</span><span style="color:#aab2d2">0</span>                           <span style="color:#74b8d6">2</span><span style="color:#aab2d2">%</span> <span style="color:#d4d4d4">C</span><span style="color:#aab2d2">8</span>                           <span style="color:#74b8d6">1</span><span style="color:#aab2d2">%</span></div>
<div class="t" style="left:9px;top:209.5px">                                                  <span style="color:#d4d4d4">C</span><span style="color:#aab2d2">1</span>                           <span style="color:#74b8d6">0</span><span style="color:#aab2d2">%</span> <span style="color:#d4d4d4">C</span><span style="color:#aab2d2">9</span>                           <span style="color:#74b8d6">0</span><span style="color:#aab2d2">%</span></div>
<div class="t" style="left:9px;top:231.5px">                                                  <span style="color:#d4d4d4">C</span><span style="color:#aab2d2">2</span>                           <span style="color:#74b8d6">1</span><span style="color:#aab2d2">%</span> <span style="color:#d4d4d4">C</span><span style="color:#aab2d2">10</span>                          <span style="color:#74b8d6">4</span><span style="color:#aab2d2">%</span></div>
<div class="t" style="left:9px;top:253.5px">                                                  <span style="color:#d4d4d4">C</span><span style="color:#aab2d2">3</span>                           <span style="color:#74b8d6">0</span><span style="color:#aab2d2">%</span> <span style="color:#d4d4d4">C</span><span style="color:#aab2d2">11</span>                          <span style="color:#74b8d6">3</span><span style="color:#aab2d2">%</span></div>
<div class="t" style="left:9px;top:275.5px">                                                  <span style="color:#d4d4d4">C</span><span style="color:#aab2d2">4</span>                           <span style="color:#74b8d6">7</span><span style="color:#aab2d2">%</span> <span style="color:#d4d4d4">C</span><span style="color:#aab2d2">12</span>                          <span style="color:#74b8d6">1</span><span style="color:#aab2d2">%</span></div>
<div class="t" style="left:9px;top:297.5px">                                                  <span style="color:#d4d4d4">C</span><span style="color:#aab2d2">5</span>                           <span style="color:#74b8d6">2</span><span style="color:#aab2d2">%</span> <span style="color:#d4d4d4">C</span><span style="color:#aab2d2">13</span>                          <span style="color:#74b8d6">1</span><span style="color:#aab2d2">%</span></div>
<div class="t" style="left:9px;top:319.5px">                                                  <span style="color:#d4d4d4">C</span><span style="color:#aab2d2">6</span>                           <span style="color:#74b8d6">0</span><span style="color:#aab2d2">%</span> <span style="color:#d4d4d4">C</span><span style="color:#aab2d2">14</span>                          <span style="color:#74b8d6">1</span><span style="color:#aab2d2">%</span></div>
<div class="t" style="left:9px;top:341.5px">                                                  <span style="color:#d4d4d4">C</span><span style="color:#aab2d2">7</span>                           <span style="color:#74b8d6">1</span><span style="color:#aab2d2">%</span> <span style="color:#d4d4d4">C</span><span style="color:#aab2d2">15</span>                          <span style="color:#74b8d6">0</span><span style="color:#aab2d2">%</span></div>
<div class="t" style="left:9px;top:363.5px">                                                                                  <span style="color:#d4d4d4">Load</span> <span style="color:#d4d4d4">AVG:</span>   <span style="color:#aab2d2">1.11</span>   <span style="color:#aab2d2">1.00</span>   <span style="color:#aab2d2">0.87</span></div>
<div class="t" style="left:9px;top:451.5px">  <span style="color:#e0c4bb">up</span> <span style="color:#e0c4bb">00:23:25</span></div>
<div class="t" style="left:9px;top:495.5px">   <span style="color:#d4d4d4">²mem</span>                                     <span style="color:#8caaee">disks</span>      <span style="color:#d4d4d4">⁴proc</span>  <span style="color:#8caaee">f</span><span style="color:#aab2d2">ilter</span></div>
<div class="t" style="left:9px;top:517.5px">  <span style="color:#d4d4d4">Total:</span>                                     <span style="color:#d4d4d4">24</span> <span style="color:#d4d4d4">GB</span>       <span style="color:#d4d4d4">Pid:</span> <span style="color:#d4d4d4">Program:</span></div>
<div class="t" style="left:9px;top:539.5px">  <span style="color:#aab2d2">Used:</span>                                    <span style="color:#aab2d2">2.10</span> <span style="color:#aab2d2">GB</span>        <span style="color:#b0b5d2">788</span> <span style="color:#84b9d5">Hyprland</span>                                       <span style="color:#9fb0cc">0.0</span></div>
<div class="t" style="left:9px;top:561.5px">    <span style="color:#aab2d2">9%</span>                                                   <span style="color:#afb4d1">5482</span> <span style="color:#84b8d4">missionc</span>                                       <span style="color:#9eafcb">0.0</span></div>
<div class="t" style="left:9px;top:583.5px">                                                         <span style="color:#aeb3d0">5490</span> <span style="color:#83b7d2">missionc</span>                                       <span style="color:#9daeca">0.0</span></div>
<div class="t" style="left:9px;top:605.5px">                                                         <span style="color:#adb2cf">7127</span> <span style="color:#83b5d1">waybar</span>                                         <span style="color:#9dadc9">0.0</span></div>
<div class="t" style="left:9px;top:627.5px">                                                         <span style="color:#acb1ce">5440</span> <span style="color:#83b4d0">nvtop</span>                                          <span style="color:#9cadc8">0.0</span></div>
<div class="t" style="left:9px;top:649.5px">  <span style="color:#aab2d2">Available:</span>                                 <span style="color:#aab2d2">22</span> <span style="color:#aab2d2">GB</span>       <span style="color:#abb0cc">5403</span> <span style="color:#83b3cf">foot</span>                                           <span style="color:#9bacc7">0.0</span></div>
<div class="t" style="left:9px;top:671.5px">   <span style="color:#aab2d2">91%</span>                                                    <span style="color:#aaafcb">677</span> <span style="color:#82b2cd">gfx_low</span>                                        <span style="color:#9aabc6">0.0</span></div>
<div class="t" style="left:9px;top:693.5px">                                                         <span style="color:#a9aeca">5431</span> <span style="color:#82b1cc">kworker/</span>                                       <span style="color:#99aac5">0.0</span></div>
<div class="t" style="left:9px;top:715.5px">                                                         <span style="color:#a8adc9">4229</span> <span style="color:#82b0cb">kworker/</span>                                       <span style="color:#98a9c4">0.0</span></div>
<div class="t" style="left:9px;top:737.5px">                                                         <span style="color:#a7acc8">1134</span> <span style="color:#82aec9">swww-dae</span>                                       <span style="color:#98a8c3">0.0</span></div>
<div class="t" style="left:9px;top:759.5px">  <span style="color:#aab2d2">Cached:</span>                                   <span style="color:#aab2d2">820</span> <span style="color:#aab2d2">MB</span>        <span style="color:#a6abc7">493</span> <span style="color:#81adc8">kworker/</span>                                       <span style="color:#97a8c3">0.0</span></div>
<div class="t" style="left:9px;top:781.5px">    <span style="color:#aab2d2">3%</span>                                                     <span style="color:#a5aac6">17</span> <span style="color:#81acc7">rcu_pree</span>                                       <span style="color:#96a7c2">0.0</span></div>
<div class="t" style="left:9px;top:803.5px">                                                          <span style="color:#a4a9c5">494</span> <span style="color:#81abc6">kworker/</span>                                       <span style="color:#95a6c1">0.0</span></div>
<div class="t" style="left:9px;top:825.5px">                                                         <span style="color:#a3a8c4">5405</span> <span style="color:#81aac4">btop</span>                                           <span style="color:#94a5c0">0.0</span></div>
<div class="t" style="left:9px;top:847.5px">                                                         <span style="color:#a2a7c3">5438</span> <span style="color:#80a8c3">foot</span>                                           <span style="color:#94a4bf">0.0</span></div>
<div class="t" style="left:9px;top:869.5px">  <span style="color:#aab2d2">Free:</span>                                      <span style="color:#aab2d2">21</span> <span style="color:#aab2d2">GB</span>        <span style="color:#a1a6c1">118</span> <span style="color:#80a7c2">kworker/</span>                                       <span style="color:#93a3be">0.0</span></div>
<div class="t" style="left:9px;top:891.5px">   <span style="color:#aab2d2">89%</span>                                                   <span style="color:#a0a5c0">1155</span> <span style="color:#80a6c0">blueman-</span>                                       <span style="color:#92a3bd">0.0</span></div>
<div class="t" style="left:9px;top:913.5px">                                                         <span style="color:#9fa4bf">3338</span> <span style="color:#80a5bf">kworker/</span>                                       <span style="color:#91a2bc">0.0</span></div>
<div class="t" style="left:9px;top:935.5px">                                                          <span style="color:#9ea3be">324</span> <span style="color:#7fa4be">kworker/</span>                                       <span style="color:#90a1bb">0.0</span></div>
<div class="t" style="left:9px;top:957.5px">                                                           <span style="color:#9da2bd">38</span> <span style="color:#7fa2bc">kworker/</span>                                       <span style="color:#90a0ba">0.0</span></div>
<div class="t" style="left:9px;top:979.5px">                                                          <span style="color:#9ca1bc">628</span> <span style="color:#7fa1bb">nvidia-p</span>                                       <span style="color:#8f9fb9">0.0</span></div>
<div class="t" style="left:9px;top:1001.5px">                                                          <span style="color:#9ba0bb">880</span> <span style="color:#7ea0ba">rog-cont</span>                                       <span style="color:#8e9eb8">0.0</span></div>
<div class="t" style="left:9px;top:1023.5px">   <span style="color:#d4d4d4">³net</span>             <span style="color:#d4d4d4">sync</span>  <span style="color:#d4d4d4">auto</span>  <span style="color:#8caaee">z</span><span style="color:#aab2d2">ero</span>  <span style="color:#d4d4d4">&lt;b</span> <span style="color:#d4d4d4">enp3s0</span> <span style="color:#d4d4d4">n&gt;</span>        <span style="color:#9a9fba">625</span> <span style="color:#7e9fb9">NetworkM</span>                                       <span style="color:#8d9db7">0.0</span></div>
<div class="t" style="left:9px;top:1045.5px"> <span style="color:#e0c4bb">10K</span>                                                      <span style="color:#999eb9">720</span> <span style="color:#7e9eb7">Xorg</span>                                           <span style="color:#8c9db6">0.0</span></div>
<div class="t" style="left:9px;top:1067.5px">                                                            <span style="color:#989db7">1</span> <span style="color:#7e9db6">systemd</span>  <span style="color:#9297af">/sbin/init</span>         <span style="color:#9297af">root</span>    <span style="color:#9297af">13M</span>        <span style="color:#8b9cb5">0.0</span></div>
<div class="t" style="left:9px;top:1089.5px">                                                          <span style="color:#979cb6">695</span> <span style="color:#7d9bb5">asusd</span>    <span style="color:#9196ae">/usr/bin/asusd</span>     <span style="color:#9196ae">root</span>    <span style="color:#9196ae">13M</span>        <span style="color:#8b9bb4">0.0</span></div>
<div class="t" style="left:9px;top:1111.5px">                                                          <span style="color:#969bb5">575</span> <span style="color:#7d9ab3">dbus-dae</span> <span style="color:#9095ad">/usr/bin/dbus-daem</span> <span style="color:#9095ad">dbus</span>   <span style="color:#9095ad">6.0M</span>        <span style="color:#8a9ab3">0.0</span></div>
<div class="t" style="left:9px;top:1133.5px">                           <span style="color:#d4d4d4">download</span>                      <span style="color:#959ab4">5513</span> <span style="color:#7d99b2">Xwayland</span> <span style="color:#8f94ac">Xwayland</span> <span style="color:#8f94ac">:1</span> <span style="color:#8f94ac">-rootl</span> <span style="color:#8f94ac">ja</span>     <span style="color:#8f94ac">201M</span>        <span style="color:#8999b2">0.0</span></div>
<div class="t" style="left:9px;top:1155.5px">                           <span style="color:#aab2d2">30</span> <span style="color:#aab2d2">Byte/s</span>   <span style="color:#aab2d2">(240</span> <span style="color:#aab2d2">bitps)</span>        <span style="color:#9499b3">877</span> <span style="color:#7d98b1">nm-apple</span> <span style="color:#8e93ab">nm-applet</span> <span style="color:#8e93ab">--indica</span> <span style="color:#8e93ab">ja</span>      <span style="color:#8e93ab">75M</span>        <span style="color:#8898b1">0.0</span></div>
<div class="t" style="left:9px;top:1177.5px">                           <span style="color:#aab2d2">Top:</span>        <span style="color:#aab2d2">(2.58</span> <span style="color:#aab2d2">Kbps)</span>        <span style="color:#9398b2">874</span> <span style="color:#7c97b0">blueman-</span> <span style="color:#8d93a9">/usr/bin/python</span> <span style="color:#8d93a9">/u</span> <span style="color:#8d93a9">ja</span>      <span style="color:#8d93a9">76M</span>        <span style="color:#8798b1">0.0</span></div>
<div class="t" style="left:9px;top:1199.5px">                           <span style="color:#aab2d2">Total:</span>            <span style="color:#aab2d2">82</span> <span style="color:#aab2d2">KB</span>        <span style="color:#9297b1">883</span> <span style="color:#7c95ae">AppAutoC</span> <span style="color:#8c92a8">/bin/bash</span> <span style="color:#8c92a8">/home/ja</span> <span style="color:#8c92a8">ja</span>     <span style="color:#8c92a8">3.9M</span>        <span style="color:#8797b0">0.0</span></div>
<div class="t" style="left:9px;top:1221.5px">                                                         <span style="color:#9196b0">5201</span> <span style="color:#7c94ad">xfconfd</span>  <span style="color:#8b91a7">/usr/lib/xfce4/xfc</span> <span style="color:#8b91a7">ja</span>     <span style="color:#8b91a7">7.9M</span>        <span style="color:#8696af">0.0</span></div>
<div class="t" style="left:9px;top:1243.5px">                           <span style="color:#aab2d2">0</span> <span style="color:#aab2d2">Byte/s</span>      <span style="color:#aab2d2">(0</span> <span style="color:#aab2d2">bitps)</span>        <span style="color:#9095af">463</span> <span style="color:#7c93ac">irq/79-A</span>                    <span style="color:#8b90a6">root</span>     <span style="color:#8b90a6">0B</span>        <span style="color:#8595ae">0.0</span></div>
<div class="t" style="left:9px;top:1265.5px">                           <span style="color:#aab2d2">Top:</span>        <span style="color:#aab2d2">(1.42</span> <span style="color:#aab2d2">Kbps)</span>        <span style="color:#8f94ae">208</span> <span style="color:#7b92aa">nv_queue</span>                    <span style="color:#8a8fa5">root</span>     <span style="color:#8a8fa5">0B</span>        <span style="color:#8494ad">0.0</span></div>
<div class="t" style="left:9px;top:1287.5px">                           <span style="color:#aab2d2">Total:</span>            <span style="color:#aab2d2">13</span> <span style="color:#aab2d2">KB</span>        <span style="color:#8e93ac">108</span> <span style="color:#7b91a9">migratio</span>                    <span style="color:#898ea4">root</span>     <span style="color:#898ea4">0B</span>        <span style="color:#8393ac">0.0</span></div>
<div class="t" style="left:9px;top:1309.5px">                           <span style="color:#d4d4d4">upload</span>                        <span style="color:#8d92ab">5846</span> <span style="color:#7b90a8">tumblerd</span> <span style="color:#888da3">/usr/lib/tumbler-1</span> <span style="color:#888da3">ja</span>      <span style="color:#888da3">22M</span>        <span style="color:#8293ab">0.0</span></div>
<div class="t" style="left:9px;top:1331.5px">                                                          <span style="color:#8c91aa">319</span> <span style="color:#7b8ea7">systemd-</span> <span style="color:#878ca2">/usr/lib/systemd/s</span> <span style="color:#878ca2">root</span>    <span style="color:#878ca2">15M</span>        <span style="color:#8292aa">0.0</span></div>
<div class="t" style="left:9px;top:1353.5px">                                                           <span style="color:#8b90a9">90</span> <span style="color:#7a8da5">migratio</span>                    <span style="color:#868ba1">root</span>     <span style="color:#868ba1">0B</span>        <span style="color:#8191a9">0.0</span></div>
<div class="t" style="left:9px;top:1375.5px"> <span style="color:#e0c4bb">10K</span>                                                       <span style="color:#8a8fa8">96</span> <span style="color:#7a8ca4">migratio</span>                    <span style="color:#858aa0">root</span>     <span style="color:#858aa0">0B</span>        <span style="color:#8090a8">0.0</span></div>
<div class="t" style="left:9px;top:1397.5px">                                                        <span style="color:#d4d4d4">select</span>    <span style="color:#a0a6b8">info</span>    <span style="color:#a0a6b8">terminate</span>  <span style="color:#a0a6b8">kill</span>  <span style="color:#a0a6b8">signals</span>          <span style="color:#d4d4d4">0/339</span></div>
<div class="win" style="left:1284px;top:54px;width:1267px;height:1378px;background:#1a1b1b"><svg style="position:absolute;left:0;top:0" width="1265" height="1376"><defs><filter id="bl" x="-20%" y="-20%" width="140%" height="140%"><feGaussianBlur stdDeviation="7"/></filter><filter id="bl2"><feGaussianBlur stdDeviation="3"/></filter></defs><g filter="url(#bl)"><path d="M 1035 1045 L 1107 1045 L 1107 1385 L 1035 1385 Z" fill="#1f1f1f"/><path d="M 420 1385 L 423 1025 L 437 975 L 595 1082 Q 715 1100 835 1073 L 940 1027 Q 980 977 1007 981 Q 1027 1020 1035 1145 L 1037 1385 Z" fill="#0e0f11"/><path d="M 170 1385 Q 175 1280 275 1267 Q 380 1270 390 1385 Z" fill="#101114"/><path d="M 1107 1385 Q 1115 1300 1185 1290 L 1275 1290 L 1275 1385 Z" fill="#0f1012"/></g><g filter="url(#bl2)" fill="none" stroke-width="6"><circle cx="606" cy="1310" r="50" stroke="#35341f"/><circle cx="850" cy="1310" r="50" stroke="#35341f"/></g></svg></div>
<div style="position:absolute;left:1285px;top:1221px;width:341px;height:22px;background:#1e9c0d"></div>
<div style="position:absolute;left:1626px;top:1221px;width:154px;height:22px;background:#12a1a5"></div>
<div style="position:absolute;left:1780px;top:1221px;width:770px;height:22px;background:#1e9c0d"></div>
<div style="position:absolute;left:1285px;top:1243px;width:1265px;height:22px;background:#12a1a5"></div>
<div style="position:absolute;left:1307px;top:1397px;width:88px;height:22px;background:#12a1a5"></div>
<div style="position:absolute;left:1417px;top:1397px;width:88px;height:22px;background:#12a1a5"></div>
<div style="position:absolute;left:1527px;top:1397px;width:88px;height:22px;background:#12a1a5"></div>
<div style="position:absolute;left:1648px;top:1397px;width:88px;height:22px;background:#12a1a5"></div>
<div style="position:absolute;left:1769px;top:1397px;width:781px;height:22px;background:#12a1a5"></div>
<svg style="position:absolute;left:1285px;top:55px" width="1265" height="1364"><path d="M38.5 164.5H44M38.5 164.5V176M44 164.5H55M55 164.5H66M66 164.5H77M77 164.5H88M88 164.5H99M99 164.5H110M110 164.5H121M121 164.5H132M132 164.5H143M143 164.5H154M154 164.5H165M165 164.5H176M176 164.5H187M187 164.5H198M198 164.5H209M209 164.5H220M220 164.5H231M231 164.5H242M242 164.5H253M253 164.5H264M264 164.5H275M275 164.5H286M286 164.5H297M297 164.5H308M308 164.5H319M319 164.5H330M330 164.5H341M341 164.5H352M352 164.5H363M363 164.5H374M374 164.5H385M385 164.5H396M396 164.5H407M407 164.5H418M418 164.5H429M429 164.5H440M440 164.5H451M451 164.5H462M462 164.5H473M473 164.5H484M484 164.5H495M495 164.5H506M506 164.5H517M517 164.5H528M528 164.5H539M539 164.5H550M550 164.5H561M561 164.5H572M572 164.5H583M583 164.5H594M594 164.5H605M605 164.5H616M616 164.5H627M627 164.5H638M638 164.5H649M649 164.5H660M660 164.5H671M671 164.5H682M682 164.5H693M693 164.5H704M704 164.5H715M715 164.5H726M726 164.5H737M737 164.5H748M748 164.5H759M759 164.5H770M770 164.5H781M781 164.5H792M792 164.5H803M803 164.5H814M814 164.5H825M825 164.5H836M836 164.5H847M847 164.5H858M858 164.5H869M869 164.5H880M880 164.5H891M891 164.5H902M902 164.5H913M913 164.5H924M924 164.5H935M935 164.5H946M946 164.5H957M957 164.5H968M968 164.5H979M979 164.5H990M990 164.5H1001M1001 164.5H1012M1012 164.5H1023M1023 164.5H1034M1034 164.5H1045M1045 164.5H1056M1056 164.5H1067M1067 164.5H1078M1078 164.5H1089M1089 164.5H1100M1100 164.5H1111M1111 164.5H1122M1122 164.5H1133M1133 164.5H1144M1144 164.5H1155M1155 164.5H1166M1166 164.5H1177M1177 164.5H1188M1188 164.5H1199M1199 164.5H1210M1210 164.5H1221M1221 164.5H1232M1232 164.5H1243M1243 164.5H1254M1254 164.5H1259.5M1259.5 164.5V176M38.5 176V198M1259.5 176V198M38.5 198V220M1259.5 198V220M38.5 220V242M1259.5 220V242M38.5 242V264M1259.5 242V264M38.5 264V286M1259.5 264V286M38.5 286V308M1259.5 286V308M38.5 308V330M1259.5 308V330M38.5 330V352M1259.5 330V352M38.5 352V374M1259.5 352V374M38.5 374V396M1259.5 374V396M38.5 396V418M1259.5 396V418M38.5 418V440M1259.5 418V440M38.5 440V462M1259.5 440V462M38.5 462V484M1259.5 462V484M38.5 484V506M1259.5 484V506M38.5 506V528M1259.5 506V528M38.5 528V550M1259.5 528V550M38.5 550V572M1259.5 550V572M38.5 572V594M1259.5 572V594M38.5 594V616M1259.5 594V616M38.5 616V638M1259.5 616V638M38.5 648.5H44M38.5 638V648.5M77 648.5H88M88 648.5H99M99 648.5H110M110 648.5H121M121 648.5H132M132 648.5H143M143 648.5H154M154 648.5H165M165 648.5H176M176 648.5H187M187 648.5H198M198 648.5H209M209 648.5H220M220 648.5H231M231 648.5H242M242 648.5H253M253 648.5H264M264 648.5H275M275 648.5H286M286 648.5H297M297 648.5H308M308 648.5H319M319 648.5H330M363 648.5H374M374 648.5H385M385 648.5H396M396 648.5H407M407 648.5H418M418 648.5H429M429 648.5H440M440 648.5H451M451 648.5H462M462 648.5H473M473 648.5H484M484 648.5H495M495 648.5H506M506 648.5H517M517 648.5H528M528 648.5H539M539 648.5H550M550 648.5H561M561 648.5H572M572 648.5H583M583 648.5H594M594 648.5H605M605 648.5H616M616 648.5H627M627 648.5H638M671 648.5H682M682 648.5H693M693 648.5H704M704 648.5H715M715 648.5H726M726 648.5H737M737 648.5H748M748 648.5H759M759 648.5H770M770 648.5H781M781 648.5H792M792 648.5H803M803 648.5H814M814 648.5H825M825 648.5H836M836 648.5H847M847 648.5H858M858 648.5H869M869 648.5H880M880 648.5H891M891 648.5H902M902 648.5H913M913 648.5H924M924 648.5H935M968 648.5H979M979 648.5H990M990 648.5H1001M1001 648.5H1012M1012 648.5H1023M1023 648.5H1034M1034 648.5H1045M1045 648.5H1056M1056 648.5H1067M1067 648.5H1078M1078 648.5H1089M1089 648.5H1100M1100 648.5H1111M1111 648.5H1122M1122 648.5H1133M1133 648.5H1144M1144 648.5H1155M1155 648.5H1166M1166 648.5H1177M1177 648.5H1188M1188 648.5H1199M1199 648.5H1210M1210 648.5H1221M1221 648.5H1232M1254 648.5H1259.5M1259.5 638V648.5M38.5 670.5H44M38.5 670.5V682M44 670.5H55M55 670.5H66M66 670.5H77M77 670.5H88M88 670.5H99M99 670.5H110M110 670.5H121M121 670.5H132M132 670.5H143M143 670.5H154M154 670.5H165M165 670.5H176M176 670.5H187M187 670.5H198M198 670.5H209M209 670.5H220M220 670.5H231M231 670.5H242M242 670.5H253M253 670.5H264M264 670.5H275M275 670.5H286M286 670.5H297M297 670.5H308M308 670.5H319M319 670.5H330M330 670.5H341M341 670.5H352M352 670.5H363M363 670.5H374M374 670.5H385M385 670.5H396M396 670.5H407M407 670.5H418M418 670.5H429M429 670.5H440M440 670.5H451M451 670.5H462M462 670.5H473M473 670.5H484M484 670.5H495M495 670.5H506M506 670.5H517M517 670.5H528M528 670.5H539M539 670.5H550M550 670.5H561M561 670.5H572M572 670.5H583M583 670.5H594M594 670.5H605M605 670.5H616M616 670.5H627M627 670.5H638M638 670.5H649M649 670.5H660M660 670.5H671M671 670.5H682M682 670.5H693M693 670.5H704M704 670.5H715M715 670.5H726M726 670.5H737M737 670.5H748M748 670.5H759M759 670.5H770M770 670.5H781M781 670.5H792M792 670.5H803M803 670.5H814M814 670.5H825M825 670.5H836M836 670.5H847M847 670.5H858M858 670.5H869M869 670.5H880M880 670.5H891M891 670.5H902M902 670.5H913M913 670.5H924M924 670.5H935M935 670.5H946M946 670.5H957M957 670.5H968M968 670.5H979M979 670.5H990M990 670.5H1001M1001 670.5H1012M1012 670.5H1023M1023 670.5H1034M1034 670.5H1045M1045 670.5H1056M1056 670.5H1067M1067 670.5H1078M1078 670.5H1089M1089 670.5H1100M1100 670.5H1111M1111 670.5H1122M1122 670.5H1133M1133 670.5H1144M1144 670.5H1155M1155 670.5H1166M1166 670.5H1177M1177 670.5H1188M1188 670.5H1199M1199 670.5H1210M1210 670.5H1221M1221 670.5H1232M1232 670.5H1243M1243 670.5H1254M1254 670.5H1259.5M1259.5 670.5V682M38.5 682V704M1259.5 682V704M38.5 704V726M1259.5 704V726M38.5 726V748M1259.5 726V748M38.5 748V770M1259.5 748V770M38.5 770V792M1259.5 770V792M38.5 792V814M1259.5 792V814M38.5 814V836M1259.5 814V836M38.5 836V858M1259.5 836V858M38.5 858V880M1259.5 858V880M38.5 880V902M1259.5 880V902M38.5 902V924M1259.5 902V924M38.5 924V946M1259.5 924V946M38.5 946V968M1259.5 946V968M38.5 968V990M1259.5 968V990M38.5 990V1012M1259.5 990V1012M38.5 1012V1034M1259.5 1012V1034M38.5 1034V1056M1259.5 1034V1056M38.5 1056V1078M1259.5 1056V1078M38.5 1078V1100M1259.5 1078V1100M38.5 1100V1122M1259.5 1100V1122M38.5 1122V1144M1259.5 1122V1144M38.5 1154.5H44M38.5 1144V1154.5M77 1154.5H88M88 1154.5H99M99 1154.5H110M110 1154.5H121M121 1154.5H132M132 1154.5H143M143 1154.5H154M154 1154.5H165M165 1154.5H176M176 1154.5H187M187 1154.5H198M198 1154.5H209M209 1154.5H220M220 1154.5H231M231 1154.5H242M242 1154.5H253M253 1154.5H264M264 1154.5H275M275 1154.5H286M286 1154.5H297M297 1154.5H308M308 1154.5H319M319 1154.5H330M363 1154.5H374M374 1154.5H385M385 1154.5H396M396 1154.5H407M407 1154.5H418M418 1154.5H429M429 1154.5H440M440 1154.5H451M451 1154.5H462M462 1154.5H473M473 1154.5H484M484 1154.5H495M495 1154.5H506M506 1154.5H517M517 1154.5H528M528 1154.5H539M539 1154.5H550M550 1154.5H561M561 1154.5H572M572 1154.5H583M583 1154.5H594M594 1154.5H605M605 1154.5H616M616 1154.5H627M627 1154.5H638M671 1154.5H682M682 1154.5H693M693 1154.5H704M704 1154.5H715M715 1154.5H726M726 1154.5H737M737 1154.5H748M748 1154.5H759M759 1154.5H770M770 1154.5H781M781 1154.5H792M792 1154.5H803M803 1154.5H814M814 1154.5H825M825 1154.5H836M836 1154.5H847M847 1154.5H858M858 1154.5H869M869 1154.5H880M880 1154.5H891M891 1154.5H902M902 1154.5H913M913 1154.5H924M924 1154.5H935M968 1154.5H979M979 1154.5H990M990 1154.5H1001M1001 1154.5H1012M1012 1154.5H1023M1023 1154.5H1034M1034 1154.5H1045M1045 1154.5H1056M1056 1154.5H1067M1067 1154.5H1078M1078 1154.5H1089M1089 1154.5H1100M1100 1154.5H1111M1111 1154.5H1122M1122 1154.5H1133M1133 1154.5H1144M1144 1154.5H1155M1155 1154.5H1166M1166 1154.5H1177M1177 1154.5H1188M1188 1154.5H1199M1199 1154.5H1210M1210 1154.5H1221M1221 1154.5H1232M1254 1154.5H1259.5M1259.5 1144V1154.5" stroke="#bdbdbd" stroke-width="1.1" fill="none"/><path d="M44 626.5H55M66 626.5H77M88 626.5H99M110 626.5H121M132 626.5H143M154 626.5H165M176 626.5H187M198 626.5H209M220 626.5H231M242 626.5H253M264 626.5H275M286 626.5H297M308 626.5H319M330 626.5H341M352 626.5H363M374 626.5H385M396 626.5H407M418 626.5H429M440 626.5H451M462 626.5H473M484 626.5H495M506 626.5H517M528 626.5H539M550 626.5H561M572 626.5H583M594 626.5H605M616 626.5H627M638 626.5H649M660 626.5H671M682 626.5H693M704 626.5H715M726 626.5H737M748 626.5H759M770 626.5H781M792 626.5H803M814 626.5H825M836 626.5H847M858 626.5H869M880 626.5H891M902 626.5H913M924 626.5H935M946 626.5H957M968 626.5H979M990 626.5H1001M1012 626.5H1023M1034 626.5H1045M1056 626.5H1067M1078 626.5H1089M1100 626.5H1111M1122 626.5H1133M1144 626.5H1155M1166 626.5H1177M1188 626.5H1199M1210 626.5H1221M1232 626.5H1243M1149.5 802.5H1155M1149.5 802.5V814M1155 802.5H1166M1166 802.5H1177M1177 802.5H1188M1188 802.5H1193.5M1193.5 802.5V814M1215.5 802.5H1221M1215.5 802.5V814M1221 802.5H1232M1232 802.5H1237.5M1237.5 802.5V814M44 824.5H55M55 824.5H66M66 824.5H77M77 824.5H88M88 824.5H99M99 824.5H110M110 824.5H121M121 824.5H132M132 824.5H143M143 824.5H154M154 824.5H165M165 824.5H176M176 824.5H187M187 824.5H198M198 824.5H209M209 824.5H220M220 824.5H231M231 824.5H242M242 824.5H253M253 824.5H264M264 824.5H275M275 824.5H286M286 824.5H297M297 824.5H308M308 824.5H319M319 824.5H330M330 824.5H341M341 824.5H352M352 824.5H363M363 824.5H374M374 824.5H385M385 824.5H396M396 824.5H407M407 824.5H418M418 824.5H429M429 824.5H440M440 824.5H451M451 824.5H462M462 824.5H473M473 824.5H484M484 824.5H495M495 824.5H506M506 824.5H517M517 824.5H528M528 824.5H533.5M533.5 824.5V836M577.5 824.5H583M577.5 824.5V836M583 824.5H594M594 824.5H599.5M599.5 824.5V836M687.5 824.5H693M687.5 824.5V836M693 824.5H704M704 824.5H715M715 824.5H726M726 824.5H737M737 824.5H748M748 824.5H759M759 824.5H770M770 824.5H781M781 824.5H792M792 824.5H797.5M797.5 824.5V836M863.5 824.5H869M863.5 824.5V836M869 824.5H880M880 824.5H885.5M885.5 824.5V836M929.5 824.5H935M929.5 824.5V836M935 824.5H946M946 824.5H957M957 824.5H968M968 824.5H973.5M973.5 824.5V836M1039.5 824.5H1045M1039.5 824.5V836M1045 824.5H1056M1056 824.5H1067M1067 824.5H1078M1078 824.5H1089M1089 824.5H1100M1100 824.5H1111M1111 824.5H1122M1122 824.5H1133M1133 824.5H1144M1144 824.5H1149.5M1149.5 814V824.5M1193.5 824.5H1199M1193.5 814V824.5M1199 824.5H1210M1210 824.5H1215.5M1215.5 814V824.5M1237.5 824.5H1243M1237.5 814V824.5M1243 824.5H1254M533.5 846.5H539M533.5 836V846.5M539 846.5H550M550 846.5H561M561 846.5H572M572 846.5H577.5M577.5 836V846.5M599.5 846.5H605M599.5 836V846.5M605 846.5H616M616 846.5H627M627 846.5H638M638 846.5H643.5M643.5 846.5V858M665.5 846.5H671M665.5 846.5V858M671 846.5H682M682 846.5H687.5M687.5 836V846.5M797.5 836V858M819.5 846.5H825M819.5 846.5V858M836 846.5H847M858 846.5H863.5M863.5 836V846.5M885.5 846.5H891M885.5 836V846.5M891 846.5H902M902 846.5H913M913 846.5H924M924 846.5H929.5M929.5 836V846.5M973.5 846.5H979M973.5 836V846.5M979 846.5H990M990 846.5H1001M1012 846.5H1023M1034 846.5H1039.5M1039.5 836V846.5M643.5 868.5H649M643.5 858V868.5M649 868.5H660M660 868.5H665.5M665.5 858V868.5M797.5 868.5H803M797.5 858V868.5M803 868.5H814M814 868.5H819.5M819.5 858V868.5" stroke="#17a6ab" stroke-width="1.1" fill="none"/><path d="M55 626.5H66M77 626.5H88M99 626.5H110M121 626.5H132M143 626.5H154M165 626.5H176M187 626.5H198M209 626.5H220M231 626.5H242M253 626.5H264M275 626.5H286M297 626.5H308M319 626.5H330M341 626.5H352M363 626.5H374M385 626.5H396M407 626.5H418M429 626.5H440M451 626.5H462M473 626.5H484M495 626.5H506M517 626.5H528M539 626.5H550M561 626.5H572M583 626.5H594M605 626.5H616M627 626.5H638M649 626.5H660M671 626.5H682M693 626.5H704M715 626.5H726M737 626.5H748M759 626.5H770M781 626.5H792M803 626.5H814M825 626.5H836M847 626.5H858M869 626.5H880M891 626.5H902M913 626.5H924M935 626.5H946M957 626.5H968M979 626.5H990M1001 626.5H1012M1023 626.5H1034M1045 626.5H1056M1067 626.5H1078M1089 626.5H1100M1111 626.5H1122M1133 626.5H1144M1155 626.5H1166M1177 626.5H1188M1199 626.5H1210M1221 626.5H1232M1243 626.5H1254M44 692.5H55M55 692.5H66M66 692.5H77M77 692.5H88M88 692.5H99M99 692.5H110M110 692.5H121M121 692.5H132M132 692.5H143M143 692.5H154M154 692.5H165M165 692.5H176M176 692.5H187M187 692.5H198M198 692.5H209M209 692.5H220M220 692.5H231M231 692.5H242M242 692.5H253M253 692.5H264M264 692.5H275M275 692.5H286M286 692.5H297M297 692.5H308M308 692.5H319M319 692.5H330M330 692.5H341M341 692.5H352M352 692.5H363M363 692.5H374M374 692.5H385M385 692.5H396M396 692.5H407M407 692.5H418M418 692.5H429M429 692.5H440M440 692.5H451M451 692.5H462M462 692.5H473M473 692.5H484M484 692.5H495M495 692.5H506M506 692.5H517M517 692.5H528M528 692.5H539M539 692.5H550M550 692.5H561M561 692.5H572M572 692.5H583M583 692.5H594M594 692.5H605M605 692.5H616M616 692.5H627M627 692.5H638M638 692.5H649M649 692.5H654.5M654.5 692.5V704M676.5 692.5H682M676.5 692.5V704M682 692.5H693M693 692.5H704M704 692.5H715M715 692.5H726M726 692.5H737M737 692.5H748M748 692.5H759M759 692.5H770M770 692.5H781M781 692.5H792M792 692.5H803M803 692.5H814M814 692.5H825M825 692.5H830.5M830.5 692.5V704M852.5 692.5H858M852.5 692.5V704M858 692.5H869M869 692.5H880M880 692.5H891M891 692.5H902M902 692.5H913M913 692.5H924M924 692.5H935M935 692.5H946M946 692.5H957M957 692.5H962.5M962.5 692.5V704M984.5 692.5H990M984.5 692.5V704M990 692.5H1001M1001 692.5H1006.5M1006.5 692.5V704M1028.5 692.5H1034M1028.5 692.5V704M1034 692.5H1045M1045 692.5H1050.5M1050.5 692.5V704M1072.5 692.5H1078M1072.5 692.5V704M1078 692.5H1089M1089 692.5H1100M1100 692.5H1111M1111 692.5H1122M1122 692.5H1133M1133 692.5H1144M1144 692.5H1155M1155 692.5H1166M1166 692.5H1177M1177 692.5H1188M1188 692.5H1199M1199 692.5H1210M1210 692.5H1221M1221 692.5H1232M1232 692.5H1243M1243 692.5H1254M654.5 714.5H660M654.5 704V714.5M660 714.5H671M671 714.5H676.5M676.5 704V714.5M962.5 714.5H968M962.5 704V714.5M968 714.5H979M979 714.5H984.5M984.5 704V714.5M1050.5 714.5H1056M1050.5 704V714.5M1056 714.5H1067M1067 714.5H1072.5M1072.5 704V714.5M825 846.5H836M830.5 836V858M847 846.5H858M852.5 836V858M1001 846.5H1012M1006.5 836V858M1023 846.5H1034M1028.5 836V858" stroke="#bbb014" stroke-width="1.1" fill="none"/></svg>
<div class="t" style="left:1285px;top:55.5px"> <span style="color:#17a6ab">Device</span> <span style="color:#17a6ab">0</span> <span style="color:#c4c4c4">[NVIDIA</span> <span style="color:#c4c4c4">GeForce</span> <span style="color:#c4c4c4">RTX</span> <span style="color:#c4c4c4">3080</span> <span style="color:#c4c4c4">Laptop</span> <span style="color:#c4c4c4">GPU]</span> <span style="color:#17a6ab">PCIe</span> <span style="color:#b53dc9">GEN</span> <span style="color:#c4c4c4">1@</span> <span style="color:#c4c4c4">8x</span> <span style="color:#b53dc9">RX:</span> <span style="color:#c4c4c4">0.000</span> <span style="color:#c4c4c4">KiB/s</span> <span style="color:#b53dc9">TX:</span> <span style="color:#c4c4c4">0.000</span> <span style="color:#c4c4c4">KiB/s</span></div>
<div class="t" style="left:1285px;top:77.5px"> <span style="color:#17a6ab">GPU</span> <span style="color:#c4c4c4">210MHz</span>  <span style="color:#17a6ab">MEM</span> <span style="color:#c4c4c4">405MHz</span>  <span style="color:#17a6ab">TEMP</span>  <span style="color:#26a51b">45</span><span style="color:#c4c4c4">°C</span> <span style="color:#17a6ab">FAN</span> <span style="color:#c4c4c4">N/A%</span> <span style="color:#17a6ab">POW</span>  <span style="color:#c4c4c4">11</span> <span style="color:#c4c4c4">/</span>  <span style="color:#c4c4c4">80</span> <span style="color:#c4c4c4">W</span></div>
<div class="t" style="left:1285px;top:99.5px"> <span style="color:#17a6ab">GPU</span><span style="color:#c4c4c4">[</span>                                       <span style="color:#c4c4c4">0%]</span> <span style="color:#17a6ab">MEM</span><span style="color:#c4c4c4">[</span><span style="color:#26a51b">|</span>                        <span style="color:#c4c4c4">0.227Gi/8.000Gi]</span></div>
<div class="t" style="left:1285px;top:143.5px"> <span style="color:#17a6ab">Device</span> <span style="color:#17a6ab">1</span> <span style="color:#c4c4c4">[AMD</span> <span style="color:#c4c4c4">Radeon</span> <span style="color:#c4c4c4">Graphics]</span>                <span style="color:#17a6ab">Integrated</span> <span style="color:#17a6ab">GPU</span> <span style="color:#b53dc9">RX:</span> <span style="color:#c4c4c4">N/A</span> <span style="color:#b53dc9">TX:</span> <span style="color:#c4c4c4">N/A</span></div>
<div class="t" style="left:1285px;top:165.5px"> <span style="color:#17a6ab">GPU</span> <span style="color:#c4c4c4">2100MHz</span> <span style="color:#17a6ab">MEM</span> <span style="color:#c4c4c4">1600MHz</span> <span style="color:#17a6ab">TEMP</span>  <span style="color:#26a51b">57</span><span style="color:#c4c4c4">°C</span> <span style="color:#17a6ab">CPU-FAN</span>  <span style="color:#17a6ab">POW</span>  <span style="color:#c4c4c4">30</span> <span style="color:#c4c4c4">W</span></div>
<div class="t" style="left:1285px;top:187.5px"> <span style="color:#17a6ab">GPU</span><span style="color:#c4c4c4">[</span><span style="color:#26a51b">|||||||||||||||||||||||||||||</span>         <span style="color:#c4c4c4">71%]</span> <span style="color:#17a6ab">MEM</span><span style="color:#c4c4c4">[</span><span style="color:#26a51b">|||||||||||||||||||||460.016Mi/512.0</span><span style="color:#c4c4c4">00Mi]</span></div>
<div class="t" style="left:1285px;top:231.5px"><span style="color:#c4c4c4">100</span> <span style="color:#17a6ab">GPU0</span> <span style="color:#17a6ab">%</span></div>
<div class="t" style="left:1285px;top:253.5px">    <span style="color:#bbb014">GPU0</span> <span style="color:#bbb014">mem%</span></div>
<div class="t" style="left:1285px;top:341.5px"> <span style="color:#c4c4c4">75</span></div>
<div class="t" style="left:1285px;top:451.5px"> <span style="color:#c4c4c4">50</span></div>
<div class="t" style="left:1285px;top:561.5px"> <span style="color:#c4c4c4">25</span></div>
<div class="t" style="left:1285px;top:671.5px">  <span style="color:#c4c4c4">0</span></div>
<div class="t" style="left:1285px;top:693.5px">    <span style="color:#c4c4c4">55s</span>                       <span style="color:#c4c4c4">41s</span>                         <span style="color:#c4c4c4">27s</span>                        <span style="color:#c4c4c4">13s</span>                        <span style="color:#c4c4c4">0s</span></div>
<div class="t" style="left:1285px;top:737.5px"><span style="color:#c4c4c4">100</span></div>
<div class="t" style="left:1285px;top:759.5px">    <span style="color:#bbb014">GPU1</span> <span style="color:#bbb014">mem%</span></div>
<div class="t" style="left:1285px;top:847.5px"> <span style="color:#c4c4c4">75</span></div>
<div class="t" style="left:1285px;top:957.5px"> <span style="color:#c4c4c4">50</span></div>
<div class="t" style="left:1285px;top:1067.5px"> <span style="color:#c4c4c4">25</span></div>
<div class="t" style="left:1285px;top:1177.5px">  <span style="color:#c4c4c4">0</span></div>
<div class="t" style="left:1285px;top:1199.5px">    <span style="color:#c4c4c4">55s</span>                       <span style="color:#c4c4c4">41s</span>                         <span style="color:#c4c4c4">27s</span>                        <span style="color:#c4c4c4">13s</span>                        <span style="color:#c4c4c4">0s</span></div>
<div class="t" style="left:1285px;top:1221.5px">    <span style="color:#0e0e0e;font-weight:bold">PID</span> <span style="color:#0e0e0e;font-weight:bold">USER</span> <span style="color:#0e0e0e;font-weight:bold">DEV</span>     <span style="color:#0e0e0e;font-weight:bold">TYPE</span>  <span style="color:#0e0e0e;font-weight:bold">GPU</span>        <span style="color:#0e0e0e;font-weight:bold">GPU</span> <span style="color:#0e0e0e;font-weight:bold">MEM</span>    <span style="color:#0e0e0e;font-weight:bold">CPU</span>  <span style="color:#0e0e0e;font-weight:bold">HOST</span> <span style="color:#0e0e0e;font-weight:bold">MEM</span> <span style="color:#0e0e0e;font-weight:bold">Command</span></div>
<div class="t" style="left:1285px;top:1243.5px">   <span style="color:#0e0e0e">5482</span>   <span style="color:#0e0e0e">ja</span>   <span style="color:#0e0e0e">1</span>  <span style="color:#0e0e0e">Graphic</span>   <span style="color:#0e0e0e">0%</span>    <span style="color:#0e0e0e">202MiB</span>  <span style="color:#0e0e0e">40%</span>     <span style="color:#0e0e0e">5%</span>    <span style="color:#0e0e0e">345MiB</span> <span style="color:#0e0e0e">missioncenter</span></div>
<div class="t" style="left:1285px;top:1265.5px">    <span style="color:#c8c8c8">788</span>   <span style="color:#c8c8c8">ja</span>   <span style="color:#c8c8c8">1</span>  <span style="color:#bbb014">Graphic</span>  <span style="color:#c8c8c8">71%</span>    <span style="color:#c8c8c8">187MiB</span>  <span style="color:#c8c8c8">37%</span>     <span style="color:#c8c8c8">0%</span>    <span style="color:#c8c8c8">162MiB</span> <span style="color:#c8c8c8">Hyprland</span></div>
<div class="t" style="left:1285px;top:1287.5px">   <span style="color:#c8c8c8">5513</span>   <span style="color:#c8c8c8">ja</span>   <span style="color:#c8c8c8">1</span>  <span style="color:#bbb014">Graphic</span>   <span style="color:#c8c8c8">0%</span>      <span style="color:#c8c8c8">8MiB</span>   <span style="color:#c8c8c8">2%</span>     <span style="color:#c8c8c8">0%</span>    <span style="color:#c8c8c8">191MiB</span> <span style="color:#c8c8c8">Xwayland</span> <span style="color:#c8c8c8">:1</span> <span style="color:#c8c8c8">-rootless</span> <span style="color:#c8c8c8">-core</span> <span style="color:#c8c8c8">-terminate</span> <span style="color:#c8c8c8">10</span> <span style="color:#c8c8c8">-listenfd</span></div>
<div class="t" style="left:1285px;top:1309.5px">   <span style="color:#c8c8c8">1260</span>   <span style="color:#c8c8c8">ja</span>   <span style="color:#c8c8c8">1</span>  <span style="color:#bbb014">Graphic</span>   <span style="color:#c8c8c8">0%</span>      <span style="color:#c8c8c8">6MiB</span>   <span style="color:#c8c8c8">1%</span>     <span style="color:#c8c8c8">0%</span>     <span style="color:#c8c8c8">39MiB</span> <span style="color:#c8c8c8">/usr/lib/xdg-desktop-portal-hyprland</span></div>
<div class="t" style="left:1285px;top:1331.5px">    <span style="color:#c8c8c8">720</span> <span style="color:#c8c8c8">root</span>   <span style="color:#c8c8c8">0</span>  <span style="color:#bbb014">Graphic</span>   <span style="color:#c8c8c8">0%</span>      <span style="color:#c8c8c8">4MiB</span>   <span style="color:#c8c8c8">0%</span>     <span style="color:#c8c8c8">0%</span>    <span style="color:#c8c8c8">127MiB</span> <span style="color:#c8c8c8">/usr/lib/Xorg</span> <span style="color:#c8c8c8">-nolisten</span> <span style="color:#c8c8c8">tcp</span> <span style="color:#c8c8c8">-background</span> <span style="color:#c8c8c8">none</span> <span style="color:#c8c8c8">-seat</span> <span style="color:#c8c8c8">s</span></div>
<div class="t" style="left:1285px;top:1353.5px">    <span style="color:#c8c8c8">788</span>   <span style="color:#c8c8c8">ja</span>   <span style="color:#c8c8c8">0</span>  <span style="color:#bbb014">Graphic</span>   <span style="color:#c8c8c8">0%</span>      <span style="color:#c8c8c8">3MiB</span>   <span style="color:#c8c8c8">0%</span>     <span style="color:#c8c8c8">6%</span>    <span style="color:#c8c8c8">162MiB</span> <span style="color:#c8c8c8">Hyprland</span></div>
<div class="t" style="left:1285px;top:1397.5px"><span style="color:#d0d0d0">F2</span><span style="color:#0e0e0e;font-weight:bold">Setup</span>   <span style="color:#d0d0d0">F6</span><span style="color:#0e0e0e;font-weight:bold">Sort</span>    <span style="color:#d0d0d0">F9</span><span style="color:#0e0e0e;font-weight:bold">Kill</span>    <span style="color:#d0d0d0">F10</span><span style="color:#0e0e0e;font-weight:bold">Quit</span>    <span style="color:#d0d0d0">F12</span><span style="color:#0e0e0e;font-weight:bold">Save</span> <span style="color:#0e0e0e;font-weight:bold">Config</span></div>
<div style="position:absolute;left:778px;top:368px;width:1004px;height:704px;border-radius:11px;background:#9c86c2;box-shadow:0 3px 9px 2px rgba(0,0,0,0.55)"></div>
<div style="position:absolute;left:779px;top:369px;width:1002px;height:702px;border-radius:10px;background:#86b0f6"></div>
<div style="position:absolute;left:780px;top:370px;width:1000px;height:700px;border-radius:9px;background:#fafafa;overflow:hidden">
<div style="position:absolute;left:0;top:0;width:1000px;height:46px;background:#ebebeb;border-bottom:1px solid #dcdcdc"></div>
</div>
<div style="position:absolute;left:1112px;top:376px;width:166px;height:34px;border-radius:7px;background:#d9d9d9"></div>
<svg style="position:absolute;left:1122px;top:383px" width="20" height="20" viewBox="0 0 20 20"><path d="M5.2 15.8A7 7 0 1 1 14.8 15.8" fill="none" stroke="#1e1e1e" stroke-width="1.9" stroke-linecap="round"/><path d="M6 6l4 4" stroke="#1e1e1e" stroke-width="1.8" stroke-linecap="round"/><circle cx="10" cy="10" r="2.2" fill="#1e1e1e"/></svg>
<div class="ui" style="left:1147.0px;top:384.3px;font-size:19.30px;line-height:19.30px;color:#262626;font-weight:bold">Performance</div>
<svg style="position:absolute;left:1327px;top:383px" width="20" height="18" viewBox="0 0 20 18"><path d="M7 9.5H5a2.5 2.5 0 0 1-2.5-2.5V4.5A2.5 2.5 0 0 1 5 2h6a2.5 2.5 0 0 1 2.5 2.5V6" fill="none" stroke="#1e1e1e" stroke-width="1.7"/><rect x="6.8" y="6.4" width="11" height="9.2" rx="2.5" fill="none" stroke="#1e1e1e" stroke-width="1.7"/></svg>
<div class="ui" style="left:1351.3px;top:384.3px;font-size:19.30px;line-height:19.30px;color:#262626;font-weight:bold">Apps</div>
<svg style="position:absolute;left:1712px;top:382px" width="10" height="22" viewBox="0 0 10 22"><circle cx="5" cy="5" r="2" fill="#222"/><circle cx="5" cy="11" r="2" fill="#222"/><circle cx="5" cy="17" r="2" fill="#222"/></svg>
<div style="position:absolute;left:1745px;top:381px;width:24px;height:24px;border-radius:12px;background:#dadada"></div>
<svg style="position:absolute;left:1751px;top:387px" width="12" height="12" viewBox="0 0 12 12"><path d="M2 2l8 8M10 2l-8 8" stroke="#222" stroke-width="2" stroke-linecap="round"/></svg>
<svg style="position:absolute;left:1526px;top:397px" width="14" height="20" viewBox="0 0 14 20"><path d="M1 1v15l3.6-3.4l2.6 6l2.4-1l-2.6-5.8H12z" fill="#111" stroke="#fff" stroke-width="1"/></svg>
<div style="position:absolute;left:786px;top:433px;width:261px;height:88px;border-radius:9px;background:#e5e5e5"></div>
<div style="position:absolute;left:780px;top:370px;width:280px;height:685px;overflow:hidden">
<div style="position:absolute;left:14px;top:73.3px;width:80px;height:68.5px;border:1px solid #1c71d8"></div>
<div class="ui" style="left:104.4px;top:77.2px;font-size:18.30px;line-height:18.30px;color:#2e2e2e">CPU</div>
<div class="ui" style="left:104.4px;top:103.8px;font-size:14.60px;line-height:14.60px;color:#2e2e2e">1% 2.34 Ghz</div>
<div class="ui" style="left:104.4px;top:125.8px;font-size:14.60px;line-height:14.60px;color:#2e2e2e">64 °C</div>
<div style="position:absolute;left:14px;top:164.3px;width:80px;height:68.5px;border:1px solid #62a0ea"></div>
<div class="ui" style="left:104.4px;top:168.2px;font-size:18.30px;line-height:18.30px;color:#2e2e2e">Memory</div>
<div class="ui" style="left:104.4px;top:194.8px;font-size:14.60px;line-height:14.60px;color:#2e2e2e">9%</div>
<div class="ui" style="left:104.4px;top:216.8px;font-size:14.60px;line-height:14.60px;color:#2e2e2e">1.96 GiB/22.9 GiB</div>
<div style="position:absolute;left:14px;top:255.3px;width:80px;height:68.5px;border:1px solid #26a269"></div>
<div class="ui" style="left:104.4px;top:259.2px;font-size:18.30px;line-height:18.30px;color:#2e2e2e">Disk 0 (nvme…</div>
<div class="ui" style="left:104.4px;top:285.8px;font-size:14.60px;line-height:14.60px;color:#2e2e2e">NVMe</div>
<div class="ui" style="left:104.4px;top:307.8px;font-size:14.60px;line-height:14.60px;color:#2e2e2e">0%</div>
<div style="position:absolute;left:14px;top:346.3px;width:80px;height:68.5px;border:1px solid #26a269"></div>
<div class="ui" style="left:104.4px;top:350.2px;font-size:18.30px;line-height:18.30px;color:#2e2e2e">Disk 1 (nvme1n1)</div>
<div class="ui" style="left:104.4px;top:376.8px;font-size:14.60px;line-height:14.60px;color:#2e2e2e">NVMe</div>
<div class="ui" style="left:104.4px;top:398.8px;font-size:14.60px;line-height:14.60px;color:#2e2e2e">0%</div>
<div style="position:absolute;left:14px;top:437.3px;width:80px;height:68.5px;border:1px solid #dc8add"></div>
<div class="ui" style="left:104.4px;top:441.2px;font-size:18.30px;line-height:18.30px;color:#2e2e2e">Ethernet (enp…</div>
<div class="ui" style="left:104.4px;top:467.8px;font-size:14.60px;line-height:14.60px;color:#2e2e2e">S: 0 Kbps</div>
<div class="ui" style="left:104.4px;top:489.8px;font-size:14.60px;line-height:14.60px;color:#2e2e2e">R: 0 Kbps</div>
<div style="position:absolute;left:14px;top:528.3px;width:80px;height:68.5px;border:1px solid #dc8add"></div>
<div class="ui" style="left:104.4px;top:532.2px;font-size:18.30px;line-height:18.30px;color:#2e2e2e">Wi-Fi (wlan0)</div>
<div class="ui" style="left:104.4px;top:558.8px;font-size:14.60px;line-height:14.60px;color:#2e2e2e">S: 0 Kbps</div>
<div class="ui" style="left:104.4px;top:580.8px;font-size:14.60px;line-height:14.60px;color:#2e2e2e">R: 0 Kbps</div>
<div style="position:absolute;left:14px;top:619.3px;width:80px;height:68.5px;border:1px solid #f66151"></div>
<div class="ui" style="left:104.4px;top:623.2px;font-size:18.30px;line-height:18.30px;color:#2e2e2e">GPU 0</div>
<div class="ui" style="left:104.4px;top:649.8px;font-size:14.60px;line-height:14.60px;color:#2e2e2e">NVIDIA GeForce RT…</div>
<div class="ui" style="left:104.4px;top:671.8px;font-size:14.60px;line-height:14.60px;color:#2e2e2e">0% (44 °C)</div>
</div>
<svg style="position:absolute;left:794px;top:443px" width="80" height="69" viewBox="0 0 80 69"><path d="M1 67.5L9 67L12 64.5L14.5 67L30 67L33 63L36 63.5L39 67L52 67L55.5 62.5L58 63.5L61 66L64 62L66.5 67L79 67V68H1z" fill="#8fb6ea" stroke="#1c71d8" stroke-width="1"/></svg>
<svg style="position:absolute;left:794px;top:534px" width="80" height="69" viewBox="0 0 80 69"><path d="M1 62.5L40 62.3L46 61.8L52 62.5L79 62.6V68H1z" fill="#bdd6f5" stroke="#62a0ea" stroke-width="1"/></svg>
<svg style="position:absolute;left:794px;top:625px" width="80" height="69" viewBox="0 0 80 69"><path d="M1 68L0.9 68L2.5 15.3L4.1 68L7.4 68L9.0 52.3L10.6 68L31.8 68L33.4 65.0L35.0 68L41.2 68L42.8 15.3L44.4 68L47.5 68L49.1 61.3L50.7 68L52.0 68L53.6 63.5L55.2 68L56.5 68L58.1 64.6L59.7 68L59.2 68L60.8 64.1L62.4 68L61.9 68L63.5 64.6L65.1 68L79 68z" fill="#8fd1ac" stroke="#26a269" stroke-width="1"/></svg>
<svg style="position:absolute;left:794px;top:807px" width="80" height="69" viewBox="0 0 80 69"><path d="M1 68L14 68L16 64L17 20L18.5 64L20 68L26 68L28 63.5L30 68L56 68L57.5 64.5L59 68L63 68L64.5 64.5L66 68L79 68z" fill="#ecbdec" stroke="#dc8add" stroke-width="1"/></svg>
<div class="ui" style="left:1073.0px;top:434.1px;font-size:30.80px;line-height:30.80px;color:#282828;font-weight:bold">CPU</div>
<div class="ui" style="right:800.0px;top:437.3px;font-size:24.00px;line-height:24.00px;color:#2e2e2e;font-weight:bold">AMD Ryzen 9 5900HS with Radeon Graphics</div>
<div class="ui" style="left:1073.0px;top:476.7px;font-size:15.70px;line-height:15.70px;color:#2e2e2e">Utilization</div>
<div class="ui" style="right:800.0px;top:476.7px;font-size:15.70px;line-height:15.70px;color:#2e2e2e">100%</div>
<svg style="position:absolute;left:1073px;top:494px" width="688" height="362" viewBox="0 0 688 362"><path d="M35.2 0V361M88.0 0V361M140.8 0V361M193.6 0V361M246.4 0V361M299.2 0V361M352.0 0V361M404.8 0V361M457.6 0V361M510.4 0V361M563.2 0V361M616.0 0V361M668.8 0V361M0 36H687M0 72H687M0 108H687M0 144H687M0 180H687M0 216H687M0 252H687M0 288H687M0 324H687" stroke="#c9dcf5" stroke-width="1" fill="none"/><path d="M0 361L0.2 351.7L10.9 354.2L22.2 355.3L34.8 353.4L44.7 354.2L55.9 353.4L70.0 355.1L81.2 354.2L92.5 355.3L115.5 341.0L127.6 352.8L138.9 354.2L150.1 353.7L162.8 354.5L174.0 353.9L183.9 352.8L196.5 350.8L209.2 353.9L220.4 352.5L231.7 354.5L244.3 354.5L255.6 352.0L266.8 352.5L279.5 353.9L290.7 352.5L302.0 333.4L313.2 339.0L325.3 332.6L337.2 347.5L348.4 354.8L361.1 353.4L372.3 355.1L383.6 353.9L394.8 351.4L406.1 352.0L418.7 353.1L430.0 351.4L441.2 352.5L453.9 353.9L476.9 326.7L489.0 332.0L500.3 333.4L511.5 352.2L522.8 337.9L534.0 334.0L546.7 323.3L557.9 343.0L570.6 353.1L580.4 353.4L591.7 354.5L602.9 354.2L615.6 353.9L626.8 354.5L639.5 355.3L650.7 354.2L662.0 355.3L674.6 354.8L686.5 355.6L687 361z" fill="#a3c5f0"/><path d="M0.2 351.7L10.9 354.2L22.2 355.3L34.8 353.4L44.7 354.2L55.9 353.4L70.0 355.1L81.2 354.2L92.5 355.3L115.5 341.0L127.6 352.8L138.9 354.2L150.1 353.7L162.8 354.5L174.0 353.9L183.9 352.8L196.5 350.8L209.2 353.9L220.4 352.5L231.7 354.5L244.3 354.5L255.6 352.0L266.8 352.5L279.5 353.9L290.7 352.5L302.0 333.4L313.2 339.0L325.3 332.6L337.2 347.5L348.4 354.8L361.1 353.4L372.3 355.1L383.6 353.9L394.8 351.4L406.1 352.0L418.7 353.1L430.0 351.4L441.2 352.5L453.9 353.9L476.9 326.7L489.0 332.0L500.3 333.4L511.5 352.2L522.8 337.9L534.0 334.0L546.7 323.3L557.9 343.0L570.6 353.1L580.4 353.4L591.7 354.5L602.9 354.2L615.6 353.9L626.8 354.5L639.5 355.3L650.7 354.2L662.0 355.3L674.6 354.8L686.5 355.6" fill="none" stroke="#3584e4" stroke-width="1.3"/><rect x="0.5" y="0.5" width="686.5" height="360.5" fill="none" stroke="#3584e4" stroke-width="1.2"/></svg>
<div class="ui" style="left:1073.0px;top:858.3px;font-size:15.70px;line-height:15.70px;color:#2e2e2e">60 seconds</div>
<div class="ui" style="right:800.0px;top:858.3px;font-size:15.70px;line-height:15.70px;color:#2e2e2e">0</div>
<div class="ui" style="left:1073.0px;top:884.3px;font-size:15.20px;line-height:15.20px;color:#3a3a3a">Utilization</div>
<div class="ui" style="left:1156.9px;top:884.3px;font-size:15.20px;line-height:15.20px;color:#3a3a3a">Speed</div>
<div class="ui" style="left:1073.0px;top:908.8px;font-size:21.00px;line-height:21.00px;color:#2c2c2c;font-weight:bold">1%</div>
<div class="ui" style="left:1156.9px;top:908.8px;font-size:21.00px;line-height:21.00px;color:#2c2c2c;font-weight:bold">2.34 GHz</div>
<div class="ui" style="left:1073.0px;top:942.8px;font-size:15.20px;line-height:15.20px;color:#3a3a3a">Processes</div>
<div class="ui" style="left:1156.9px;top:942.8px;font-size:15.20px;line-height:15.20px;color:#3a3a3a">Threads</div>
<div class="ui" style="left:1226.3px;top:942.8px;font-size:15.20px;line-height:15.20px;color:#3a3a3a">Handles</div>
<div class="ui" style="left:1073.0px;top:967.4px;font-size:21.00px;line-height:21.00px;color:#2c2c2c;font-weight:bold">339</div>
<div class="ui" style="left:1156.9px;top:967.4px;font-size:21.00px;line-height:21.00px;color:#2c2c2c;font-weight:bold">693</div>
<div class="ui" style="left:1226.3px;top:967.4px;font-size:21.00px;line-height:21.00px;color:#2c2c2c;font-weight:bold">4096</div>
<div class="ui" style="left:1073.0px;top:1001.6px;font-size:15.20px;line-height:15.20px;color:#3a3a3a">Up time</div>
<div class="ui" style="left:1073.0px;top:1026.2px;font-size:21.00px;line-height:21.00px;color:#2c2c2c;font-weight:bold">00:00:23:24</div>
<div class="ui" style="left:1302.3px;top:884.3px;font-size:15.20px;line-height:15.20px;color:#3a3a3a">Base Speed:</div>
<div class="ui" style="left:1438.0px;top:884.3px;font-size:15.20px;line-height:15.20px;color:#3a3a3a">3.55 GHz</div>
<div class="ui" style="left:1302.3px;top:906.3px;font-size:15.20px;line-height:15.20px;color:#3a3a3a">Sockets:</div>
<div class="ui" style="left:1438.0px;top:906.3px;font-size:15.20px;line-height:15.20px;color:#3a3a3a">1</div>
<div class="ui" style="left:1302.3px;top:928.3px;font-size:15.20px;line-height:15.20px;color:#3a3a3a">Virtual processors:</div>
<div class="ui" style="left:1438.0px;top:928.3px;font-size:15.20px;line-height:15.20px;color:#3a3a3a">16</div>
<div class="ui" style="left:1302.3px;top:950.3px;font-size:15.20px;line-height:15.20px;color:#3a3a3a">Virtualization:</div>
<div class="ui" style="left:1438.0px;top:950.3px;font-size:15.20px;line-height:15.20px;color:#3a3a3a">Unknown</div>
<div class="ui" style="left:1302.3px;top:972.3px;font-size:15.20px;line-height:15.20px;color:#3a3a3a">Virtual machine:</div>
<div class="ui" style="left:1438.0px;top:972.3px;font-size:15.20px;line-height:15.20px;color:#3a3a3a">No</div>
<div class="ui" style="left:1302.3px;top:994.3px;font-size:15.20px;line-height:15.20px;color:#3a3a3a">L1 cache:</div>
<div class="ui" style="left:1438.0px;top:994.3px;font-size:15.20px;line-height:15.20px;color:#3a3a3a">512 KiB</div>
<div class="ui" style="left:1302.3px;top:1016.3px;font-size:15.20px;line-height:15.20px;color:#3a3a3a">L2 cache:</div>
<div class="ui" style="left:1438.0px;top:1016.3px;font-size:15.20px;line-height:15.20px;color:#3a3a3a">4 MiB</div>
<div class="ui" style="left:1302.3px;top:1038.3px;font-size:15.20px;line-height:15.20px;color:#3a3a3a">L3 cache:</div>
<div class="ui" style="left:1438.0px;top:1038.3px;font-size:15.20px;line-height:15.20px;color:#3a3a3a">16 MiB</div>
</body></html>
